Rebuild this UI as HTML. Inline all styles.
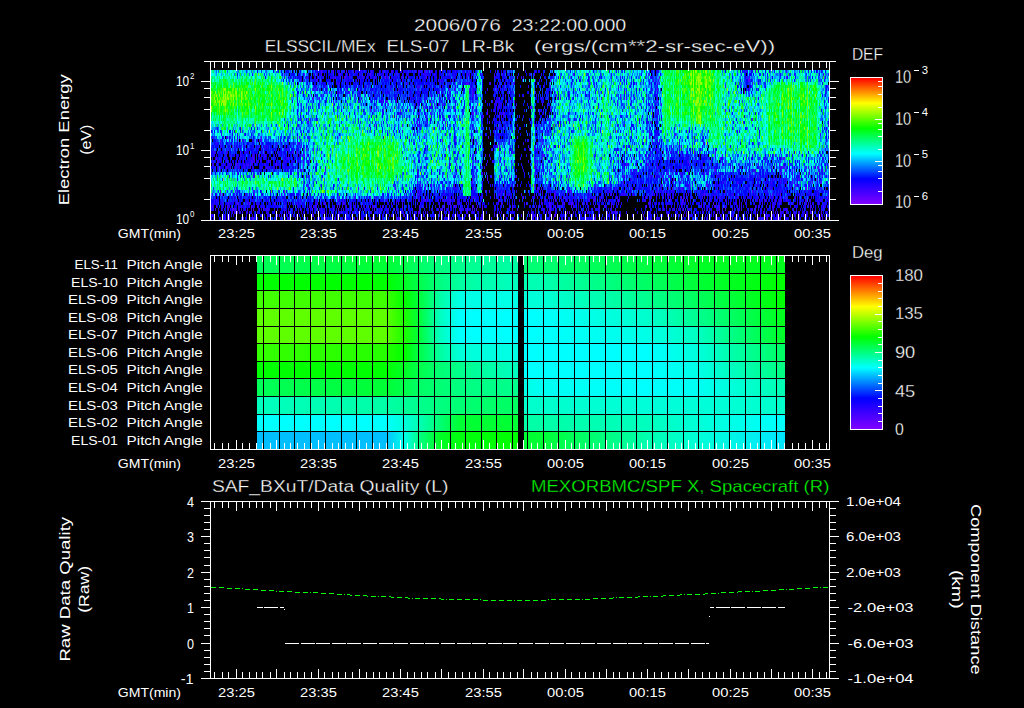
<!DOCTYPE html>
<html><head><meta charset="utf-8"><style>
html,body{margin:0;padding:0;background:#000;width:1024px;height:708px;overflow:hidden}
svg{display:block}
text{font-family:"Liberation Sans",sans-serif}
</style></head><body>
<svg width="1024" height="708" viewBox="0 0 1024 708" shape-rendering="crispEdges">
<rect width="1024" height="708" fill="#000"/>
<path stroke="#00ffcc" stroke-width="1" fill="none" d="M211.5 70v3m1 6v3m0 33v6m0 60v3m0 3v3m1 -117v3m0 99v3m0 6v3m1 -114v3m2 0v6m0 3v3m0 33v3m0 60v3m1 -114v3m0 45v3m0 12v3m1 -63v6m0 33v3m0 57v9m0 3v3m1 -66v6m0 3v3m1 -21v9m1 48v6m0 9v3m1 -75v3m0 15v3m0 45v3m1 -114v3m1 99v6m0 6v3m1 -15v3m1 -105v3m0 108v3m1 -108v3m0 39v3m1 -51v6m0 57v3m0 45v3m1 -3v6m0 3v3m1 -120v3m0 48v6m2 -60v3m0 3v3m1 -6v3m0 48v3m1 -57v3m0 36v3m0 6v3m0 6v3m0 54v3m1 -66v3m1 -48v3m0 48v3m0 6v3m0 33v3m1 -96v3m0 24v3m1 -33v3m0 45v6m0 54v6m1 -69v3m0 6v3m0 42v3m0 9v3m1 -66v3m2 6v3m1 -60v6m0 39v3m0 54v3m0 3v3m1 -69v3m0 6v6m0 3v3m1 -18v3m1 -6v3m0 9v3m0 3v6m1 -24v3m0 9v3m0 45v3m0 6v3m1 -12v12m1 -72v6m1 -54v9m0 42v3m0 9v3m1 -18v6m0 54v3m1 -105v3m0 30v3m0 6v3m0 6v3m0 51v3m1 -102v3m0 33v3m0 63v3m1 -111v3m0 45v3m0 54v3m1 -114v3m0 99v3m1 -105v3m0 48v3m0 69v3m1 -120v3m0 45v3m0 3v3m0 51v3m1 -111v3m0 99v3m0 12v3m1 -123v3m1 51v6m0 42v3m0 15v3m1 -84v3m0 66v3m1 -114v3m0 51v6m0 54v3m1 -12v3m2 -105v3m0 6v3m0 33v9m0 3v3m0 45v6m1 -66v6m0 6v6m0 45v3m1 -108v3m0 3v3m0 36v3m0 54v9m1 -15v3m0 15v6m1 -126v3m0 6v3m0 90v3m0 9v3m0 6v3m1 -123v3m1 54v3m0 3v3m0 39v3m1 -3v3m1 -3v3m0 3v6m1 -15v3m0 15v3m2 -123v3m0 54v6m1 42v3m1 -108v3m0 3v6m0 45v6m0 57v3m1 -18v3m1 -102v3m0 93v3m2 -60v3m0 66v3m1 -108v3m1 15v3m0 6v3m0 72v3m1 -108v3m0 42v3m0 48v3m0 9v3m1 -60v3m0 42v3m1 -84v3m0 87v3m1 -102v3m0 9v6m0 3v3m0 75v3m0 3v3m1 -90v3m0 12v3m0 6v3m1 -48v3m1 6v3m0 12v3m0 6v3m0 6v3m0 6v6m0 48v3m1 -81v3m0 3v3m0 63v3m1 -54v3m1 -36v3m0 18v3m0 6v3m0 3v3m0 51v3m1 -99v3m0 9v3m0 9v3m0 6v3m1 -36v3m0 9v6m0 6v6m0 57v3m0 6v3m1 -9v3m1 -48v3m0 42v3m1 -93v6m0 18v3m0 3v3m0 63v3m1 -69v3m0 9v3m0 45v3m1 -57v3m0 48v3m0 12v3m1 -126v3m0 30v3m0 21v6m0 18v3m1 -54v3m0 36v3m1 -60v3m0 6v3m1 -9v3m0 15v3m0 3v3m0 12v3m0 15v6m0 3v3m1 -39v3m0 72v3m1 -87v6m0 45v3m1 30v3m1 -105v3m0 9v3m0 48v3m1 -45v3m0 21v3m0 9v3m1 -60v3m0 15v3m0 18v3m0 24v3m0 6v3m0 3v3m1 -51v3m1 -3v3m0 15v3m0 30v3m1 -63v3m0 12v3m0 30v3m0 12v3m0 18v3m1 -75v6m0 63v3m1 -63v3m0 48v6m1 -66v3m0 6v3m0 24v3m0 6v3m0 3v3m0 6v3m1 -93v3m0 3v3m0 9v3m0 9v6m0 3v3m0 15v3m0 30v3m1 -93v3m0 15v6m0 21v3m0 9v3m0 3v3m0 30v6m1 -90v3m0 3v3m0 36v3m0 9v3m1 -51v3m0 12v3m0 12v3m0 15v3m1 -63v3m0 6v3m0 15v3m0 21v3m0 24v3m1 -84v3m0 3v3m0 9v3m0 27v6m0 3v3m0 15v3m0 18v3m1 -93v3m0 24v3m0 12v3m0 18v3m0 15v3m1 -57v3m0 27v3m0 12v3m1 -87v3m0 63v3m0 12v3m0 12v3m1 -84v3m0 66v3m0 6v3m0 3v3m1 -96v6m0 3v3m0 75v3m1 -96v3m0 39v3m0 3v3m0 18v3m0 6v3m0 6v3m0 6v3m1 -96v6m0 48v3m0 12v9m0 6v3m1 -81v3m0 63v3m0 3v3m1 -69v3m0 3v3m0 9v3m0 12v3m1 -3v3m0 6v6m0 6v3m0 3v6m1 -60v3m0 21v3m0 9v3m0 3v3m0 6v6m1 -24v3m0 24v3m0 6v6m0 3v3m1 -102v3m1 21v3m0 42v3m0 6v6m1 -51v3m0 27v3m1 -33v6m0 33v6m0 3v3m0 12v3m1 -87v3m0 36v3m0 39v3m1 -66v3m0 48v3m0 18v3m1 -87v3m0 21v3m1 -3v3m0 3v3m0 39v3m1 -96v3m0 15v6m0 6v3m0 9v3m0 9v3m0 24v3m1 -66v3m0 3v6m0 12v3m0 3v3m0 6v6m0 30v3m1 -45v3m0 15v6m0 3v3m0 6v3m0 9v3m1 -78v3m0 3v3m0 9v3m0 3v15m0 21v3m1 -75v3m1 -18v3m0 39v3m0 9v3m0 3v6m0 27v3m0 3v3m1 -66v3m0 27v3m0 33v3m1 -81v6m0 15v3m0 48v3m0 6v3m1 -87v3m0 24v3m1 -42v3m0 12v3m1 -12v3m0 36v3m0 30v3m0 3v3m1 -78v3m1 -15v3m0 12v6m0 3v6m1 -9v3m0 69v3m1 -48v3m0 15v3m1 -54v6m0 3v3m0 57v3m0 6v3m1 -51v3m0 24v3m0 12v3m0 3v3m1 -54v3m0 36v3m0 3v3m0 3v3m1 -9v3m0 3v3m1 -96v6m0 6v3m0 12v3m1 12v9m1 -48v3m0 9v3m0 3v3m0 9v3m0 3v3m0 42v12m0 3v3m1 -102v3m0 30v6m0 3v3m0 45v3m0 6v3m1 -99v3m0 33v3m2 -15v3m0 9v3m1 -18v3m0 15v3m0 12v6m0 6v3m0 12v3m0 12v3m1 -69v3m0 51v6m1 -63v12m1 -36v3m0 18v3m0 12v3m0 48v3m1 -69v3m0 57v9m1 -78v3m0 3v3m1 12v3m0 15v3m0 9v6m0 9v6m1 -54v3m1 -6v3m0 3v3m1 -9v3m0 57v3m1 -66v6m0 63v3m1 -90v3m0 9v3m0 6v3m0 54v3m1 -66v3m0 21v3m0 6v6m0 18v3m1 -48v3m0 36v3m1 -75v3m0 6v6m0 6v3m0 6v3m1 -9v3m0 57v3m1 -60v3m0 3v6m1 -12v3m0 54v3m1 -87v3m0 12v3m0 63v3m1 -84v3m0 9v3m0 69v3m1 -9v3m1 -51v3m0 51v3m1 -75v3m0 3v3m0 6v3m0 9v3m0 42v3m1 -84v6m0 3v3m0 3v3m0 66v3m1 -90v3m0 6v3m0 33v3m0 27v6m0 9v3m1 -78v3m0 63v3m1 -63v3m1 -21v3m0 9v3m0 75v3m1 -24v3m1 -42v3m0 6v3m0 33v3m0 9v3m1 -72v6m0 24v3m0 3v3m0 18v3m1 -51v6m0 6v3m0 33v6m1 -63v3m0 21v3m0 15v3m0 27v3m1 -60v3m1 -15v9m0 21v3m0 9v3m0 12v3m1 -54v6m0 45v3m1 -57v3m0 3v3m0 9v3m0 21v3m1 -45v3m0 30v9m1 -42v3m0 3v6m0 12v6m0 3v3m0 18v3m1 -57v3m0 15v9m0 18v3m1 -9v6m0 12v3m1 -72v3m0 12v3m0 21v3m0 15v3m1 -60v6m0 30v3m0 3v3m0 9v3m0 3v3m0 3v6m1 -57v3m0 3v3m0 39v3m1 -9v3m0 3v3m0 3v3m1 -78v3m1 -3v3m0 48v3m0 9v3m0 6v3m1 -48v3m0 21v3m1 0v3m1 -24v3m1 12v3m1 -24v3m0 3v3m0 6v3m1 -9v3m0 15v3m0 6v3m1 -27v3m0 6v3m1 -30v3m0 36v3m1 9v3m2 -6v3m1 -60v3m0 15v9m0 6v3m1 18v3m0 3v3m0 3v3m1 -93v3m0 48v3m0 18v3m1 -39v6m0 3v3m0 6v3m0 9v3m1 -51v6m0 3v3m0 18v3m0 9v3m0 21v3m1 -81v3m0 12v3m0 3v3m0 15v3m0 3v3m0 12v6m1 -36v3m0 6v6m0 12v3m0 6v3m1 -48v3m0 3v6m0 12v3m0 6v3m0 21v6m1 -78v6m0 3v3m0 15v3m0 27v3m0 6v3m1 -78v3m0 69v3m1 -30v3m0 21v3m1 -21v3m0 12v3m1 -45v3m0 24v6m0 6v3m1 -51v3m0 45v3m0 18v3m1 -57v3m0 30v3m1 -45v3m0 18v3m1 -24v3m0 15v3m0 18v12m1 -78v3m0 18v3m0 18v3m1 -48v3m0 33v3m0 9v3m1 -24v3m0 18v6m0 12v6m0 6v3m1 -39v3m0 24v3m0 12v3m1 -66v3m1 33v6m1 -3v6m1 -66v3m2 69v3m1 -69v3m0 27v3m1 -27v6m0 9v3m0 30v3m0 21v3m1 -78v3m0 6v3m0 36v3m0 27v3m1 -90v3m0 36v3m0 3v6m0 3v3m0 15v6m1 -69v3m0 3v3m0 12v3m0 3v3m1 -45v3m0 9v3m0 54v3m1 -60v3m0 18v3m0 6v3m0 18v9m0 6v3m1 -63v6m0 63v3m1 -75v3m0 12v9m0 27v3m0 3v3m0 21v3m0 3v3m0 3v3m1 -63v3m0 15v3m0 9v3m0 6v3m0 6v3m0 6v3m1 -105v9m0 6v3m0 18v3m0 3v6m0 18v3m0 12v3m1 6v3m1 -96v3m0 21v3m0 45v12m0 9v3m0 6v3m0 3v3m2 -75v3m0 12v3m0 24v3m0 6v6m1 -18v3m0 12v3m2 -48v3m2 -27v3m0 3v3m1 18v3m1 18v3m1 -78v3m0 24v3m0 36v3m0 6v3m1 -72v3m0 18v3m0 6v3m0 9v3m0 42v3m0 9v3m1 -96v3m0 6v3m0 30v3m0 6v3m0 33v3m1 -96v3m0 18v6m0 45v6m0 6v3m0 6v3m0 3v6m1 -120v3m0 18v3m0 54v3m13 15v3m2 0v3m0 6v3m1 -18v3m0 3v3m0 3v3m1 -24v3m2 24v3m2 -27v6m0 3v3m1 -15v3m0 12v3m0 6v3m2 -3v3m1 -39v3m0 12v3m0 15v3m1 -30v3m0 21v3m2 -12v3m1 -24v3m0 6v3m0 15v3m0 3v3m1 -45v3m0 21v3m1 -27v6m1 -60v3m0 42v6m0 39v3m1 -60v3m0 21v3m0 18v3m17 -81v3m0 18v3m0 24v3m1 -18v3m0 9v3m0 30v3m0 9v3m0 3v3m0 3v3m1 -84v3m0 27v3m0 24v3m0 9v3m0 6v6m0 6v3m1 -114v3m0 54v3m7 27v3m3 -18v3m0 6v6m0 6v3m1 -27v3m1 -15v3m0 21v3m0 6v3m0 3v3m1 -33v3m0 33v3m1 -27v3m0 3v3m0 3v3m2 -33v3m0 9v3m1 -69v3m1 -9v3m0 12v3m0 6v3m0 15v3m0 21v3m0 18v3m0 12v3m1 -93v3m0 48v3m0 12v6m1 -15v3m1 -24v3m0 3v3m0 15v3m0 18v3m1 -75v3m0 12v6m0 21v3m0 24v3m1 -99v3m0 27v3m0 9v3m0 39v3m0 12v3m0 3v3m1 -102v3m0 18v3m0 57v3m0 9v3m1 -60v3m0 21v6m0 33v3m1 -51v3m0 21v3m0 6v3m1 -96v3m0 3v3m0 3v3m0 15v3m0 3v3m0 3v3m0 33v6m1 -84v3m0 6v3m0 3v3m0 6v3m0 3v3m0 18v3m0 9v3m0 42v3m1 -108v3m0 9v3m0 9v3m0 39v3m0 27v6m1 -105v3m0 9v3m0 84v3m0 9v3m1 -111v3m0 21v3m0 36v3m0 15v3m0 9v3m1 -78v3m0 6v3m0 30v3m0 15v3m0 6v3m0 3v3m0 21v3m1 -114v3m0 18v3m0 18v3m0 9v6m0 12v6m1 -75v3m0 18v6m0 39v3m1 -3v3m0 3v3m0 3v3m0 9v3m1 -81v3m0 12v3m0 9v6m0 57v3m1 -93v3m0 21v3m0 3v3m0 6v3m0 3v3m0 9v12m1 -48v3m0 9v3m0 6v3m0 12v3m0 21v3m0 3v3m1 -102v3m0 54v3m0 27v3m0 15v3m1 -111v3m0 21v3m0 15v6m2 -6v3m1 -24v3m0 3v3m0 12v3m0 9v6m0 42v6m1 -114v3m0 3v3m0 9v3m0 3v3m0 6v3m0 3v3m0 3v3m0 12v3m0 45v3m0 6v3m1 -81v3m0 15v3m0 45v3m1 -108v3m0 9v3m0 87v3m1 -108v3m0 9v3m0 3v3m0 99v3m1 -96v3m0 3v3m1 -24v3m0 30v3m0 3v3m1 -48v3m1 -3v3m0 21v3m0 6v3m0 24v3m0 36v3m0 9v3m1 -63v6m1 -24v3m1 -42v3m0 66v3m0 9v3m0 18v3m0 6v3m1 -45v6m0 6v3m0 9v6m1 -75v6m1 30v3m1 -42v3m1 9v3m0 3v3m0 6v3m0 6v3m0 33v6m1 -93v3m0 33v3m0 21v3m1 -60v3m0 21v3m0 39v3m0 21v3m1 -96v3m0 12v6m0 27v3m0 18v3m0 24v6m1 -105v3m0 12v3m0 21v3m0 18v3m0 45v3m1 -99v3m0 21v6m0 6v3m0 33v3m0 3v3m0 12v3m1 -108v3m0 24v3m0 21v3m0 3v3m0 3v3m0 15v3m1 -72v3m0 18v6m0 21v3m0 3v6m0 3v3m0 3v3m1 -57v9m0 3v3m0 3v3m0 15v3m0 3v3m0 18v3m1 -60v3m0 9v3m0 48v3m1 -93v3m0 6v3m0 39v3m0 3v3m0 9v6m0 21v3m0 6v3m1 -117v3m0 6v3m0 3v6m0 9v3m0 3v3m0 3v3m0 3v3m0 24v3m1 -78v3m0 27v3m0 6v6m0 27v6m0 3v3m0 21v3m1 -105v6m0 3v3m0 33v3m0 12v3m0 3v3m0 6v3m1 -72v3m0 3v3m1 0v3m0 15v6m0 15v3m0 12v3m0 3v3m1 -75v3m0 21v6m0 12v3m1 -39v3m1 18v3m0 3v3m0 21v3m0 6v3m0 3v6m1 -72v3m0 9v3m0 18v3m0 9v3m0 18v3m0 9v3m0 3v3m1 -30v3m0 33v6m1 -93v3m0 15v3m0 6v3m0 12v3m0 18v3m1 -78v3m0 30v3m0 9v3m0 12v3m0 24v3m0 15v3m1 -102v3m0 12v3m0 3v3m0 6v3m0 3v3m0 33v3m1 -72v3m0 21v3m0 24v3m1 -33v3m0 12v3m1 -54v3m0 27v3m0 36v3m1 -51v3m1 15v3m0 27v3m0 9v3m1 -75v3m1 18v3m0 36v3m1 -9v3m1 -63v6m0 21v3m0 3v3m0 18v3m0 24v3m0 3v3m0 3v6m1 -42v3m0 3v3m0 3v3m1 -27v3m0 12v12m1 -75v3m0 12v3m0 27v3m1 -27v3m0 6v6m0 18v3m0 12v3m1 -54v3m0 15v6m0 39v3m1 -81v3m0 42v3m1 -33v3m0 66v3m1 -48v3m0 6v3m1 -54v3m0 45v6m1 -45v3m0 3v3m0 3v3m2 -15v3m0 9v3m0 33v3m0 21v3m1 -81v3m0 21v6m0 18v3m0 15v3m0 6v3m1 -72v3m0 3v3m0 36v3m0 3v9m0 3v3m1 -54v3m0 12v3m0 3v3m0 6v3m0 12v3m1 3v3m1 -66v3m0 3v6m0 3v3m0 36v3m0 27v3m1 -75v3m1 -15v3m0 12v3m1 33v3m0 3v3m2 -30v3m0 24v6m0 6v3m0 3v3m1 -42v3m0 15v3m1 -60v3m0 21v3m0 9v3m4 -24v3m0 9v3m0 15v3m0 15v3m5 -48v3m0 42v3m1 -69v3m0 30v3m2 -39v3m0 6v3m0 18v3m0 24v3m1 -42v3m0 6v3m0 3v3m0 75v3m1 -111v6m0 15v3m0 18v3m0 3v6m1 3v3m1 18v6m1 -78v3m0 9v3m0 24v3m0 6v3m1 6v3m1 -54v3m0 48v3m1 -9v3m0 3v3m1 -30v3m1 -30v3m0 21v6m0 3v3m0 6v3m1 -9v3m0 6v3m0 6v3m1 -54v6m0 6v3m0 9v3m0 3v3m0 3v6m0 6v3m1 -30v3m0 33v3m1 -69v3m0 15v3m0 21v3m1 0v3m0 60v3m2 -48v3m1 -45v6m0 12v6m0 12v3m1 -15v3m0 3v3m1 -54v3m0 6v3m0 3v3m0 6v15m0 69v3m1 -54v3m0 9v3m1 -75v3m0 45v3m1 3v3m0 6v6m1 -15v3m0 21v3m1 -36v3m0 18v3m1 0v3m2 -30v3m0 15v3m0 9v3m1 -18v12m0 30v6m1 0v3m2 -48v3m0 45v3m1 -63v3m0 3v6m1 -3v3m1 -6v3m1 0v3m0 9v3m1 -3v3m0 6v3m1 -27v3m0 9v3m1 36v3m1 -45v3m1 42v3m3 -6v3m1 -57v3m0 51v3m1 -60v3m3 6v3m0 9v6m0 24v3m0 6v3m1 -60v3m0 9v3m0 3v3m1 3v3m1 -12v3m1 -9v3m0 9v6m1 -81v6m0 3v3m0 3v6m0 6v9m0 3v3m0 6v6m0 6v6m0 6v3m1 -75v3m0 15v3m0 3v6m0 3v3m0 27v3m0 15v3m1 -6v3m1 -6v3m0 6v3m1 -75v3m0 33v3m0 3v6m0 9v3m0 9v3m0 15v3m1 -99v3m0 24v3m0 12v6m0 9v6m1 -66v3m0 3v3m0 3v3m0 6v3m0 12v6m0 27v3m0 27v3m1 -96v6m0 6v3m0 12v3m0 3v3m0 3v3m0 12v3m1 -57v3m0 21v3m0 30v3m0 3v3m0 12v3m0 12v3m1 -87v3m0 30v3m0 6v3m0 18v3m0 3v3m2 -57v6m0 27v3m0 33v3m1 -102v3m0 24v3m1 21v3m0 3v3m0 3v3m0 33v3m1 -102v3m0 15v3m0 30v3m0 27v3m0 3v3m1 -72v3m0 36v3m0 12v3m1 -60v3m0 3v3m0 6v6m0 18v3m0 27v3m0 12v3m1 -102v3m0 24v3m1 -18v6m0 6v3m0 27v3m0 6v3m0 3v6m1 -57v3m0 12v3m0 24v3m0 6v3m0 21v3m0 3v3m1 -102v3m0 6v3m0 33v3m0 3v3m0 21v3m0 3v3m0 15v3m1 -78v3m0 24v3m1 -48v6m1 -6v3m0 18v3m0 9v3m0 3v3m0 27v3m0 9v3m1 -75v3m0 6v3m0 9v3m0 6v3m1 -3v3m0 12v9m0 6v3m0 9v3m1 -84v3m0 15v3m0 39v3m1 -66v3m0 9v3m0 6v3m0 30v3m0 27v3m1 -30v3m1 -39v6m0 6v3m0 3v3m0 3v3m0 24v3m1 -45v3m0 6v3m0 9v3m1 -21v3m0 9v3m0 15v3m0 9v3m1 -51v3m0 9v3m0 6v3m0 12v3m1 -69v3m0 30v3m0 9v3m0 21v3m0 12v3m1 -33v3m0 18v3m1 -54v3m0 6v3m0 15v6m0 6v3m0 6v3m0 12v3m1 -72v3m0 24v3m0 9v3m0 21v6m1 -51v3m0 12v3m0 3v9m0 3v3m1 -57v6m0 36v9m0 9v3m0 15v3m1 -96v3m0 36v3m1 -3v3m0 27v3m0 3v3m0 9v3m1 -51v3m0 18v3m0 24v3m1 -87v3m0 15v6m0 9v3m0 51v3m1 -90v3m0 63v3m1 -72v3m0 3v3m0 12v3m0 3v3m0 18v6m0 24v3m1 -81v3m0 30v3m0 6v3m0 12v3m0 6v6m0 3v3m1 -51v3m0 6v3m0 21v6m0 9v3m0 3v3m0 3v3m1 -78v3m0 33v6m0 24v3m0 3v6m1 -90v3m0 30v6m0 3v6m0 6v6m0 6v9m1 -66v3m0 27v3m0 6v6m0 6v3m0 6v3m1 -3v3m1 -60v3m0 12v3m0 18v3m1 -36v3m0 6v3m0 6v3m0 3v3m0 3v6m0 9v3m0 3v3m1 -66v3m0 12v3m0 18v3m0 30v3m0 12v3m1 -75v3m1 -3v6m0 18v3m0 9v3m0 27v3m0 15v3m1 -93v3m0 15v3m0 30v3m0 15v3m1 -66v3m0 21v3m0 3v3m0 12v3m0 3v3m1 -9v3m0 12v3m0 15v3m3 -84v3m0 33v3m0 24v6m1 -3v3m2 -18v6m0 6v3m1 -66v3m0 9v9m0 9v3m0 12v3m0 9v6m2 -69v3m1 -6v3m1 -6v3m0 39v3m0 12v3m0 24v3m2 -48v3m0 18v3m0 15v3m1 -69v3m0 57v3m0 12v3m2 -27v3m0 3v6m1 3v3m0 3v6m1 -90v3m0 75v3m1 -75v3m0 6v3m0 15v3m0 6v3m1 -42v3m0 108v3m1 -111v3m0 3v6m0 48v3m0 6v3m0 6v6m0 3v3m1 -60v3m1 -27v3m0 69v3m1 -84v3m0 3v3m0 3v6m0 54v6m1 -81v3m0 78v3m0 27v3m1 -102v3m0 12v3m0 3v3m0 33v3m0 3v3m1 -69v3m0 81v3m1 -93v3m1 36v3m0 30v3m1 3v9m0 6v3m0 18v3m1 -111v3m0 66v3m1 -60v3m0 48v3m0 3v3m0 21v3m1 -105v3m0 69v3m0 18v3m1 -6v9m1 -78v3m0 24v9m0 6v3m0 12v3m0 3v3m0 12v3m1 -93v3m0 69v3m0 21v3m1 -108v3m0 9v3m0 3v3m0 30v3m0 27v3m0 12v3m2 -90v6m0 63v3m0 15v3m1 -96v6m0 69v3m1 -75v6m0 21v3m1 -27v3m0 93v3m1 -81v3m0 51v6m0 9v3m1 -84v3m0 6v3m0 12v3m0 9v6m0 9v6m0 9v3m1 -69v3m0 6v3m0 6v3m0 9v3m0 21v9m1 -54v3m0 24v3m0 3v3m0 9v3m1 -57v3m0 9v3m0 48v3m1 -30v3m0 3v3m0 12v3m0 6v3m1 -54v3m0 36v3m1 -72v3m0 18v3m0 9v6m0 6v3m0 3v3m0 15v3m0 24v3m1 -78v3m0 36v3m0 45v3m1 -99v3m0 48v3m0 9v3m0 12v3m1 -84v3m0 27v3m0 9v3m1 -54v3m0 9v3m0 21v6m0 6v3m0 15v3m0 33v3m0 3v3m1 -111v3m0 3v3m0 102v3"/><path stroke="#00ffff" stroke-width="1" fill="none" d="M211.5 73v3m0 45v3m0 9v3m0 39v3m1 -105v3m0 102v3m0 3v3m1 -108v3m0 39v3m0 6v3m0 48v3m1 -60v3m0 51v3m1 -105v3m0 51v6m0 45v3m1 -54v6m0 45v3m1 -114v3m1 60v3m0 36v3m0 18v3m1 -123v3m1 -3v6m0 54v3m0 48v3m1 -66v3m0 54v3m0 3v3m1 -111v3m0 96v3m0 6v3m0 3v3m1 -63v3m1 -60v3m0 111v3m1 -57v3m0 42v3m0 6v3m1 -60v6m0 39v3m1 -54v3m0 12v3m0 51v3m1 -66v3m2 -63v3m0 3v3m0 93v6m1 -108v3m0 57v3m0 60v3m1 -123v3m0 108v3m1 -51v6m0 45v3m1 -114v6m0 51v3m1 -66v3m0 102v3m1 -45v3m0 39v3m1 -66v9m0 9v3m1 -60v3m0 45v3m0 51v3m1 -6v3m0 3v3m1 -48v6m0 48v3m1 -120v3m0 60v3m0 36v3m0 3v3m1 -108v3m0 72v3m1 -27v3m1 -6v3m0 63v3m1 -54v3m0 51v3m2 -3v3m1 -123v3m0 54v3m0 6v3m1 -63v3m0 51v3m2 -60v3m0 114v3m1 -9v3m0 6v3m1 -120v3m1 105v6m1 3v3m1 -63v6m2 -15v3m0 3v3m1 -57v3m0 51v3m0 57v6m1 -126v3m0 3v3m3 48v3m0 3v3m0 3v3m0 30v3m1 -105v3m0 48v6m0 6v3m0 42v3m0 12v3m1 -105v3m0 78v6m0 6v3m0 3v3m1 0v3m1 -63v6m0 33v6m0 12v3m1 -63v3m0 54v3m1 -12v3m0 9v3m1 -123v3m0 51v3m0 57v3m1 -117v3m0 54v3m1 -60v3m0 54v12m1 -66v3m0 3v3m0 39v6m0 9v3m1 -66v3m0 48v3m0 9v3m0 33v3m0 3v3m0 6v3m1 -18v6m1 -99v3m0 45v3m0 48v3m1 -48v3m1 -60v3m1 0v3m0 45v3m0 42v6m0 9v3m1 -117v3m0 57v3m0 36v3m0 15v6m1 -78v3m0 9v3m0 39v6m0 9v3m1 -57v3m0 54v3m1 -75v12m1 -51v6m0 27v3m0 12v3m0 3v3m2 57v3m1 -117v3m0 30v6m0 57v3m1 -75v3m0 3v9m0 60v3m1 -96v3m0 12v3m0 27v3m1 -33v3m1 -24v3m0 6v3m0 21v3m0 24v3m0 48v3m1 -108v3m0 24v3m0 9v3m0 45v3m0 3v3m1 -81v6m0 78v3m1 -66v3m1 -36v3m0 18v6m0 12v3m0 63v3m1 -114v6m0 51v3m0 27v3m0 18v3m2 -96v6m0 18v3m0 6v3m0 6v3m1 -60v6m0 15v9m0 18v3m0 42v3m0 6v3m1 -99v3m0 6v3m0 72v3m0 9v3m1 -93v3m0 51v3m0 6v3m0 6v3m1 -87v3m0 12v3m0 6v3m0 3v3m0 30v3m0 30v3m0 3v3m0 3v3m2 -93v3m0 18v3m1 -54v6m0 24v3m0 9v3m0 39v3m0 3v6m0 18v3m1 -57v3m0 3v3m0 30v3m0 15v3m1 -75v3m0 15v3m0 6v3m1 -54v3m1 -3v3m0 18v3m0 33v3m1 -54v3m0 30v3m0 42v3m0 12v3m1 -111v6m0 45v3m0 3v3m0 3v3m0 3v3m0 27v3m1 -93v6m0 12v3m0 27v3m0 12v3m0 3v3m1 -72v3m0 18v3m0 72v3m1 0v3m1 -93v3m0 18v3m0 21v3m1 -57v3m0 18v3m0 12v3m0 9v3m0 15v3m0 18v3m0 12v3m1 -90v3m0 6v3m0 21v3m0 24v3m0 18v3m1 -75v3m0 12v3m0 24v3m0 6v3m0 6v3m0 9v3m0 6v3m1 -90v3m0 9v3m0 12v3m0 3v3m0 33v3m1 -84v3m0 57v3m1 -51v3m0 48v3m0 9v3m1 -57v3m0 21v3m0 3v3m0 15v3m1 -60v3m0 3v3m0 21v3m0 18v3m0 9v3m1 -78v3m0 9v3m0 39v3m0 3v3m0 6v3m1 -54v6m0 24v3m0 9v6m0 12v3m0 3v3m1 -63v6m0 3v3m0 60v3m1 -93v3m1 -21v3m0 54v3m0 24v3m1 -66v6m0 27v3m0 51v6m1 -93v3m0 24v6m0 6v3m0 15v3m1 -78v3m0 51v3m0 12v3m0 18v3m0 12v3m1 -96v3m0 3v3m0 12v3m0 51v6m0 3v3m1 -72v3m0 21v3m0 15v6m0 3v3m0 12v3m1 -57v3m0 30v3m0 27v3m1 -87v3m0 3v3m0 6v3m0 3v3m0 3v3m0 6v3m0 51v3m1 -60v3m1 -39v3m0 15v3m0 27v6m0 3v3m1 -42v3m0 6v3m0 30v3m0 9v3m0 3v3m0 6v3m1 -48v6m1 -42v3m0 6v3m0 3v3m0 12v3m0 39v3m0 6v3m0 3v3m1 -60v3m0 9v3m0 36v3m1 -105v3m0 15v3m0 84v3m1 -87v3m1 -15v3m0 18v3m0 3v3m0 57v3m0 3v3m0 3v3m1 -18v3m0 9v3m1 -99v3m0 12v3m0 36v3m0 30v3m1 -9v3m0 9v3m1 -99v3m0 15v3m0 6v3m0 66v3m1 -87v3m0 18v3m1 -3v3m0 48v3m2 -84v3m0 87v3m0 3v3m1 -90v3m0 6v3m1 -3v3m0 12v3m1 3v3m0 15v3m1 -51v3m0 6v3m0 66v3m0 6v6m1 -102v3m0 33v3m0 60v3m1 -75v3m0 12v3m0 30v3m0 6v3m1 -69v3m0 12v6m0 48v3m0 3v3m1 -87v3m0 27v3m2 -21v3m0 3v3m1 -27v3m0 12v6m0 63v3m0 6v3m1 -66v3m2 54v3m2 -93v12m0 3v3m0 78v3m1 -96v3m0 87v6m1 -63v3m0 21v3m0 21v6m1 -69v3m0 3v3m0 6v6m1 54v3m1 -69v6m1 6v3m0 36v3m0 12v3m1 -3v3m1 -9v6m2 -90v3m0 6v3m0 78v3m1 -93v3m0 15v3m0 66v3m1 -90v3m1 6v3m0 78v3m2 -69v6m0 48v3m0 6v3m1 -6v3m1 -75v6m1 -18v3m0 87v3m1 -9v3m1 -66v3m0 9v3m1 -36v3m0 15v3m0 57v3m1 -72v3m0 9v3m0 3v3m0 57v6m1 -93v3m0 12v3m0 69v3m1 -72v3m2 12v3m1 -30v3m0 9v3m0 9v3m1 -9v3m1 -12v3m0 3v3m0 12v3m1 6v3m0 24v3m1 6v6m1 -45v3m1 -45v3m0 12v3m0 6v3m0 6v3m0 54v3m1 -48v3m0 6v3m1 -27v3m0 3v3m0 6v3m0 3v3m0 6v3m0 3v3m0 9v3m0 9v3m1 -93v3m0 3v3m0 24v6m0 48v3m1 -87v3m0 6v3m0 39v6m1 -60v3m0 24v3m0 27v3m0 18v3m1 -63v3m0 6v3m0 6v6m0 6v6m1 -54v3m0 12v3m0 21v3m0 42v3m1 -69v3m0 42v3m0 9v3m0 9v3m1 -54v3m0 15v9m0 6v3m1 -69v3m0 15v3m1 -15v3m0 18v3m0 6v3m0 18v6m0 3v3m1 -30v3m0 33v3m1 -48v3m0 15v3m0 18v3m1 -66v3m0 15v3m0 9v3m0 9v3m0 15v3m1 -36v3m0 12v3m0 21v3m1 -66v3m0 30v3m0 6v3m1 -21v3m0 36v3m1 -9v3m0 3v3m1 -78v6m0 30v3m0 21v3m1 -48v3m0 24v3m0 6v3m2 -45v3m0 69v6m1 -75v3m0 21v3m0 3v3m0 15v3m0 9v3m1 -51v3m0 9v3m1 -42v3m0 84v3m1 -87v3m0 54v3m0 6v3m1 -72v3m0 12v3m0 18v3m0 30v3m1 -60v3m0 24v3m0 3v3m0 18v3m1 -42v6m0 6v3m0 33v3m1 -54v3m1 6v3m0 3v3m0 21v3m0 9v3m1 -3v3m1 -42v6m0 9v3m0 9v3m0 9v3m1 -78v3m0 9v6m0 45v3m0 9v3m1 -63v3m0 39v3m0 9v6m0 6v3m1 -66v3m0 6v6m0 33v3m1 -57v3m0 24v3m0 24v3m1 -33v3m0 3v3m0 3v3m0 3v3m1 -66v3m0 27v3m0 9v6m0 6v3m0 12v3m0 12v6m0 3v3m1 -69v3m0 12v3m0 9v3m0 24v6m0 9v3m1 -39v3m0 24v3m1 -84v3m0 54v3m0 3v3m0 3v3m1 -42v3m0 45v3m1 -72v3m0 3v3m0 15v3m0 12v3m0 39v3m2 -78v3m0 33v6m1 -54v3m0 9v3m0 3v9m0 9v9m1 -24v3m0 6v3m0 21v3m0 21v3m1 -63v3m0 45v3m0 9v3m0 3v3m1 -96v6m0 3v6m0 3v3m0 3v3m0 15v3m0 39v3m0 3v3m1 -81v3m0 3v6m0 3v3m0 3v3m0 3v3m0 42v9m1 -63v3m0 54v3m1 -69v3m1 63v3m1 -69v3m0 18v3m1 -48v3m0 6v3m0 36v3m0 3v3m1 -51v3m0 3v3m0 9v3m0 6v3m0 9v3m1 -51v3m0 36v3m0 6v3m0 9v3m1 -57v3m0 9v3m0 6v3m0 27v3m0 6v3m0 9v3m0 12v3m1 -75v3m0 30v6m1 3v3m0 6v6m0 6v3m0 6v3m1 -78v3m0 24v3m0 27v3m0 3v3m0 3v6m1 -93v3m0 6v6m0 12v3m0 12v6m0 12v3m0 21v3m1 -54v3m2 -15v3m0 39v3m2 -27v3m0 33v3m1 -54v3m0 9v3m0 6v3m1 -30v3m0 48v3m0 6v6m1 -66v3m2 18v3m0 6v3m0 9v3m0 9v3m0 3v3m1 -39v3m0 6v3m1 -36v3m0 15v6m0 6v3m0 45v3m1 -102v3m0 36v9m0 18v3m0 6v3m0 6v3m0 3v3m1 -93v3m0 39v3m0 6v3m0 15v9m0 6v6m0 6v3m1 -84v3m0 6v3m0 3v3m0 3v3m0 3v3m0 27v3m0 3v3m0 6v9m0 12v3m1 -105v3m0 27v3m0 18v3m0 33v3m1 -99v9m0 15v3m0 24v3m0 12v3m2 51v3m7 -60v3m5 9v3m1 -9v9m1 -6v3m3 9v3m1 -18v3m0 3v3m0 3v3m1 6v3m1 -24v3m0 15v3m1 3v3m1 -30v3m1 0v3m0 3v3m0 15v3m2 -30v3m0 33v3m1 -27v6m1 0v6m0 3v3m2 0v6m1 -63v3m0 36v3m1 -42v3m9 -42v3m8 6v3m0 6v3m0 45v6m0 3v6m0 6v3m1 -87v3m0 42v3m0 6v3m1 12v3m1 -24v3m0 45v3m8 -36v3m0 24v3m1 -42v6m0 9v3m0 30v3m1 -48v3m0 27v3m0 12v3m1 -57v3m0 39v3m1 9v3m1 -63v3m1 12v3m0 33v3m1 -36v3m0 12v3m1 -15v3m0 24v3m1 -36v3m0 6v3m0 21v3m0 6v3m1 -99v3m0 63v3m0 12v3m0 18v3m1 -15v3m1 -72v3m0 30v3m0 15v3m0 24v3m1 -114v3m0 3v3m0 9v3m0 18v3m0 24v3m0 21v3m1 -75v3m0 45v6m0 9v6m0 3v3m1 -93v3m0 27v3m0 39v3m0 3v6m0 9v3m1 -93v3m0 6v3m0 51v3m0 9v3m0 15v3m1 -84v3m1 -6v3m0 6v3m0 6v3m0 6v3m0 57v3m0 9v3m0 3v3m1 -111v3m0 6v3m0 12v3m0 12v3m0 9v3m0 9v6m0 6v6m0 3v3m0 18v3m1 -114v3m0 63v3m0 18v9m0 3v3m1 -105v3m0 9v3m0 21v3m0 18v3m0 33v3m1 -87v3m0 21v3m0 6v3m0 3v3m0 6v3m0 42v3m1 -69v6m0 27v3m0 6v3m0 12v3m0 6v3m0 12v3m1 -114v3m0 27v3m0 3v3m0 9v3m0 15v3m1 -57v3m0 6v3m0 9v3m0 15v3m0 30v3m1 -84v3m0 42v3m0 6v3m0 3v3m0 3v3m0 6v3m0 9v3m1 -3v6m0 12v3m1 -12v3m1 -108v6m0 15v3m0 12v3m0 6v3m0 30v3m0 27v6m1 -90v3m0 6v3m1 -36v3m0 3v3m0 21v3m0 12v3m1 -21v3m0 33v3m0 45v3m0 3v3m1 -105v3m0 15v9m0 18v3m0 57v3m1 -105v3m0 6v3m0 24v3m1 -57v3m0 9v6m0 3v3m0 24v3m0 6v3m1 -60v3m0 9v3m0 3v3m0 9v3m0 84v3m1 -108v3m0 12v3m0 9v3m1 -24v3m0 18v3m0 21v3m1 -45v3m0 12v3m0 6v3m0 3v3m1 -54v3m0 3v3m0 15v3m0 12v3m1 -18v3m0 33v6m1 -36v3m0 9v6m0 6v3m0 3v3m0 51v3m1 -117v3m0 9v3m0 33v3m0 3v3m1 -48v6m0 6v3m0 6v3m0 6v3m0 69v3m1 -114v3m0 3v3m1 27v3m0 21v3m0 51v3m1 -114v3m0 24v3m0 6v3m0 15v6m0 15v3m0 24v6m1 -90v3m0 21v3m0 6v3m0 6v3m0 39v3m0 3v3m1 -114v3m0 6v3m0 18v3m0 3v3m0 3v3m0 3v6m0 9v3m1 -54v3m0 3v3m0 3v3m0 6v3m0 3v3m0 3v3m0 42v3m0 3v3m0 6v3m1 -105v3m0 12v3m0 9v3m0 36v3m0 3v3m1 -54v3m0 6v3m0 3v3m0 3v3m0 6v3m0 39v3m1 -63v3m0 24v6m0 36v6m1 -102v3m0 51v6m1 -21v3m0 30v3m0 6v3m1 -87v3m0 15v9m0 30v3m0 6v12m0 21v3m1 -96v3m0 93v3m0 3v3m1 -105v3m0 12v6m0 21v3m0 18v3m0 3v3m0 15v3m0 12v3m1 -93v3m0 33v3m1 -63v3m0 6v3m0 12v3m0 27v3m0 15v6m0 15v3m0 6v3m0 9v3m1 -117v3m0 39v3m0 3v3m0 3v3m0 15v3m0 15v9m1 -96v3m0 48v3m0 36v9m0 6v3m1 -87v6m0 21v3m0 15v3m0 24v3m0 12v3m1 -96v6m0 3v3m0 30v3m0 27v6m0 3v3m1 -90v3m0 36v6m0 3v3m0 21v6m1 -87v3m0 3v3m0 3v3m0 48v3m2 -69v3m0 18v6m0 30v3m0 15v3m0 21v3m0 6v3m1 -60v3m0 3v6m0 21v3m0 15v3m1 -87v3m0 18v3m0 30v3m0 6v3m0 18v3m1 -105v3m0 3v3m0 15v3m0 9v3m0 12v3m0 9v3m0 9v3m1 -69v3m0 3v3m0 6v3m0 6v3m0 6v3m0 18v3m1 -48v3m0 21v3m0 24v3m0 15v3m1 -81v3m0 45v3m0 15v3m0 30v3m1 -84v3m0 15v3m0 15v3m0 3v3m0 9v3m0 9v3m1 -84v3m0 33v3m0 12v3m1 -48v3m0 3v3m0 33v3m0 12v3m0 6v3m0 9v3m0 6v6m1 -63v3m0 6v3m1 -18v3m0 3v3m0 3v3m0 6v3m0 6v3m0 21v3m0 9v3m1 -81v3m0 9v3m0 12v6m0 3v3m1 -69v6m0 9v3m0 24v3m0 12v3m1 0v3m0 15v3m1 -72v6m0 27v3m1 3v3m1 -12v6m1 -3v3m0 33v6m0 3v3m1 -39v3m0 24v6m0 6v3m0 3v3m1 -90v3m0 39v6m0 6v3m0 21v3m1 -48v3m0 36v6m0 9v3m1 -72v3m0 3v3m0 12v3m0 6v3m1 -57v3m0 33v3m0 18v3m0 3v3m0 9v6m0 6v3m0 3v3m1 -93v3m0 6v3m0 12v6m0 3v3m0 18v3m0 6v3m0 9v3m0 9v3m1 -39v3m1 -51v3m0 33v6m0 18v3m1 -60v3m0 51v3m0 3v3m0 9v6m1 -90v3m0 9v6m0 18v3m0 18v9m0 9v3m0 9v3m0 3v3m1 -72v3m0 12v3m0 15v3m1 -60v3m0 24v3m0 45v3m0 18v3m1 -93v3m0 33v3m0 9v6m0 21v3m1 -81v3m0 24v6m0 3v3m0 39v3m1 -81v6m0 24v3m0 27v3m0 3v3m0 12v3m1 -84v3m0 30v3m0 18v3m0 27v3m1 -90v3m0 6v3m0 6v3m0 6v3m0 24v3m0 6v3m0 9v3m0 3v3m1 -72v3m1 -12v3m0 6v3m0 15v3m0 3v3m0 24v3m0 6v6m1 -78v3m0 15v3m0 48v3m1 -54v3m1 24v3m1 9v3m1 -30v3m1 24v3m0 3v3m5 -51v3m0 36v3m1 -42v6m0 9v3m0 6v3m0 24v3m1 -57v6m0 39v3m0 3v3m1 -60v3m0 18v3m0 21v3m1 -9v3m2 24v3m0 6v3m0 3v3m0 15v3m1 -21v3m0 12v3m0 9v3m2 -57v3m2 9v3m0 27v3m0 6v3m1 -57v3m0 3v3m0 3v6m0 9v3m1 -45v3m0 3v3m0 18v3m1 3v3m1 -54v3m1 42v3m0 33v3m1 -48v3m1 -3v3m0 6v3m0 36v3m2 -54v3m0 42v3m1 -66v3m0 9v3m1 9v3m0 6v3m1 -51v3m0 21v9m0 6v3m1 6v3m0 39v3m1 -57v3m0 6v3m1 -12v6m0 6v3m0 3v3m1 -9v3m1 -24v3m0 9v3m0 42v3m1 -42v3m1 0v3m0 3v3m1 -27v3m0 9v3m2 3v3m0 30v3m2 -9v3m1 -48v3m1 15v3m1 0v3m1 -21v3m0 18v3m1 -21v3m0 3v3m0 33v3m1 -42v3m0 45v3m1 -57v3m1 -6v6m0 12v6m1 -6v3m0 39v3m1 -39v6m0 27v3m1 -48v3m0 9v3m0 33v3m1 -54v3m0 3v3m0 3v3m0 27v3m1 -30v3m1 0v3m1 -27v3m0 3v3m0 42v3m1 -33v3m0 21v3m1 -27v3m0 3v3m1 -24v3m0 9v3m2 -6v3m1 -6v3m2 -36v3m0 45v3m1 0v3m0 9v3m2 -78v3m0 24v3m1 0v3m0 21v3m0 3v3m1 -78v3m0 39v3m0 12v3m1 -45v3m0 15v3m0 9v3m0 18v3m0 3v3m1 -42v3m0 36v3m0 6v3m1 -87v3m0 15v3m0 3v3m0 3v3m0 6v3m0 12v3m0 3v3m0 12v3m0 15v3m1 -93v3m0 48v3m1 -60v3m0 63v3m0 15v3m1 -45v3m0 12v3m0 24v3m1 -87v3m0 6v3m0 33v3m0 36v3m1 -75v3m0 27v3m0 6v3m0 9v3m0 21v3m1 -93v3m0 33v6m0 6v3m0 9v3m0 21v3m1 -36v3m0 18v3m0 21v3m1 -84v6m0 18v3m0 3v3m0 15v3m0 21v3m1 -87v3m0 36v3m0 48v3m1 -90v9m0 33v3m0 27v3m1 -60v3m0 12v3m0 18v3m0 3v12m0 18v6m1 -66v6m0 48v3m1 -60v6m0 6v3m0 9v3m0 9v3m0 3v3m1 -57v3m0 33v3m1 -54v3m0 21v3m0 33v3m0 18v3m1 -57v3m0 3v3m0 3v3m0 9v3m1 3v3m0 24v3m1 -72v6m0 30v3m0 24v3m1 -36v3m0 48v3m1 -45v3m0 3v3m0 21v3m1 -27v3m1 -24v3m1 -24v6m0 6v3m0 18v3m0 12v3m0 6v6m0 3v3m0 9v3m1 -63v3m0 24v3m0 21v3m1 -66v3m0 18v3m0 6v3m1 -39v3m0 36v3m0 12v3m0 6v3m1 -63v3m0 33v3m0 3v3m0 6v3m0 15v3m1 -66v3m0 9v6m0 33v3m1 -54v6m0 15v3m1 -51v3m0 9v3m0 15v3m0 24v3m0 3v3m0 27v3m1 -93v6m0 12v3m0 24v6m0 3v3m1 -30v6m0 45v3m1 -45v9m0 3v3m0 24v3m1 -69v3m0 21v3m0 57v3m1 -33v3m0 21v3m1 -90v3m0 9v3m0 69v3m1 -72v3m0 18v3m0 27v3m1 -57v3m0 9v3m0 42v3m1 -69v3m0 15v3m1 -30v3m0 3v3m0 9v3m0 21v3m0 12v3m0 12v3m1 -54v3m0 12v3m0 3v18m0 3v6m0 3v3m1 -72v3m0 24v3m0 21v3m0 9v3m0 12v3m1 -84v3m0 15v3m0 9v3m0 21v6m0 3v3m0 3v6m0 6v3m1 -72v6m1 60v3m1 -6v3m1 -75v3m0 78v3m1 -24v3m0 9v3m0 3v3m2 -9v3m0 9v3m1 -90v3m0 6v3m0 69v3m0 12v3m1 -90v3m0 69v3m1 -84v3m0 78v3m1 -6v3m0 12v3m1 -15v3m1 -75v3m0 24v3m0 21v3m0 12v3m1 15v3m2 -18v9m1 -78v3m0 57v9m1 -69v3m0 69v3m0 18v3m1 -36v3m0 3v3m1 3v3m0 21v3m1 -12v3m0 3v3m1 -105v3m0 75v3m1 -75v6m0 69v3m0 12v3m0 9v3m1 -6v3m1 -63v3m0 30v3m1 -81v3m0 6v3m0 93v3m4 -96v3m0 24v3m0 18v3m0 18v3m0 9v3m1 -9v3m0 3v3m1 -87v3m0 3v3m0 18v3m0 15v3m1 33v3m0 6v3m1 15v3m1 -15v3m1 -105v3m0 93v3m0 3v3m1 -105v3m0 102v3m0 6v3m1 -108v3m0 75v3m1 -12v3m1 -81v3m0 81v3m0 9v3m0 12v3m1 -105v3m0 21v3m0 18v3m0 15v3m2 12v3m1 -90v6m0 75v3m1 -87v3m0 18v3m0 60v3m0 3v6m1 -12v3m0 3v3m2 -12v3m0 3v6m2 -87v3m0 39v3m0 21v3m0 18v3m1 -75v3m0 6v3m0 9v3m0 9v3m0 6v3m0 24v3m1 -72v3m0 18v6m0 36v3m0 27v3m1 -114v3m0 27v3m0 15v3m0 42v3m1 -87v3m0 9v3m0 6v3m0 51v3m1 -81v3m0 99v6m1 -24v3m0 9v3m1 -108v3m0 36v3m0 6v3m1 -24v3m0 3v3m1 -6v3m0 9v3m0 63v3m1 -78v3m0 27v3m1 -45v3m0 9v3m0 21v3m0 12v3"/><path stroke="#00ff99" stroke-width="1" fill="none" d="M211.5 76v3m0 102v3m0 3v3m1 -120v3m0 39v3m0 9v3m1 -51v3m0 36v3m1 0v6m0 51v3m0 9v3m1 -111v3m0 30v6m0 3v3m0 54v3m0 3v3m1 -69v3m0 66v6m1 -114v3m0 36v3m0 12v3m0 45v3m1 -111v3m0 42v3m0 63v3m1 -57v3m0 57v3m1 -123v3m1 3v3m1 -6v3m0 6v6m0 99v3m1 -69v3m0 9v3m2 -60v3m0 51v3m1 -57v3m0 36v12m0 51v3m0 6v3m2 -114v6m0 33v6m0 63v3m1 -117v3m0 6v9m0 30v6m1 57v6m1 -111v3m0 42v3m0 3v3m0 42v6m0 3v9m1 -108v3m0 36v3m0 57v3m1 -114v3m0 57v6m1 -24v6m0 63v3m1 -108v3m0 33v3m0 9v3m0 9v3m1 39v3m0 3v3m1 -105v3m0 3v3m0 36v3m1 -48v3m0 33v3m1 -3v3m1 -51v3m0 3v9m0 27v12m0 57v6m1 -111v3m0 42v3m0 15v3m1 33v3m0 9v3m1 -120v3m0 45v3m0 12v3m0 51v3m1 -114v3m0 45v3m0 54v3m1 -111v6m0 48v6m2 -54v3m0 39v3m0 60v3m1 -111v6m0 3v3m0 33v3m1 -42v6m0 18v12m0 63v6m1 -102v3m0 30v3m0 63v3m0 3v3m1 -114v3m0 42v3m0 54v6m1 -96v3m0 27v3m0 48v3m0 3v3m1 -90v6m0 9v6m0 15v3m0 57v3m1 -117v3m0 15v3m0 15v3m0 3v3m0 60v3m1 -54v3m0 3v3m1 -54v3m0 42v3m0 45v3m1 -99v3m0 21v3m0 15v3m0 9v3m0 39v6m2 -60v3m0 54v6m1 -99v3m0 33v6m0 51v3m0 6v3m1 -111v3m0 39v3m0 3v3m0 48v3m0 6v3m1 -114v3m0 42v3m0 48v3m0 12v6m1 -114v3m0 102v3m1 -111v6m0 45v3m0 54v3m0 3v3m1 -96v3m0 3v3m0 81v3m1 -111v3m0 3v3m0 12v3m0 3v3m0 66v3m0 6v3m1 -96v3m0 30v3m0 60v3m1 -84v3m1 12v9m0 3v3m1 -57v3m0 12v3m0 9v6m0 9v3m0 9v3m1 -63v3m1 45v3m0 60v3m1 -111v3m0 18v6m0 27v3m1 -57v3m0 27v3m0 12v3m1 -42v6m0 24v3m0 6v3m0 9v3m0 51v3m1 -114v3m0 18v3m0 3v3m0 15v3m0 63v3m1 -117v6m0 39v3m0 9v3m0 6v3m0 39v6m1 -96v3m0 24v3m0 63v3m1 -114v3m0 60v3m1 -33v3m0 12v6m0 54v6m1 -111v3m0 3v3m0 27v3m0 9v3m0 54v3m1 -60v3m1 60v3m1 -102v6m0 27v3m0 6v3m1 -51v3m0 54v3m0 36v3m1 -66v6m0 60v3m0 3v3m1 -93v3m0 6v3m0 72v3m0 3v3m1 -99v6m1 -9v6m0 15v3m0 3v3m0 6v3m0 57v3m1 -99v6m0 18v3m0 12v3m0 48v6m0 6v3m1 -18v3m0 6v3m1 -84v3m0 69v3m0 6v3m1 -75v3m1 -36v3m0 6v3m0 18v3m0 12v3m0 48v3m1 -78v3m0 3v3m0 63v3m0 12v3m1 -90v3m0 33v3m3 -27v3m0 18v3m0 36v3m0 6v3m1 -84v3m0 75v3m1 -45v3m0 45v3m1 -48v3m2 -39v3m1 21v3m0 18v3m0 27v6m0 6v3m1 -123v3m0 90v3m1 -75v3m1 9v3m0 87v3m2 -111v3m0 15v3m0 78v3m1 -57v3m0 24v3m0 18v3m1 -18v3m1 -63v3m0 18v3m0 63v6m1 -90v3m0 24v3m0 18v3m0 9v6m0 15v3m1 -78v3m0 15v6m0 3v3m0 12v3m0 3v3m0 9v3m0 6v6m1 -42v3m1 6v3m0 21v6m1 -66v3m0 15v3m0 3v3m0 9v3m0 12v3m0 18v3m1 -60v3m0 27v3m0 15v3m1 -69v3m0 3v3m0 6v3m0 9v6m0 12v3m0 9v3m0 6v3m1 -93v3m0 24v6m0 57v3m1 -63v9m0 15v3m0 36v3m1 -42v3m0 39v3m1 -45v3m0 15v3m1 -18v6m0 30v3m1 -75v3m0 24v6m0 3v6m0 3v3m0 9v3m1 -48v3m0 36v15m0 6v3m1 -93v3m0 27v6m0 3v3m0 9v3m0 33v6m1 -84v3m0 21v3m0 21v3m0 3v6m0 24v3m1 -81v3m0 15v3m0 9v6m0 33v3m0 9v3m1 -87v3m0 15v6m0 3v3m0 18v3m0 3v9m0 15v3m1 -30v3m0 30v3m1 -69v3m0 21v3m0 39v3m1 -72v3m0 12v3m0 39v6m0 3v3m1 -39v3m0 12v6m0 9v3m1 -78v3m0 12v3m1 21v3m0 9v3m1 -36v3m0 33v3m0 3v3m0 3v3m1 -72v3m0 33v3m0 9v3m0 9v3m0 6v3m0 3v3m0 3v3m1 -66v3m0 6v3m0 15v6m0 3v3m0 3v6m0 6v3m1 -66v3m0 27v6m0 6v3m0 6v3m0 15v6m1 -72v3m0 39v3m0 9v3m0 9v6m1 -69v3m0 9v3m0 36v6m1 -45v3m0 15v3m0 27v6m0 9v3m1 -93v3m0 15v3m0 45v6m0 3v3m0 6v3m1 -24v3m0 3v3m1 -51v3m0 30v3m0 6v3m0 12v3m1 -66v3m0 6v3m0 3v3m1 -36v3m0 6v3m0 6v3m0 39v3m0 3v3m0 3v9m1 -66v3m0 12v3m0 9v3m0 3v6m0 9v3m0 3v6m0 9v3m1 -96v3m0 27v12m0 48v3m0 6v3m1 -78v3m0 6v3m0 12v3m0 3v9m0 27v3m1 -75v3m0 15v3m0 12v3m0 36v3m0 3v3m1 -63v3m0 3v3m0 3v3m0 9v3m0 24v3m0 9v3m1 -69v3m0 6v3m0 9v3m0 30v6m0 3v6m1 -105v3m0 12v3m0 24v3m0 3v6m1 48v3m1 -63v3m0 12v3m0 27v3m1 -57v3m0 12v9m0 18v3m0 15v3m1 -75v3m0 18v3m0 12v3m0 9v3m0 9v3m0 3v6m1 -87v3m0 3v3m0 15v3m0 3v6m0 3v3m0 3v3m0 3v3m0 6v3m0 3v3m0 21v3m1 -51v3m0 36v3m0 12v6m1 -66v3m1 33v6m0 6v3m0 9v6m1 -75v3m1 -15v6m0 18v3m0 42v6m1 -72v3m0 66v3m1 -63v3m0 6v3m0 18v3m0 30v6m1 -63v3m0 48v6m1 -39v3m0 24v3m1 18v3m1 -60v3m0 39v3m0 15v3m1 -81v3m0 57v3m1 -30v6m0 3v9m0 3v3m2 -45v3m0 60v3m1 -96v6m0 6v3m0 9v3m0 63v3m1 -78v3m0 60v3m1 -66v3m0 51v3m0 9v6m1 -72v3m0 3v3m0 15v3m0 12v3m1 24v3m1 -45v3m0 6v3m0 9v3m1 15v3m1 -57v3m0 6v3m1 -15v3m0 3v3m0 15v3m0 30v3m0 6v3m1 -66v3m0 3v3m0 6v6m0 3v3m0 24v3m0 6v3m0 3v3m1 -54v3m0 24v3m1 -42v3m0 12v3m1 42v3m1 -87v3m0 15v3m0 3v3m1 12v3m0 12v6m0 18v3m0 3v3m1 -60v3m0 54v3m1 -66v3m0 54v3m1 -45v3m0 6v3m0 3v6m0 9v3m1 -54v3m0 21v3m0 24v3m1 -24v3m0 6v3m0 24v3m1 -60v3m0 3v3m0 51v6m1 -54v3m0 9v3m0 9v3m1 -30v3m0 21v6m0 6v3m0 6v3m1 -45v3m0 12v3m0 3v6m1 -51v3m0 42v6m0 24v3m1 -33v3m0 6v3m0 9v3m1 -66v3m0 6v6m0 27v3m0 15v3m0 3v3m1 -36v3m0 6v3m0 15v3m0 3v3m1 -39v3m0 36v3m1 -48v3m0 6v6m0 6v3m1 -48v3m0 57v3m0 6v3m0 3v3m1 -75v3m0 15v3m0 3v3m2 -6v6m0 3v3m0 21v3m1 -60v3m0 12v6m0 6v3m1 -9v3m0 45v3m1 -75v3m0 33v3m1 15v3m1 -21v3m1 -21v3m0 21v3m0 3v3m4 -24v3m1 24v3m0 6v3m1 -72v3m0 21v3m0 15v3m0 12v3m1 12v3m2 -30v3m1 -48v3m1 27v3m0 12v3m1 -39v3m0 12v3m0 30v3m0 6v6m1 -54v3m0 12v3m0 12v3m0 12v3m1 -66v3m0 12v3m0 9v3m0 18v3m0 3v3m0 12v6m1 -18v3m0 6v3m1 -48v3m0 18v3m1 -48v3m0 42v3m0 3v3m0 9v3m2 -54v3m0 15v6m0 12v3m0 12v3m1 -51v3m0 6v3m0 15v3m0 27v3m1 -30v3m1 -30v3m0 3v3m0 3v3m0 18v3m0 12v6m1 -3v3m2 -30v3m0 9v3m1 6v3m1 -42v3m0 3v3m0 24v3m0 3v3m1 -42v3m0 3v3m1 12v3m0 12v3m1 -9v3m0 15v3m1 -36v3m0 15v3m1 -15v3m2 6v3m0 9v3m1 -39v3m0 3v3m0 24v3m1 -33v3m0 6v3m0 6v12m1 -75v3m0 45v6m1 -54v3m0 51v3m1 3v3m1 -75v3m0 36v3m1 -9v3m0 21v3m0 18v3m0 18v3m1 -87v3m0 3v3m0 54v3m1 -54v6m0 57v3m1 -51v3m0 3v3m0 15v3m1 -66v3m0 42v3m0 24v3m1 -30v3m0 48v3m1 -36v3m1 -30v3m0 33v3m0 6v3m0 24v3m1 -96v3m0 9v3m0 6v3m0 3v3m0 9v9m0 3v3m0 3v3m0 12v6m1 -90v3m0 9v3m0 9v6m0 45v3m0 24v3m1 -78v3m0 6v3m0 12v3m0 3v3m0 3v6m0 12v9m1 -90v3m0 6v3m0 30v3m0 57v3m1 -81v6m0 12v3m0 6v3m0 24v6m0 6v3m1 -45v3m0 18v3m0 12v3m0 3v3m0 6v6m1 -51v3m0 30v3m5 -15v3m1 -30v6m0 9v3m0 24v3m0 6v3m1 -99v3m0 9v3m0 75v3m0 3v3m1 -105v3m0 33v3m0 15v3m0 15v3m0 3v3m0 18v3m1 -66v3m0 12v3m0 3v3m0 45v3m1 -54v3m0 48v3m14 -27v3m1 -6v3m0 6v3m2 -30v3m0 12v3m3 6v3m1 -21v3m0 18v3m3 -21v6m0 3v3m0 6v3m1 -12v3m1 -9v3m0 6v3m0 9v3m1 -18v3m0 3v3m0 3v3m5 -75v3m0 39v3m18 -39v3m0 63v3m1 -75v3m0 9v3m0 30v3m0 12v3m0 6v3m1 -72v3m0 3v9m0 18v3m0 21v3m0 9v3m1 -66v3m0 57v3m11 -27v3m4 3v3m1 0v3m1 -69v3m1 18v3m0 24v3m0 30v3m1 -51v3m2 15v3m1 -60v3m0 6v3m0 12v3m0 3v3m0 33v3m1 -69v3m0 39v6m0 6v3m0 21v3m0 3v3m0 6v3m0 6v3m1 -117v3m1 -3v3m0 15v3m0 9v3m0 45v3m0 21v3m0 9v3m2 -90v3m0 15v3m0 9v3m0 9v3m1 27v3m1 -42v3m1 18v3m0 9v3m0 9v6m1 -63v3m0 60v6m1 -93v3m0 12v3m0 36v3m1 -48v3m0 39v3m1 -48v3m0 72v3m1 -78v3m0 21v3m0 30v3m0 21v3m1 -96v3m0 15v3m0 6v3m0 12v6m0 3v3m0 6v9m1 6v3m0 6v3m1 -87v3m0 30v3m0 36v3m0 9v3m1 -69v6m0 33v9m0 24v3m1 -87v3m0 12v3m0 15v3m0 48v3m0 3v3m1 -108v3m0 42v3m1 -18v3m0 3v3m0 9v3m0 48v3m0 3v3m1 -111v6m0 27v3m0 36v3m0 36v3m2 -117v3m0 9v3m0 99v3m1 -87v6m0 27v6m0 36v3m0 3v3m1 -114v3m0 3v3m0 27v3m0 21v3m0 51v3m1 -102v3m0 45v3m0 39v3m0 3v6m1 -120v6m0 12v3m0 6v3m0 3v6m0 15v3m0 60v3m1 -120v3m0 6v3m0 51v3m0 39v9m1 -81v3m0 21v6m0 51v3m1 -9v3m0 3v3m1 -87v3m0 33v6m0 27v3m0 15v3m1 -54v3m0 3v3m0 3v3m0 3v12m0 3v3m0 3v3m1 -66v3m0 6v3m0 21v3m0 12v3m0 6v3m1 -96v3m0 57v9m0 12v3m0 3v3m0 3v3m0 6v3m1 -96v3m0 15v3m0 3v3m0 3v3m0 18v3m0 27v3m0 15v3m1 -114v3m0 24v3m0 3v3m0 27v3m0 12v3m1 -18v3m0 21v3m0 6v3m0 9v3m1 -93v3m0 36v3m0 12v6m1 -78v3m0 90v3m1 -96v3m0 27v3m0 45v3m0 27v3m1 -90v3m0 3v6m0 9v3m0 3v6m0 12v3m0 6v3m1 -78v3m0 48v3m0 9v3m1 -24v6m0 6v3m0 3v3m0 6v3m0 6v3m1 -60v3m0 6v3m0 54v3m1 -93v3m0 15v3m1 36v3m0 6v3m0 21v3m1 -72v3m0 27v3m0 9v3m0 21v3m0 12v3m1 -93v3m0 12v3m0 21v3m0 6v3m0 3v3m0 3v3m0 3v3m0 6v3m1 -87v3m0 27v3m0 9v3m0 12v3m0 27v3m0 6v3m0 6v3m1 -111v3m0 6v3m0 18v3m0 3v3m0 3v6m0 6v3m0 9v3m0 3v3m0 9v6m0 6v3m0 3v12m1 -114v6m0 30v3m0 30v3m1 -60v3m0 27v6m0 33v3m0 6v3m1 -57v3m0 54v3m1 -69v3m0 9v3m1 -27v9m0 6v3m0 21v3m0 12v3m1 -42v3m0 42v3m0 33v3m1 -99v3m0 21v3m0 3v3m0 6v3m1 9v3m0 3v6m1 -75v3m0 9v3m0 3v3m0 6v3m0 3v3m1 -18v3m0 6v3m0 3v3m0 60v3m1 -102v6m0 36v3m0 12v3m0 36v3m0 12v3m2 -111v3m0 3v3m0 3v3m0 15v3m0 18v3m0 30v6m1 -93v3m0 60v3m2 -45v3m0 45v3m0 6v3m1 -69v3m0 3v3m0 27v3m2 -27v6m0 3v3m0 24v3m0 24v3m0 12v3m1 -105v3m0 3v3m1 9v3m0 9v3m0 24v6m0 36v3m1 -96v6m0 42v3m0 12v3m0 18v3m1 -93v3m0 42v3m3 -39v3m0 27v6m0 15v3m0 3v3m0 9v3m1 -75v3m0 24v3m1 9v3m1 -3v3m0 27v3m0 3v9m1 -54v6m1 -27v3m0 15v3m0 24v6m1 -48v3m0 12v3m0 6v3m0 54v3m1 -72v3m0 3v3m0 6v3m1 -24v3m0 3v3m0 6v3m0 6v3m0 9v3m0 6v3m0 9v3m1 -66v3m1 0v3m1 0v3m1 -15v3m0 15v3m0 9v3m0 3v3m0 9v3m0 3v3m1 -33v3m0 12v3m3 -6v3m0 21v3m3 -51v3m0 21v3m2 9v3m6 -12v3m1 -3v3m1 -39v3m1 18v3m0 3v3m0 21v3m1 -57v9m0 6v9m0 30v3m1 -60v3m0 12v3m0 15v3m0 9v3m1 12v3m1 -60v3m0 9v3m0 6v6m0 3v3m0 6v6m1 -51v3m0 12v3m0 21v3m0 3v3m1 -42v3m0 6v3m0 27v6m0 6v3m1 42v3m1 -111v3m0 9v3m0 18v6m0 6v3m0 3v6m0 9v3m1 -60v3m0 39v3m0 6v3m1 -36v3m0 24v3m1 -57v12m0 9v3m0 33v3m1 -48v3m1 -15v3m0 42v3m0 3v3m1 12v3m1 0v3m0 36v3m1 -51v3m0 3v3m1 -66v3m0 12v3m0 3v3m0 6v3m0 6v3m0 21v3m1 -21v3m0 3v3m1 -57v3m0 6v3m0 33v3m1 9v6m0 15v3m1 -51v3m0 3v6m0 6v3m2 -27v3m0 24v3m0 9v6m1 -24v3m0 9v3m0 15v3m1 -33v3m0 9v3m1 -9v6m1 -51v3m0 12v3m0 12v6m0 6v3m1 0v3m0 3v3m0 12v3m1 -6v3m0 3v3m1 30v3m1 -54v3m0 45v3m0 6v3m1 -84v3m0 6v3m0 30v3m1 -30v6m1 0v3m0 3v3m0 3v3m1 -15v3m0 6v3m1 -12v6m0 9v3m1 -12v3m0 3v3m2 42v3m1 -66v3m0 3v6m1 -12v3m1 -18v3m0 6v3m0 6v3m0 6v3m1 -12v3m0 24v3m1 -21v3m0 42v3m1 -66v6m1 -3v3m0 3v6m1 -21v3m0 15v6m0 3v3m0 9v3m0 6v3m2 -87v3m0 24v3m0 6v3m1 18v3m0 3v3m0 6v3m1 -30v3m0 3v3m0 3v6m0 21v3m1 -84v3m0 27v6m0 15v6m1 -48v3m0 6v6m0 18v3m0 9v3m0 6v6m1 -69v6m0 3v3m0 24v9m0 3v12m0 6v3m0 3v3m1 -57v3m0 3v6m0 15v3m0 6v3m0 9v6m0 6v3m1 -39v6m0 27v3m0 9v3m1 -84v3m0 9v3m0 3v3m0 3v3m0 3v3m0 18v3m0 3v3m0 15v3m1 -78v6m0 3v3m0 48v3m1 -57v6m0 3v12m0 6v3m0 3v3m0 3v6m0 12v3m1 -63v3m0 33v3m1 -33v3m0 18v3m1 -9v3m0 6v3m1 -24v6m0 9v3m0 18v3m1 -54v3m0 6v3m0 27v3m0 24v3m0 6v3m1 -81v3m0 6v6m0 3v6m0 6v3m0 33v3m1 -45v3m0 12v3m0 27v6m1 -69v6m0 54v6m0 21v3m1 -93v12m0 24v6m0 18v3m0 12v3m1 -78v3m0 72v3m1 -72v3m0 9v3m1 6v3m1 -21v3m0 24v3m0 21v3m0 6v3m2 -24v6m0 6v12m1 -30v3m0 30v3m1 -51v6m0 12v3m0 3v9m0 15v3m0 6v3m1 -75v3m0 45v3m0 6v3m1 3v3m1 -84v3m0 6v3m0 42v3m1 -18v3m0 3v3m0 12v6m0 6v3m0 9v3m0 3v3m1 -90v3m0 24v3m0 3v3m0 3v3m0 12v3m0 6v3m0 3v3m0 3v3m0 9v3m1 -21v3m1 -48v6m0 18v3m0 12v3m0 9v3m1 -54v6m0 48v3m1 -45v3m0 6v3m0 24v3m1 -36v3m0 9v6m0 3v3m1 -33v3m2 18v3m0 6v3m0 12v3m1 -54v3m0 48v3m1 -81v3m0 33v3m0 6v3m1 3v3m1 -36v3m0 9v3m0 33v3m0 3v3m0 3v3m1 -57v3m0 24v3m0 3v3m0 3v3m0 6v9m0 9v3m1 -78v3m0 57v3m1 -72v3m0 51v3m1 -6v3m0 21v6m1 -72v3m0 12v3m0 21v3m0 24v3m1 -84v3m0 6v3m0 6v3m0 12v3m1 -15v3m0 36v3m1 -57v3m0 9v6m0 15v3m0 9v3m0 6v6m0 18v3m0 6v3m1 -69v12m0 6v3m0 6v3m0 9v3m0 6v3m1 -51v6m1 -33v3m0 3v3m0 15v3m0 18v3m0 12v3m0 6v3m0 6v3m1 -60v3m0 3v3m0 21v3m1 -33v3m0 9v6m0 36v6m1 -75v3m1 21v3m0 36v6m1 -51v3m0 3v3m0 42v3m1 -57v12m0 3v3m0 9v3m0 6v3m0 9v6m1 -60v3m0 60v3m1 -69v3m0 42v3m0 24v3m1 -75v3m0 12v3m0 39v3m0 3v3m0 15v3m1 -96v3m0 18v3m1 45v3m1 -72v3m0 72v3m1 -54v3m0 3v3m0 3v12m0 12v3m0 6v3m1 -51v3m0 9v3m0 9v3m0 3v3m0 9v3m1 -66v3m0 63v6m0 3v3m1 -3v3m0 6v3m0 6v3m1 -6v3m0 6v3m1 -84v3m0 12v3m0 3v3m0 6v3m0 3v3m0 3v3m0 3v3m1 -57v3m0 63v3m1 -63v6m0 21v6m0 3v6m0 12v3m0 6v3m2 -75v3m0 63v6m0 9v3m1 -84v3m0 27v3m0 12v3m0 18v3m2 -75v3m0 84v3m1 -72v6m0 3v3m0 3v6m0 9v3m0 9v3m0 3v6m1 18v3m1 -78v3m0 3v3m0 6v6m0 3v6m0 6v3m0 12v3m0 6v3m1 -69v3m0 18v3m0 18v3m0 6v3m0 6v3m0 9v3m1 -15v3m0 3v3m1 -51v3m0 3v3m0 3v3m0 6v3m0 12v3m0 3v3m0 12v3m1 -87v3m0 24v3m0 39v9m1 -75v3m0 30v12m0 6v12m0 9v3m1 -78v6m0 72v6m1 -81v6m0 78v3m0 21v3m1 -114v6m0 63v3m0 3v3m1 -75v6m0 36v3m0 24v3m1 -3v3m0 9v3m0 12v3m1 -78v3m0 18v3m1 -15v9m0 33v3m1 3v3m0 15v3m0 12v3m1 -105v3m0 9v3m0 12v6m0 21v6m1 -75v6m0 6v6m0 72v6m1 -72v3m0 6v3m0 18v3m0 12v3m1 -60v3m0 63v3m1 -78v3m0 48v3m0 6v6m1 -57v3m0 12v3m1 -27v3m0 33v3m0 3v3m0 45v3m1 -93v3m0 93v3m1 -96v3m0 3v3m0 30v3m0 18v3m0 6v6m0 9v3m1 -81v3m0 21v3m0 3v6m0 12v3m0 15v3m1 -54v3m0 6v6m0 18v3m0 3v3m0 33v3m1 -90v6m0 6v3m0 9v3m0 6v3m0 12v3m1 -45v3m0 6v3m0 39v3m1 -33v3m1 -30v3m0 15v3m1 -27v3m0 3v3m0 12v3m0 24v3m0 24v3m0 24v3m1 -102v3m0 3v3m0 45v3m0 3v3m3 -45v3m0 21v3m0 3v3m1 -18v3m0 27v3"/><path stroke="#00ff33" stroke-width="1" fill="none" d="M211.5 79v3m0 33v3m0 66v3m1 -78v3m1 -30v9m0 27v3m0 57v3m1 -93v3m0 15v3m0 72v3m1 -96v3m0 15v3m0 9v3m1 -9v3m1 9v3m1 -42v3m0 6v3m0 6v12m1 -45v3m0 6v9m0 30v3m0 57v6m0 3v3m1 -108v3m0 3v3m0 15v3m0 3v3m0 72v3m1 -108v3m0 27v9m0 3v6m0 60v3m1 -102v6m0 9v9m1 -39v3m0 3v3m0 21v3m0 6v3m0 6v3m0 57v6m1 -120v3m0 6v3m0 3v3m0 27v9m1 -42v6m0 30v3m0 3v3m0 54v3m1 -105v6m1 30v3m0 57v6m1 -57v6m0 45v3m1 -78v12m0 3v3m0 6v3m1 -15v3m1 -30v3m0 27v3m0 6v3m0 51v3m1 -102v3m0 27v6m0 3v3m0 3v3m1 -48v3m0 30v6m0 66v3m0 3v3m1 -111v3m1 -12v3m0 6v6m0 21v3m1 -30v3m0 24v3m0 18v3m1 -48v3m1 18v3m1 -24v3m1 -3v3m0 3v6m0 12v3m1 -33v3m0 6v3m0 84v3m0 9v3m1 -114v3m0 3v3m0 33v6m0 54v3m0 3v3m1 -102v3m0 12v6m0 6v6m0 63v3m1 -111v3m0 3v6m0 30v3m1 -39v3m0 33v6m0 57v3m0 6v3m1 -114v6m0 18v3m0 12v3m0 60v6m1 -90v3m0 27v3m0 54v3m1 -69v6m1 -33v3m0 3v3m0 3v3m0 75v3m1 -66v3m0 69v3m1 -114v3m0 6v3m0 6v3m0 3v3m0 9v6m1 -30v3m0 6v3m0 3v3m1 -9v3m0 3v3m1 6v3m1 -39v3m0 15v3m0 18v3m1 -39v3m0 3v3m0 6v3m0 21v3m1 -39v3m0 3v3m0 3v3m0 3v3m0 6v6m0 66v3m1 -69v3m0 66v3m1 -108v3m0 21v3m0 6v6m0 66v3m1 -114v3m0 15v3m0 15v3m0 3v3m1 -42v3m0 15v3m0 6v3m1 -15v3m0 24v3m0 9v3m0 42v3m1 -96v3m0 6v3m0 21v3m0 6v3m1 -45v3m0 6v6m0 84v3m1 -90v3m0 3v3m0 3v3m1 -21v3m0 12v3m0 3v6m1 -36v3m0 30v3m1 -39v6m0 30v3m0 69v3m1 -105v3m0 9v6m0 6v3m0 3v3m0 60v3m1 -90v3m0 21v9m0 60v3m1 -75v3m0 9v3m0 57v3m1 -108v3m0 6v3m0 3v3m0 21v3m0 6v3m0 54v3m1 -102v6m0 6v3m0 15v9m1 -36v3m0 12v6m0 9v3m0 63v3m1 -66v3m0 6v3m0 51v3m1 -99v12m0 9v3m0 3v9m0 63v3m1 -93v6m0 3v6m1 -24v3m0 12v3m0 9v6m0 3v3m1 -48v3m0 3v3m0 30v3m1 -33v3m0 9v3m0 3v3m0 21v3m1 -45v6m0 3v9m0 3v6m0 15v3m1 -45v3m0 18v3m0 12v3m1 -33v6m0 81v3m1 -84v3m0 3v6m1 -24v3m0 3v6m0 21v6m0 9v3m0 45v6m1 -99v3m0 15v6m1 -27v3m0 3v3m0 15v3m0 12v3m1 54v3m1 -87v3m0 6v3m0 72v3m1 -81v3m0 3v3m0 6v3m0 63v3m1 -93v3m0 84v3m1 -96v3m1 33v3m1 -36v3m0 21v3m0 18v3m1 -54v3m0 6v3m1 84v3m2 -99v3m0 96v3m1 -48v3m3 39v3m3 -96v3m0 30v3m0 63v3m1 -81v3m1 27v3m4 -33v3m0 24v3m0 21v3m0 12v3m1 -63v3m0 15v3m2 -21v3m0 3v3m0 15v3m1 -33v3m1 9v3m0 18v3m1 6v3m0 18v3m1 -3v3m1 -48v3m0 36v6m0 12v3m1 -60v3m0 18v3m0 24v3m0 12v3m1 -54v3m0 6v3m0 15v3m1 -63v3m0 60v3m1 -60v3m1 21v3m1 -30v3m1 33v3m0 15v3m1 -66v3m0 27v3m0 6v6m0 9v3m1 -51v3m0 9v3m0 27v3m0 12v3m1 -48v3m0 12v3m0 9v6m0 15v3m0 6v3m1 -60v3m0 3v3m0 33v3m1 -45v3m0 18v3m1 -30v3m0 24v3m0 3v3m0 18v3m3 -60v3m0 33v3m0 9v9m1 -15v3m0 6v6m0 3v3m0 18v3m1 -66v3m0 36v3m1 -51v3m0 66v3m1 -30v3m1 -51v3m0 27v3m0 15v3m0 15v3m2 -57v3m0 24v6m0 6v3m0 6v3m1 -51v3m0 24v3m1 -3v3m0 12v6m0 15v3m1 -33v3m0 6v3m0 6v3m2 -24v3m0 3v6m1 -60v3m0 30v3m0 6v3m0 15v3m0 6v6m0 3v3m1 -24v3m0 3v3m0 18v3m1 -57v3m0 21v3m1 -45v3m0 15v3m0 3v6m0 3v3m0 6v3m1 -36v3m0 27v3m0 3v3m0 3v6m1 -51v3m0 24v3m0 12v15m0 3v3m1 -81v3m0 12v3m0 36v3m1 -24v3m0 15v3m0 12v3m1 -51v6m0 12v3m0 18v3m0 24v3m1 -93v3m0 9v3m0 6v3m0 15v6m0 33v9m1 -54v3m0 15v6m0 9v3m1 -24v6m0 9v3m0 9v6m1 -15v3m0 6v3m1 -63v3m0 6v3m0 18v3m0 3v6m0 15v3m1 -63v3m0 33v9m0 6v3m1 -39v6m0 3v3m0 42v3m1 -33v6m0 6v6m0 6v6m1 -36v3m1 3v3m0 3v6m0 6v6m0 18v3m1 -42v3m0 6v3m0 3v6m0 3v3m0 12v3m1 -78v3m0 18v6m0 30v6m1 -39v3m0 9v6m0 3v3m0 3v12m0 6v3m1 -45v3m0 24v3m1 -51v3m0 18v3m0 3v3m0 6v3m0 27v3m1 -51v3m0 21v3m0 6v3m1 -60v3m0 24v9m0 6v3m2 -45v3m0 36v3m1 -39v3m0 24v6m0 3v3m0 3v3m0 6v9m0 6v3m1 -48v6m0 33v3m1 -57v3m0 9v3m0 3v3m0 12v3m0 15v3m0 3v3m1 -48v3m0 3v3m0 3v6m0 3v3m1 -24v3m0 6v3m0 3v3m0 3v3m0 15v3m0 12v3m1 -63v3m1 9v3m0 21v6m0 3v3m0 6v3m1 -45v3m0 3v3m0 3v3m0 3v3m1 9v3m0 3v6m1 -51v6m0 24v3m0 3v3m0 3v3m1 -21v12m0 12v3m1 -42v6m0 6v3m0 6v3m0 12v3m1 -42v3m0 6v3m0 21v3m1 -48v3m0 3v3m0 3v6m1 -3v6m0 18v6m0 3v3m0 9v3m1 -18v3m0 3v3m1 -36v9m0 21v6m1 -42v3m0 33v3m1 -27v3m0 12v3m1 -63v3m0 39v6m0 3v3m0 3v3m1 -24v3m0 6v6m0 6v3m1 -21v3m0 15v6m1 -12v3m0 9v3m1 3v3m1 -9v3m0 18v3m1 -69v3m0 12v3m0 3v9m0 15v9m2 -12v3m1 -6v3m0 3v3m1 -51v3m0 18v6m2 21v3m1 -6v6m1 -36v3m0 36v3m1 -48v3m1 15v3m0 12v6m0 6v3m1 -57v3m2 27v3m2 15v3m4 -24v3m2 -24v3m0 12v3m1 0v3m6 -30v3m0 27v3m1 -36v3m0 15v3m0 36v3m2 -27v3m2 15v3m1 -42v3m1 3v3m1 24v3m1 -48v6m0 21v3m0 15v6m1 -21v3m2 -18v3m0 3v3m4 45v3m1 -90v3m0 3v3m0 66v3m6 -39v3m0 12v6m5 -33v3m0 42v3m1 -66v3m0 6v3m0 30v3m1 -48v3m0 45v3m1 21v3m2 -27v3m1 -30v3m0 57v3m1 -63v3m1 9v3m0 24v3m0 12v9m0 3v6m1 -90v3m0 21v3m0 12v3m0 6v9m0 6v9m0 3v6m1 -90v3m0 33v3m0 6v3m1 -60v3m0 3v3m0 9v3m0 12v3m0 3v3m0 9v3m0 9v3m0 12v3m0 27v3m1 -51v3m0 39v3m2 -30v3m3 -27v3m3 -66v3m0 12v6m1 69v3m0 9v3m1 -99v3m0 66v3m0 15v3m1 3v3m17 -27v3m6 24v3m2 -27v3m9 9v3m17 12v3m0 3v3m1 -108v3m0 15v6m1 -9v3m0 24v3m0 21v3m0 27v3m11 -30v3m3 27v3m3 -36v3m2 -33v3m0 6v3m5 -33v3m0 33v3m0 12v3m0 21v3m1 -33v3m1 -48v6m0 12v3m0 42v3m1 -57v3m1 -15v3m0 30v3m1 -51v3m0 18v3m1 48v3m0 15v3m2 -75v3m0 30v3m0 15v3m0 30v3m1 -78v3m1 66v3m0 3v3m1 -96v3m0 21v3m1 -36v3m2 87v3m1 -21v3m0 12v3m0 12v3m1 -39v3m0 9v3m0 6v3m0 6v3m1 -39v3m0 9v3m0 6v3m0 3v6m0 3v3m1 -105v3m0 9v3m0 12v3m0 48v3m0 3v3m0 27v3m1 -48v3m0 12v3m0 9v3m0 3v6m0 9v3m1 -87v3m0 18v3m0 12v3m0 9v3m0 9v12m1 -54v6m0 3v3m0 42v3m1 -102v3m0 24v6m0 33v6m0 12v3m0 3v3m0 6v3m0 6v3m1 -105v3m0 33v3m0 21v6m0 3v3m0 9v6m1 -27v3m0 15v3m0 12v12m1 -48v3m0 6v12m0 3v3m0 3v3m0 3v3m0 3v3m1 -105v3m0 30v3m0 57v3m1 -6v3m1 -24v3m0 3v3m0 3v3m0 3v9m1 -39v6m0 15v3m0 3v3m1 -36v3m0 9v9m0 3v3m0 21v3m3 -93v3m0 36v3m0 15v12m0 15v3m1 -33v3m0 3v9m0 6v3m0 6v6m0 3v3m1 -99v3m0 51v3m0 3v3m0 15v3m2 -60v3m0 63v3m2 -66v3m0 42v3m0 12v3m1 -42v3m0 39v3m2 -54v3m0 51v3m3 -105v3m0 9v3m0 24v3m0 18v3m0 3v3m0 24v3m0 6v3m1 -96v3m0 12v3m0 39v3m1 -33v3m0 39v3m0 18v3m1 -51v3m0 30v3m0 12v3m1 -90v3m0 15v3m0 3v3m0 9v3m0 3v3m1 -21v3m0 6v3m0 45v3m0 9v6m1 -87v3m0 30v3m0 6v3m0 30v6m1 -45v3m0 9v6m1 -45v3m1 3v3m1 -39v3m0 6v3m0 15v3m0 33v3m2 -60v3m0 42v3m0 51v3m1 -102v3m2 33v3m5 12v3m0 6v3m3 -60v3m0 30v3m0 18v3m0 6v3m3 -69v3m0 15v3m1 -21v3m0 42v9m0 6v3m1 0v3m1 -39v3m3 36v3m1 -45v3m2 15v3m0 18v3m1 -30v3m2 -6v3m0 15v3m0 24v3m1 -63v3m1 42v3m2 -51v3m1 39v3m16 -60v3m1 -9v3m0 51v3m1 -54v3m1 -9v3m0 9v9m0 3v3m0 9v3m0 27v3m1 -60v6m0 18v9m0 12v6m0 3v3m1 -66v3m0 9v3m0 21v3m1 -42v6m0 3v3m0 6v3m0 6v3m0 6v3m0 9v3m0 6v3m1 -60v6m0 3v3m0 12v6m0 12v6m0 9v3m1 -51v3m0 3v6m0 3v6m0 18v3m0 6v3m0 3v3m1 -63v9m0 6v3m0 3v6m1 -15v3m0 9v3m0 3v3m1 -36v3m0 12v12m0 18v3m0 3v3m1 -21v6m1 -39v6m0 3v3m0 30v6m0 6v3m1 -48v3m0 6v6m0 3v3m0 3v3m1 -18v3m0 9v3m0 3v3m0 6v3m0 6v3m1 -51v3m0 6v3m0 21v3m1 -36v3m0 6v3m0 15v3m0 12v3m2 -48v6m0 9v3m0 9v3m0 3v3m0 6v3m0 30v3m1 -78v3m0 51v3m1 -36v3m0 12v3m0 3v6m1 -42v9m0 15v3m0 6v6m1 -21v3m0 6v6m1 -21v3m0 9v6m0 9v3m0 3v3m2 -57v3m0 12v6m0 6v3m0 6v9m0 3v3m0 51v3m1 -84v3m0 9v6m1 -36v3m0 12v3m1 15v6m0 3v3m1 -6v3m0 6v3m0 3v3m1 -30v6m0 9v3m1 18v3m1 -48v3m0 12v6m0 3v3m1 -21v3m0 6v3m1 75v3m1 -51v3m2 -69v3m0 27v3m0 39v3m1 -36v3m1 -42v3m0 78v3m1 -81v6m0 18v3m0 3v3m0 3v3m1 -15v3m0 12v6m1 -30v9m0 12v3m1 -6v6m0 3v3m1 -12v3m0 6v9m0 3v3m1 -60v3m0 15v3m0 3v3m0 27v3m1 -21v3m0 3v3m0 3v3m0 18v3m1 -24v3m0 15v3m1 -27v3m0 6v3m0 9v3m1 -63v6m0 6v3m0 3v3m0 9v3m0 6v3m0 3v3m0 18v3m1 -72v3m0 6v3m0 3v3m0 30v9m0 3v3m1 -48v3m0 6v9m0 3v3m0 9v3m0 12v3m1 -54v3m0 27v3m0 21v3m1 6v3m1 -63v3m0 30v3m1 -51v6m0 3v6m0 3v3m0 3v3m0 24v6m0 6v3m1 -45v9m0 9v3m0 21v12m0 6v3m1 -69v6m0 9v3m0 12v3m0 15v3m1 -66v3m0 12v3m0 6v3m0 15v3m1 15v3m2 -63v3m0 9v3m0 12v3m0 24v6m1 -57v3m0 3v3m0 6v3m0 33v3m0 12v3m2 -72v3m0 9v3m0 51v3m1 -63v3m0 27v3m0 39v3m1 9v3m1 -63v3m0 24v6m1 -60v3m0 15v3m1 -6v3m0 6v3m0 18v3m0 15v3m0 9v3m2 -60v3m0 54v3m1 -51v3m0 48v3m1 -69v3m0 21v3m1 -30v3m0 3v3m0 42v3m1 -30v3m1 27v3m3 -27v6m0 15v3m0 9v3m1 -45v3m0 30v3m1 -45v3m1 6v3m0 45v3m1 -63v3m0 24v3m0 9v3m0 6v6m1 -21v3m1 27v3m1 -57v3m0 3v3m1 21v3m1 -36v3m0 18v3m1 -21v3m0 9v3m3 -18v3m0 12v3m0 18v3m0 3v6m2 -75v3m0 9v3m0 6v3m0 3v3m0 18v3m0 3v3m0 9v6m3 3v3m1 -18v6m0 12v3m1 -30v3m0 12v3m0 9v3m0 3v3m1 -84v3m0 36v3m0 9v3m0 12v3m1 -48v3m0 48v3m3 -27v3m0 3v3m2 -15v6m0 3v9m0 3v3m0 12v3m1 -81v3m0 12v6m0 3v6m0 9v3m0 6v3m1 -18v3m1 -21v3m0 12v6m0 3v3m0 9v3m0 12v3m1 -39v3m0 6v3m1 -24v6m0 15v12m0 15v3m0 9v3m1 -69v6m0 9v3m0 3v3m0 27v3m1 -48v6m0 6v3m0 15v3m0 3v3m1 -42v3m0 3v3m0 6v3m0 3v6m0 9v6m0 3v12m1 -63v6m0 6v3m0 12v3m0 24v3m0 3v3m1 -51v3m0 3v3m0 9v3m0 15v6m1 -54v6m0 3v3m0 3v3m0 24v3m0 15v3m2 -60v3m0 6v3m0 9v3m0 12v3m0 24v3m1 -66v3m0 36v3m0 12v6m1 -60v6m0 12v6m0 15v3m0 3v3m0 6v3m1 -48v3m0 3v3m1 9v6m1 -33v3m0 6v12m0 6v3m0 21v3m0 18v3m1 -75v3m0 6v6m0 30v3m1 0v3m1 -51v3m0 6v3m0 15v3m0 3v3m0 15v3m1 0v3m1 -66v6m0 51v3m0 9v3m1 -24v3m1 -51v3m0 3v3m0 15v3m0 45v6m1 -57v3m0 9v3m0 21v3m1 -45v9m0 15v3m0 3v3m0 21v3m1 -63v9m0 3v9m0 15v3m1 -30v3m0 6v3m0 9v3m0 6v3m1 -45v12m0 3v3m0 6v3m0 9v3m0 6v3m2 -21v3m0 63v3m1 -108v3m0 33v6m1 -21v3m0 3v3m0 6v3m0 6v9m0 3v9m0 27v3m1 -96v3m0 12v3m0 39v3m1 -48v6m0 3v3m0 12v6m0 24v3m0 12v3m0 6v3m1 -63v6m0 3v9m0 6v6m0 3v3m0 9v3m1 -60v9m0 3v3m0 12v3m0 3v9m0 9v3m0 3v3m1 -72v3m0 102v3m1 -54v3m1 -36v3m0 15v6m1 -30v3m0 6v3m0 27v3m0 3v3m1 -54v9m0 12v6m0 6v9m0 3v3m0 12v3m1 -60v3m0 3v3m0 6v9m0 9v3m0 3v6m0 6v3m0 3v3m1 -57v3m0 6v3m0 3v3m0 9v3m0 3v9m0 3v3m0 3v6m1 -57v3m0 27v6m0 15v3m0 9v3m1 -66v3m0 6v6m0 12v6m0 9v3m0 6v3m1 -66v3m0 24v9m0 3v6m0 15v3m2 6v6m1 -18v3m1 -9v3m1 -9v3m2 -18v3m0 12v3m0 9v3m1 -6v3m2 -18v3"/><path stroke="#00ff00" stroke-width="1" fill="none" d="M211.5 82v3m0 3v3m0 12v3m0 6v3m1 -27v3m0 12v3m1 -15v3m0 12v6m1 -27v3m0 3v3m0 15v6m1 -33v3m0 12v3m0 9v3m1 -15v6m0 3v6m1 -27v9m0 9v3m0 69v6m1 -84v3m1 -12v3m0 24v3m1 -33v3m0 6v3m0 6v3m0 3v3m1 -27v3m0 18v6m1 -9v3m1 12v3m1 -39v3m0 6v3m0 18v3m0 12v3m1 -60v3m0 6v3m0 45v3m0 54v3m0 3v3m1 -108v6m0 15v3m1 -24v6m0 9v6m0 24v3m0 48v3m1 -81v3m0 3v6m1 -27v3m1 -3v3m0 15v3m1 -21v3m0 12v6m0 3v3m3 -27v6m0 3v3m0 3v3m1 -6v3m0 27v3m0 51v3m1 -102v3m0 18v3m1 -18v6m1 -12v9m0 3v9m0 3v6m1 -33v3m0 21v3m1 -36v3m0 21v3m1 -18v3m1 0v3m0 12v3m0 3v6m0 69v3m1 -96v9m0 12v3m1 -27v3m0 9v15m1 -24v6m0 6v3m0 3v3m0 15v3m1 -45v3m0 3v3m0 15v3m1 -27v3m0 15v12m0 60v3m1 -93v3m0 6v3m0 3v3m0 9v6m1 9v3m1 -48v3m0 15v6m0 3v3m0 15v3m1 -36v3m0 9v6m1 -15v3m2 -12v3m0 9v6m0 3v3m1 -12v6m0 84v3m1 -102v3m0 15v9m1 -30v3m1 -6v6m0 3v6m0 9v9m0 3v3m0 54v3m0 3v3m1 -99v3m0 3v3m0 3v6m0 6v3m1 -30v3m0 3v3m0 3v3m0 6v3m1 -6v3m0 6v3m1 -33v3m0 3v6m0 3v9m0 6v3m0 3v3m1 -42v3m0 9v3m0 6v15m0 6v3m1 -24v9m0 9v3m2 60v3m1 -96v6m0 27v3m1 -36v9m0 9v3m0 3v3m1 -24v3m0 9v3m0 6v3m0 3v3m0 63v3m0 3v3m1 -105v3m0 15v3m1 -30v6m0 9v3m0 3v3m0 84v6m1 -102v3m0 3v9m0 6v6m0 3v3m3 -42v3m0 15v3m0 3v3m0 3v3m1 -12v3m0 6v3m1 -12v3m0 6v6m1 -21v3m0 6v3m1 -36v3m0 12v6m0 9v12m0 6v3m0 60v6m1 -111v3m0 9v3m0 18v3m1 -21v3m1 21v3m0 63v6m1 -90v12m0 3v3m2 -12v3m0 3v9m0 9v6m1 -36v3m1 3v3m0 15v3m0 54v3m1 -99v3m2 0v3m0 99v3m1 -72v3m2 -33v3m1 -6v3m0 15v3m0 66v3m1 3v3m1 3v3m3 -9v3m2 -69v3m1 -24v3m0 39v3m0 21v3m0 12v3m3 -60v3m0 15v3m0 39v3m1 -84v3m3 21v3m2 -30v3m3 90v3m1 3v3m3 -33v3m2 -9v3m2 3v3m1 -21v3m0 39v3m1 -60v3m0 60v3m2 -87v3m0 27v3m1 6v3m1 -36v3m0 6v3m0 6v3m0 3v3m0 54v3m2 -75v3m1 66v3m1 -30v3m3 -51v3m0 60v3m0 9v3m1 -69v6m0 12v3m0 27v3m0 3v3m2 -66v3m1 75v3m2 -39v6m0 15v3m2 -42v3m0 18v9m0 12v3m1 -69v3m0 42v3m2 -33v3m1 3v3m1 -15v3m0 36v3m0 21v3m2 -33v3m1 -6v3m0 9v15m1 -21v3m0 15v3m1 -51v3m0 12v3m0 6v3m0 3v6m1 3v3m1 -9v3m0 9v3m1 -45v3m0 21v3m0 6v15m1 -54v3m0 21v3m0 18v6m1 -9v3m1 -18v6m0 6v3m1 -27v3m1 21v3m1 -36v3m0 3v6m0 9v3m0 6v3m0 3v3m0 6v3m1 -36v3m0 3v3m0 6v3m0 18v3m1 -39v3m0 36v3m1 -39v6m0 3v9m1 -21v3m0 3v3m0 9v3m0 6v3m1 -33v3m0 12v3m0 3v3m0 6v3m1 -18v3m0 3v9m0 6v3m1 -66v3m0 24v3m0 3v3m0 12v3m1 0v3m1 -39v3m0 27v6m0 3v3m0 3v3m1 -60v3m0 21v3m0 3v9m0 9v3m1 -18v6m0 9v6m0 18v3m1 -45v3m1 -9v9m0 15v3m0 3v3m0 3v3m1 -45v3m0 18v3m1 -27v3m0 9v3m0 9v3m1 0v3m0 3v3m0 3v3m1 -63v3m0 15v3m0 27v9m0 3v3m1 -45v3m0 9v3m0 15v3m0 6v6m1 -36v3m0 6v3m0 3v3m0 6v6m0 6v3m0 12v3m2 -54v3m0 3v3m0 39v3m1 -72v3m0 18v3m0 15v9m0 18v3m1 -45v3m0 3v3m0 9v3m0 3v3m1 18v3m1 -54v3m1 12v6m0 9v6m0 3v3m1 -30v3m0 3v3m0 15v9m1 -27v3m0 6v3m1 -21v6m0 24v3m1 -42v3m0 30v6m1 -33v3m0 3v3m0 27v3m2 -36v3m1 12v3m1 -6v3m0 15v3m2 -27v3m3 12v3m2 -27v3m1 24v3m0 6v3m1 -45v6m1 15v3m1 3v3m0 12v3m4 -21v3m4 -21v9m2 -15v3m3 9v3m1 -21v3m5 33v3m3 -66v3m0 54v3m2 -27v3m0 15v3m0 9v3m4 -27v6m2 0v3m3 3v3m4 -18v3m0 15v3m1 -45v3m0 15v3m0 18v3m0 12v3m1 -42v3m0 21v3m4 -30v3m0 33v6m1 0v3m1 -6v3m4 -63v3m0 12v3m3 -24v3m1 42v3m1 -6v3m1 45v3m3 -108v3m0 6v3m0 24v3m0 3v3m0 3v3m0 3v3m0 24v3m2 -69v3m0 30v3m0 15v12m0 3v3m0 15v3m1 -6v3m9 -87v3m1 -30v3m0 15v3m1 6v3m0 24v3m1 9v3m14 30v3m3 -9v3m5 -9v3m9 6v3m1 -33v3m1 -42v3m17 81v3m2 -105v3m0 24v3m0 39v3m0 3v3m0 9v3m12 -33v3m6 3v3m1 -12v3m1 -9v3m0 48v3m1 -57v3m3 -36v3m2 -21v3m0 3v3m0 24v3m0 12v3m0 30v3m3 -51v3m1 24v3m3 3v3m1 6v3m3 -54v3m0 42v3m0 12v3m0 3v3m0 12v3m1 -12v3m3 -21v6m1 -69v3m0 36v3m0 21v3m0 3v3m0 3v3m0 3v3m0 3v3m1 -36v3m0 24v3m1 -30v6m0 9v3m0 15v3m1 -39v6m0 12v3m0 6v3m0 3v3m0 3v3m1 -33v9m0 12v6m1 -45v3m0 15v3m1 -57v3m0 48v12m0 15v3m1 -54v3m0 21v3m0 18v3m0 3v3m1 -99v3m0 48v3m0 6v3m0 36v9m1 -42v6m0 6v9m1 -24v3m0 3v3m0 15v3m1 -42v3m0 15v3m0 15v3m1 -3v3m3 -45v3m0 45v3m1 -87v3m0 75v3m1 -21v3m0 24v3m0 9v6m4 -48v3m1 -36v3m0 66v3m2 -69v3m0 60v3m1 -87v3m0 24v3m2 -21v6m1 0v6m0 69v3m1 -66v3m3 -21v3m0 15v3m0 15v3m0 36v3m1 -105v3m0 21v3m0 21v6m0 33v3m0 18v3m3 -36v3m1 21v3m1 -12v3m2 -69v3m2 24v3m8 0v3m0 24v3m2 -6v3m1 -15v3m1 -42v3m0 6v3m3 24v3m0 27v3m5 -51v6m0 18v3m1 -6v3m2 -63v6m4 -12v3m0 3v3m1 15v3m15 -21v3m2 3v3m0 6v3m0 30v6m1 0v3m2 -63v3m0 6v3m0 9v12m0 15v3m0 12v3m2 -42v3m0 3v3m0 6v6m1 -27v3m0 9v3m0 6v3m1 -42v3m0 18v3m0 9v3m0 9v3m0 21v3m1 -42v3m1 -30v3m1 3v3m0 18v3m0 3v6m2 -36v3m0 6v3m0 3v3m0 15v3m1 -6v3m1 -36v15m0 6v6m0 12v3m1 -36v3m0 9v3m0 6v3m0 15v3m1 -48v3m0 30v12m2 -48v3m0 18v6m0 6v3m1 -24v3m1 -15v3m0 3v3m0 6v3m0 3v3m0 3v6m1 -33v3m0 21v6m1 -15v3m0 6v3m0 3v6m0 9v6m0 24v3m1 -78v3m0 9v6m0 21v6m1 -45v6m0 15v3m0 9v3m0 3v3m1 -36v6m0 9v6m0 33v3m1 -63v3m0 3v3m0 3v6m0 12v3m0 9v3m1 -45v3m0 12v3m0 12v6m1 -3v3m0 6v3m1 -12v6m0 9v3m1 -51v9m0 3v6m0 18v9m2 -45v3m0 3v15m1 -12v3m0 12v3m0 15v3m0 21v3m1 -30v3m1 -42v3m0 12v3m0 57v3m1 -78v3m0 60v3m2 -51v6m0 15v3m1 -30v3m0 3v3m0 18v6m0 6v3m1 -51v3m0 6v3m0 9v6m0 3v3m0 3v3m1 -36v3m0 3v9m0 12v3m0 3v3m0 12v3m1 -54v6m0 9v3m0 18v3m1 -21v3m0 3v3m1 15v3m1 -42v3m0 9v3m0 15v3m1 -18v15m1 -30v3m0 6v3m0 6v3m0 3v3m0 9v3m0 18v3m0 6v3m1 -33v3m0 6v3m0 3v3m1 -39v3m0 3v3m1 -21v3m0 9v3m0 18v3m0 3v3m0 36v3m1 -87v6m0 12v3m1 -21v3m0 12v6m0 6v6m0 18v3m1 0v3m1 -36v3m1 -9v3m0 48v3m0 6v3m1 -78v3m0 6v3m0 6v3m0 12v3m0 21v3m3 15v3m0 3v3m2 -75v3m0 39v3m0 12v3m0 3v3m2 -30v3m1 -6v3m0 6v3m1 3v3m0 15v3m1 -78v3m0 33v3m1 -6v3m0 12v3m1 18v3m0 6v3m1 -72v3m0 24v3m2 36v3m1 -75v3m1 -3v3m0 12v3m0 3v3m1 12v3m2 -30v3m0 54v3m2 -48v3m0 24v3m1 18v3m1 -33v3m0 24v3m0 3v3m1 -3v3m2 -3v3m2 -51v3m1 -3v3m3 3v3m0 15v3m0 15v3m2 -24v3m0 18v3m1 -24v3m1 -18v3m1 6v6m1 3v3m0 6v3m4 -48v3m0 12v3m5 -15v3m0 12v3m1 6v3m1 -3v3m1 -21v3m0 6v3m0 3v3m0 12v9m0 6v3m2 -33v3m0 15v3m0 6v3m3 -60v3m0 9v3m0 15v9m0 3v6m0 3v6m0 3v3m1 -54v3m0 24v3m0 18v3m0 9v3m1 -66v3m0 33v3m1 -33v3m0 3v3m0 3v3m0 9v3m0 3v3m1 -39v6m0 18v3m0 3v9m0 12v3m1 -36v3m0 15v3m2 -42v3m0 3v3m0 18v3m0 15v3m0 3v3m1 -57v3m0 24v3m0 9v3m0 12v3m1 -42v3m0 3v3m0 6v9m0 3v3m0 12v3m1 -57v3m0 12v3m1 -15v12m0 12v3m0 6v3m0 6v12m0 3v3m2 -24v3m0 9v3m1 -63v3m0 6v3m0 24v3m0 3v3m0 12v3m0 3v9m0 12v3m1 -69v3m0 12v3m0 6v3m0 9v3m1 -39v3m0 3v6m0 6v3m0 3v6m0 6v3m1 -15v3m0 21v3m0 12v3m1 -60v3m1 -9v6m0 6v6m0 9v3m0 6v3m0 3v3m0 9v3m0 9v3m1 -33v3m1 -21v6m0 21v3m1 -33v6m0 6v3m0 6v3m1 -33v3m1 -6v3m0 12v6m0 6v6m0 6v3m2 -54v3m0 3v3m0 9v9m0 9v3m0 3v6m0 3v6m0 6v3m1 -66v6m0 3v3m0 6v3m0 24v3m0 3v6m0 3v6m1 -66v6m0 12v3m0 6v3m0 12v3m0 9v3m1 -51v3m0 12v3m0 3v3m0 12v3m0 3v6m0 3v6m0 3v3m0 9v3m1 -75v3m0 3v6m0 18v9m0 3v3m0 6v6m0 9v3m1 -51v3m1 -6v3m1 15v6m2 -39v3m0 3v3m0 3v3m0 6v6m0 6v9m0 3v3m0 3v3m0 3v3m1 -63v3m0 18v3m1 -12v9m0 21v3m0 6v3m1 -27v3m1 -27v3m0 3v3m0 12v3m0 27v3m1 -57v3m0 9v6m0 9v3m0 18v3m1 -54v9m0 33v3m0 9v6m1 -54v3m0 3v3m0 3v6m0 36v3m3 -42v3m0 36v6m1 -54v3m3 15v3m3 51v3"/><path stroke="#00ff66" stroke-width="1" fill="none" d="M211.5 85v3m0 30v3m0 69v3m1 -117v3m0 3v6m1 -18v3m0 39v3m1 -39v9m0 30v3m0 66v3m1 -63v3m1 -45v3m0 3v6m0 21v3m1 -42v3m0 3v3m0 30v3m0 66v6m1 -108v3m1 -9v3m0 42v3m0 60v3m1 -108v3m0 42v3m0 48v3m0 3v3m1 -105v3m0 99v3m1 -114v3m0 6v3m0 36v6m0 6v3m1 -6v3m0 51v3m1 -108v3m0 45v3m0 54v3m1 -111v3m0 45v3m0 51v3m1 -66v3m0 69v3m1 -114v3m0 3v3m0 39v3m0 60v6m1 -108v6m0 18v3m0 12v3m0 63v3m1 -114v3m0 33v3m0 12v3m0 48v3m1 -102v6m0 30v9m0 54v3m0 6v3m1 -117v3m0 3v6m0 24v3m0 6v3m1 -36v3m0 27v3m0 9v3m0 57v3m1 -114v3m0 39v6m0 57v3m1 -99v3m0 12v3m0 3v3m0 12v3m1 -45v3m0 36v3m0 57v6m0 3v3m1 -117v3m0 3v3m0 30v12m0 57v3m1 -87v9m0 18v3m1 -48v3m0 33v3m0 15v3m0 45v3m1 -114v3m0 6v3m0 27v9m0 6v3m0 54v6m1 -87v3m0 3v3m0 69v3m1 -69v9m0 3v3m0 3v3m0 48v6m1 -108v3m0 42v3m1 -45v3m0 21v3m1 3v3m0 60v3m0 6v3m1 -105v3m0 24v3m0 63v3m0 3v6m1 -66v3m0 3v3m0 54v6m1 -117v6m0 9v3m0 24v3m0 9v3m1 -57v3m0 48v3m0 63v3m1 -114v3m0 9v3m0 3v3m1 12v3m0 12v3m0 51v3m1 -102v3m0 3v3m0 18v3m0 63v3m1 -108v3m0 6v3m0 3v3m0 12v3m0 3v3m0 3v6m1 -33v6m0 9v3m0 9v6m0 63v3m1 -105v3m0 21v3m0 12v6m1 54v3m0 3v3m1 -114v6m0 12v3m0 3v9m0 9v3m0 12v3m0 45v9m1 -90v3m0 6v3m0 6v6m1 -42v3m0 39v3m1 -42v3m0 3v3m0 15v3m0 9v3m0 66v3m1 -111v3m0 15v6m0 9v3m0 3v3m0 60v6m1 -114v3m0 6v3m0 3v6m0 3v3m0 6v3m0 6v6m1 -48v3m0 102v6m1 -99v3m0 24v3m0 6v3m0 6v3m0 48v3m0 3v3m1 -105v3m0 18v9m0 3v3m1 -42v3m0 3v6m0 18v9m1 -36v3m0 6v6m0 18v3m0 69v3m1 -93v6m0 3v6m0 3v3m1 -45v3m0 6v3m0 9v3m0 3v3m0 12v12m0 6v3m0 45v3m1 -108v3m0 39v3m1 -39v3m0 6v3m0 3v6m0 84v3m1 -57v3m0 39v3m1 -105v3m0 3v6m0 21v3m1 -21v6m0 9v6m0 72v3m1 -105v6m0 3v9m0 15v3m0 3v3m0 6v3m0 54v3m1 -117v3m0 18v6m0 3v3m0 3v3m0 6v3m0 66v3m1 -105v3m0 90v3m0 3v3m1 -102v3m0 3v3m0 24v3m0 57v3m0 12v3m1 -87v6m0 12v3m0 51v6m0 3v3m1 -69v3m0 9v3m1 -54v3m0 6v6m0 15v9m1 63v3m0 3v3m1 -66v3m0 45v3m1 -93v6m0 24v3m0 63v6m1 -93v3m0 18v3m0 60v3m1 -105v3m0 9v3m0 81v3m0 15v3m1 -108v3m0 12v3m0 9v3m0 9v6m0 6v3m0 39v3m0 3v3m1 -99v3m0 9v3m0 30v3m0 36v3m1 12v3m1 -96v3m0 15v3m0 63v3m1 -6v3m1 -78v3m0 18v3m0 3v6m1 -39v3m0 39v3m1 42v3m1 -84v3m0 3v3m0 21v3m1 -15v3m0 60v6m0 3v3m1 -96v3m0 21v3m0 48v3m3 -78v3m2 -18v3m1 0v3m0 12v3m0 33v3m0 54v3m1 -72v3m1 -21v3m1 30v3m2 -48v3m2 36v3m1 36v3m0 3v3m1 -78v3m0 6v3m0 51v3m0 3v3m0 12v3m0 3v3m1 -60v3m0 12v3m2 -30v3m0 18v6m0 30v3m1 -81v6m0 33v3m2 -3v3m0 45v6m1 -87v3m0 33v6m0 30v3m1 -54v3m0 42v3m1 -75v3m0 12v3m0 3v3m0 9v6m0 36v3m1 -57v3m0 9v3m0 30v3m0 18v3m1 -60v3m0 36v3m1 -54v3m0 9v6m0 24v6m0 12v3m1 -63v3m0 15v3m2 -33v3m0 6v3m0 33v3m0 9v3m0 9v3m1 -75v3m0 6v3m0 3v3m0 3v3m0 3v6m0 9v3m0 6v3m0 21v3m1 -96v3m0 6v3m0 15v3m0 21v3m0 9v3m0 6v3m0 15v3m1 -60v3m0 30v3m0 21v3m0 3v3m1 -57v3m0 60v3m1 -66v3m0 3v3m0 6v3m0 24v3m1 -45v3m0 21v3m0 15v3m0 6v3m1 -9v3m1 -87v3m0 12v3m0 24v3m0 27v3m0 9v3m1 -24v3m0 15v3m1 -72v3m0 3v3m0 18v3m0 12v6m0 24v3m0 3v9m1 -66v3m1 18v3m0 3v6m0 12v3m1 -63v3m0 42v6m1 -45v3m0 9v3m0 24v3m0 15v3m1 -57v3m0 6v3m0 18v3m0 15v9m0 12v3m1 -48v9m0 9v3m0 12v6m1 -78v3m0 39v6m0 3v3m0 18v6m1 -45v6m0 12v3m0 6v3m0 9v3m1 -48v3m0 3v3m0 6v3m0 6v3m0 3v6m1 -60v3m0 12v6m0 27v6m1 -60v3m0 69v3m1 -87v3m0 9v3m0 6v3m0 18v3m0 9v3m1 -48v3m0 24v3m0 9v3m0 6v3m0 6v6m1 -42v3m0 18v3m0 3v3m0 27v3m1 -84v6m0 39v3m0 6v3m0 6v3m1 -60v3m0 9v3m0 15v6m0 6v3m0 9v3m0 18v3m0 6v3m1 -48v3m0 6v3m0 39v3m1 -75v3m0 24v6m0 3v6m0 3v6m0 3v3m0 9v3m1 -84v3m0 21v3m0 12v3m0 3v6m0 6v3m0 3v6m2 -54v3m0 15v3m0 6v3m0 6v3m1 -30v3m0 6v3m0 9v3m0 6v3m0 3v3m0 12v3m1 -78v6m0 60v3m1 -60v3m0 3v3m0 27v9m0 3v3m1 0v3m0 6v3m0 3v3m1 3v3m1 -51v6m1 -21v6m0 30v3m0 21v3m1 -48v6m0 3v3m0 18v9m0 15v3m1 -54v6m0 30v3m1 -42v6m0 36v3m0 3v6m1 -72v3m0 60v3m1 -48v3m0 6v3m0 9v3m1 -21v3m0 6v3m0 9v3m0 12v3m1 -39v3m0 3v3m0 6v3m0 9v3m0 3v3m0 3v3m0 9v3m1 -78v3m0 27v3m0 21v3m0 3v3m0 6v3m0 3v3m1 -69v3m0 12v3m0 30v6m0 3v6m1 -51v3m0 3v6m0 9v3m0 9v3m0 3v3m1 -51v15m0 33v3m0 3v3m0 3v6m1 -54v6m1 -30v6m0 6v3m0 6v3m0 42v3m0 9v3m1 -78v3m0 18v3m0 42v3m1 -48v3m0 3v3m0 6v3m0 18v6m1 -69v3m0 18v3m0 42v6m1 -42v3m0 6v3m0 6v3m0 6v3m0 6v3m0 6v3m1 -54v3m0 12v3m0 18v3m0 6v3m0 3v3m1 -39v3m0 3v3m0 3v9m0 3v3m1 -63v3m0 27v3m0 42v3m1 -54v3m0 39v3m0 6v3m1 -48v3m0 3v6m0 12v6m0 3v3m1 -33v6m0 18v6m0 3v3m1 -63v3m0 6v3m0 24v3m0 18v3m0 9v3m1 -78v6m1 12v9m0 9v3m0 3v3m0 12v3m0 6v3m1 -63v3m0 27v3m0 12v6m1 -18v3m1 -48v3m0 9v3m0 9v3m0 54v6m1 -54v3m0 15v6m0 6v3m1 -36v3m0 24v3m0 3v6m1 -39v3m0 3v3m0 18v9m1 -6v3m1 -30v6m0 6v3m0 3v3m0 3v3m0 15v3m0 6v3m1 -48v3m0 3v6m0 6v6m1 -24v3m0 15v3m0 3v3m0 12v3m1 -81v3m0 9v3m0 30v6m0 6v3m1 -15v3m1 -6v3m1 -33v3m0 9v3m0 36v6m0 9v3m1 -24v3m1 -3v3m0 6v3m0 9v3m1 -15v3m0 3v3m1 -60v3m0 45v6m0 6v3m1 -27v3m2 -21v3m1 0v6m3 -36v3m0 21v3m1 24v3m4 -15v3m0 3v3m1 -33v3m1 -27v3m0 30v3m1 -3v3m0 30v3m2 -45v3m1 9v3m1 -15v3m0 9v3m1 3v3m0 12v3m1 -3v3m2 -6v3m1 6v3m1 -36v3m0 15v3m1 -9v3m1 -6v3m0 12v3m2 -9v3m1 -63v3m0 36v3m0 15v3m1 9v3m2 -24v3m2 0v3m2 -6v3m0 30v3m1 -72v3m0 12v3m0 12v3m0 6v3m0 3v3m0 12v3m0 6v3m1 -63v3m0 15v3m3 -6v3m1 -12v3m0 6v3m0 6v3m0 3v3m0 9v3m1 -54v3m0 12v3m0 3v3m0 3v3m0 48v3m1 -57v3m0 24v3m1 -6v3m2 -63v6m0 66v3m1 -24v3m1 -30v3m0 36v3m0 9v3m1 -78v3m0 84v3m1 -51v3m0 45v3m1 -60v3m0 33v3m0 6v6m1 -78v3m0 24v3m0 6v6m2 3v3m0 15v3m0 12v6m0 3v6m1 -105v3m0 9v3m0 6v6m0 3v3m0 30v3m0 9v3m0 3v3m0 18v3m1 -99v3m0 3v3m0 3v3m0 12v3m0 3v3m0 9v3m0 3v3m0 3v6m0 33v3m0 3v3m1 -108v9m0 3v6m0 6v3m0 3v6m0 3v6m0 3v3m0 42v6m0 3v3m1 -99v3m0 9v12m0 9v3m0 9v3m0 3v3m0 21v15m0 3v3m1 -105v3m0 54v3m0 6v3m0 30v3m0 3v6m1 -27v3m0 12v3m0 6v3m4 -48v3m2 -36v3m1 -3v3m1 -45v3m0 54v3m0 57v3m1 -117v3m0 30v3m0 18v3m0 12v3m0 3v3m0 33v3m1 -111v3m0 66v3m16 15v3m1 -12v3m1 15v3m2 -27v3m1 -9v3m0 18v3m1 -21v3m2 15v3m3 -9v3m1 -12v3m0 3v3m5 -30v3m0 15v3m0 3v3m1 -3v3m17 -42v3m1 -33v3m0 102v3m1 -96v3m0 18v3m0 6v3m0 9v3m10 15v3m1 15v3m3 -27v3m2 -18v3m2 15v3m1 -27v3m2 0v3m0 6v3m0 27v3m1 -33v3m1 -48v3m0 45v3m0 15v3m0 12v3m1 -102v3m0 3v3m0 18v3m0 24v3m1 -30v3m0 21v3m0 45v3m1 -90v3m0 9v3m0 3v3m0 24v3m0 42v3m2 -15v3m1 -63v3m0 30v3m1 -36v3m0 6v3m0 30v3m0 21v3m1 -57v3m0 9v3m1 -66v3m0 3v3m0 6v3m0 3v3m0 9v3m0 6v3m0 9v3m0 3v3m0 9v3m0 12v6m0 12v3m1 -105v3m1 -3v3m0 105v3m1 -63v3m1 15v3m0 36v3m1 -36v3m0 12v3m0 9v3m0 6v3m1 -39v3m0 27v3m0 6v3m1 -45v6m0 6v6m0 6v6m1 -39v3m0 21v6m0 3v3m0 6v3m1 -39v6m0 15v3m0 6v3m0 3v3m1 -105v3m0 45v3m0 9v6m0 3v3m1 -9v3m0 21v6m0 15v3m1 -54v3m0 45v3m1 -72v3m1 3v3m0 6v3m0 9v6m0 21v3m0 15v3m1 -114v3m0 96v6m0 6v3m1 -99v3m0 48v6m0 21v3m2 -66v3m0 15v3m0 69v3m1 -105v3m0 18v3m0 24v6m0 6v3m0 21v3m1 -102v3m0 45v3m0 18v3m0 6v3m0 24v6m1 -69v6m0 24v3m0 6v3m0 9v3m0 3v6m0 9v3m1 -108v3m0 36v3m0 27v3m0 3v3m0 3v3m0 6v6m0 6v3m1 -42v3m0 18v3m0 9v3m1 -27v6m0 12v3m1 -105v3m0 6v3m0 3v3m0 72v3m1 -87v3m0 15v3m0 48v3m0 9v3m1 -36v3m1 30v3m0 18v3m1 -93v3m0 60v3m0 6v3m0 6v3m1 -60v3m1 42v6m1 -93v3m0 6v3m0 45v3m0 6v3m0 6v3m0 9v3m0 18v3m1 -9v3m1 -27v3m1 -72v3m0 39v3m1 30v3m1 -42v3m0 3v3m1 -30v3m0 3v3m0 6v3m0 33v3m0 6v3m0 24v3m1 -51v3m0 39v3m1 -96v3m0 21v3m0 9v3m0 6v3m0 3v6m0 9v3m0 3v3m0 6v3m1 -15v3m1 -63v6m0 6v3m0 21v3m0 6v3m1 -15v3m0 6v3m2 -6v3m1 -27v3m1 -30v3m0 9v3m0 27v3m0 6v9m0 24v3m0 12v3m1 -102v3m0 9v3m1 -24v3m0 48v3m1 18v3m0 6v3m1 -45v3m1 45v3m1 -87v3m0 75v3m1 -45v6m0 18v3m1 -15v3m0 18v3m1 0v3m1 -75v3m0 9v3m0 9v3m1 -9v3m0 15v3m2 -42v3m0 36v3m0 21v3m0 6v3m2 -66v3m1 6v3m1 -18v3m0 12v3m0 3v3m0 12v3m0 42v3m1 -27v3m1 -63v3m2 18v3m0 24v3m1 -42v3m0 6v3m0 75v3m1 -75v3m0 6v3m0 15v3m1 -27v3m1 -12v3m0 9v3m0 18v3m1 -45v3m1 0v3m1 3v3m0 33v3m0 15v3m1 -6v3m0 3v3m1 -42v3m0 51v3m2 -72v3m0 39v3m0 6v3m0 6v3m1 -81v3m0 39v3m15 -39v3m0 36v3m2 -3v3m0 12v3m1 -66v3m0 18v3m0 12v9m0 3v3m0 18v3m1 -72v3m0 3v3m0 3v3m0 15v9m0 6v9m0 3v3m1 -54v3m0 63v3m1 -75v3m0 3v3m0 9v3m0 6v6m0 12v3m0 15v3m1 -54v6m0 36v3m1 -51v3m0 24v6m0 9v3m0 9v3m1 -60v6m0 45v3m1 -42v3m0 3v3m0 24v3m1 -51v3m0 3v3m0 9v6m0 6v3m1 -30v6m0 3v3m0 18v3m0 24v6m1 -54v3m0 15v3m0 9v3m1 -18v9m0 12v6m1 -51v3m0 9v3m0 12v3m0 6v6m1 3v3m1 -33v3m0 3v3m0 18v3m0 3v3m0 6v3m1 -12v3m0 18v3m0 6v3m1 -84v3m0 3v12m0 3v3m0 12v3m0 18v3m1 -48v6m0 9v3m0 9v6m0 15v3m1 -45v3m0 6v3m1 -27v3m0 30v3m0 12v6m1 -39v3m0 33v3m1 -6v3m1 -27v6m0 12v3m0 27v3m1 -69v3m0 3v3m0 6v3m0 3v3m0 3v3m0 15v3m0 9v3m1 -39v3m0 18v6m1 -39v3m0 18v3m0 3v6m1 -27v6m0 12v3m1 3v3m0 24v3m1 0v3m0 36v3m1 -99v3m0 3v3m0 18v6m1 6v3m0 6v6m0 3v3m1 -33v3m1 -6v3m0 27v3m1 0v3m3 -6v3m1 -18v3m2 -21v6m0 3v3m1 -15v3m0 12v3m0 6v3m1 -39v3m0 15v6m1 -3v3m0 6v3m2 -39v3m0 3v6m0 3v6m0 6v3m1 -51v3m0 30v3m0 3v3m1 -12v3m0 12v3m0 3v3m0 18v3m1 -18v3m0 6v6m1 -42v3m0 6v3m0 3v3m0 3v3m0 3v6m1 -33v3m0 33v6m1 -66v3m0 3v3m0 6v3m0 9v3m0 3v6m0 9v3m0 9v3m1 -60v3m0 9v6m0 18v3m0 12v3m0 9v3m1 -69v3m0 27v3m1 -30v3m0 18v3m0 33v3m1 -63v3m0 24v3m0 6v6m0 12v3m1 -60v6m0 6v3m0 12v3m0 3v3m0 12v6m0 3v3m0 24v3m1 -90v9m0 27v3m0 3v3m0 27v3m1 -69v3m0 12v3m0 3v3m0 3v9m0 9v3m0 3v3m0 6v3m1 -66v3m0 39v3m0 15v3m1 -51v3m0 3v3m0 6v3m0 18v3m0 9v6m1 -66v3m0 18v3m0 33v3m1 -12v3m2 -36v6m0 3v3m0 45v3m1 -69v3m0 54v3m0 3v3m0 6v6m1 -81v3m0 6v3m0 21v3m0 18v3m0 6v3m0 6v3m1 -54v3m0 12v3m1 -21v6m1 -6v3m0 30v6m0 12v3m0 9v3m1 -21v6m1 -27v3m0 15v3m1 -69v3m0 21v6m0 6v6m0 9v9m0 3v3m0 6v3m2 -30v3m2 -48v3m0 21v3m0 21v3m0 27v3m1 -81v3m0 36v6m0 6v3m0 24v3m1 -54v3m0 3v3m0 42v3m1 -51v6m0 42v3m1 -33v3m1 -24v3m0 33v3m1 -6v3m0 15v3m1 -36v3m1 3v3m0 6v3m1 0v3m0 6v3m1 -24v3m0 27v3m1 -45v3m1 -12v3m0 12v3m0 21v3m3 -60v3m0 9v6m0 36v3m0 12v6m1 -42v3m0 6v6m0 18v3m1 -36v3m1 -33v3m0 63v3m0 15v3m1 -102v3m0 54v3m0 3v3m1 -12v3m0 6v3m0 12v3m1 -63v3m0 9v3m1 -6v3m0 6v3m0 12v3m1 -48v3m0 36v3m0 6v6m0 9v3m1 -48v3m0 6v3m1 -6v3m0 15v3m1 -30v6m0 36v3m2 -57v3m0 9v3m0 12v9m0 18v3m0 6v6m1 -42v3m1 -39v3m0 6v3m0 12v9m0 18v3m0 9v3m0 3v3m1 -63v3m0 51v3m0 9v3m0 3v3m1 -72v3m0 6v9m0 3v3m0 6v9m0 3v15m1 -69v3m0 12v3m0 3v3m0 21v9m0 9v3m0 6v3m0 6v3m1 -66v3m0 30v6m1 -54v3m0 6v3m0 3v3m0 9v12m0 12v6m0 3v6m0 3v3m1 -51v3m0 6v3m0 36v3m1 -60v3m0 12v3m0 6v3m0 6v3m0 3v3m0 6v3m0 6v3m1 -48v3m0 6v3m0 21v3m1 -45v3m0 9v3m0 3v3m0 3v3m0 3v3m0 3v12m0 9v3m1 -66v3m0 6v3m0 3v3m0 27v3m0 9v6m0 9v3m1 -69v3m0 27v3m0 6v3m1 -60v3m0 12v6m0 18v3m0 6v3m0 3v3m0 9v3m1 -60v3m0 9v3m0 6v3m0 9v9m0 3v3m0 3v3m0 9v3m1 6v3m1 -72v3m0 33v3m0 6v3m0 3v3m0 6v3m1 -72v3m0 9v3m0 3v3m0 12v3m0 6v3m0 3v3m0 9v3m1 -63v3m0 48v3m0 18v3m1 -42v3m0 12v3m0 9v3m1 -57v3m0 21v3m0 3v9m0 6v6m0 6v6m0 3v3m1 6v3m1 -75v3m0 3v3m0 6v9m0 15v3m0 6v3m0 24v3m1 -90v3m0 9v3m0 39v3m0 6v3m0 6v6m0 12v3m1 -12v3m1 -66v3m0 27v3m0 6v6m0 3v3m1 3v3m0 15v3m1 -72v3m0 6v3m0 15v6m0 6v3m1 -45v3m0 27v3m0 6v6m0 6v3m0 6v3m1 -72v3m0 12v3m0 36v6m0 6v3m1 -57v3m0 24v3m0 6v3m0 3v3m0 3v3m0 12v3m1 -78v3m0 21v3m0 30v6m1 -54v6m0 6v3m0 18v3m0 18v3m1 -75v3m0 84v3m1 -39v3m0 24v3m0 30v3m1 -45v3m1 -60v3m0 27v3m0 6v3m2 -39v6m0 3v3m0 24v3m0 6v3m0 3v6m0 12v3m1 -75v6m0 30v3m0 9v9m1 -60v3m0 69v3m1 -60v3m0 3v6m0 3v3m0 24v3m1 9v3m1 -42v12m0 6v3m0 3v3m0 6v3m0 3v3m1 -72v3m0 12v3m0 15v6m0 15v3m0 3v6m0 6v3m0 6v3m1 -78v3m0 9v6m0 12v3m0 24v3m1 -33v3m0 18v3m0 15v3m1 -72v3m0 9v3m0 9v3m0 9v3m0 9v3m0 6v3m0 3v6m1 -45v9m0 15v3m0 12v6m1 -66v3m0 36v12m1 -63v3m0 3v3m0 6v6m0 3v9m0 21v3m0 3v3m1 -48v3m0 27v6m1 -24v3m0 21v3m0 3v3m1 -27v6m0 12v6m1 15v3m2 -66v3m0 12v3m1 -27v3m0 93v3m1 6v3m3 -72v3"/><path stroke="#66ff00" stroke-width="1" fill="none" d="M211.5 91v3m0 3v3m3 -6v3m0 3v6m2 -3v3m1 -6v3m1 -12v3m0 6v3m1 3v6m1 -15v3m1 -9v3m0 6v3m1 -6v3m1 -12v3m1 3v6m1 6v3m1 -12v6m1 6v3m2 -21v3m1 -9v3m0 3v3m0 3v3m0 3v3m1 -9v6m1 -15v9m1 -15v9m0 9v3m2 -15v3m0 3v3m1 -9v3m0 9v6m3 -18v3m0 3v3m3 -9v12m0 3v3m0 6v3m2 -24v3m1 3v3m0 3v3m1 -9v3m1 -9v3m1 6v9m3 -12v3m4 -21v3m0 27v3m0 63v3m0 3v3m3 -111v3m3 9v3m1 15v3m7 -15v3m2 -6v3m0 3v3m0 9v3m0 6v3m7 -30v3m1 3v3m1 3v3m1 0v3m1 -18v9m0 3v3m0 6v3m3 -15v3m0 6v3m4 78v3m16 -99v3m12 27v3m6 66v3m5 -27v3m0 3v3m0 15v3m4 -45v3m4 -36v3m12 36v9m0 6v3m8 -24v3m0 36v3m3 -39v3m3 12v3m1 -15v3m2 -3v3m3 -9v3m4 36v3m3 -27v3m2 -12v3m0 6v3m0 3v3m1 -27v3m0 21v3m2 -24v3m4 -9v3m0 3v3m0 3v3m0 9v3m0 6v3m5 -12v3m1 -9v3m2 -6v6m0 3v3m0 12v3m1 -69v3m0 45v3m0 3v3m4 -30v3m0 3v3m0 9v3m0 15v3m37 -24v3m12 -36v3m0 36v3m14 -45v3m1 57v3m3 -66v3m4 0v3m65 0v3m0 36v3m0 18v3m26 -111v3m0 51v3m16 27v3m0 3v3m3 -21v9m0 3v3m0 6v3m0 12v3m1 -30v3m1 0v3m2 -21v3m1 0v12m0 3v3m1 0v3m1 -9v3m6 18v3m5 -75v3m7 -24v3m17 -6v3m24 54v3m7 -30v3m25 -12v3m1 21v3m1 -60v3m0 6v3m0 15v3m2 -21v3m2 6v3m1 -15v3m1 3v3m0 3v6m1 -21v6m3 -6v3m2 18v6m1 -30v3m0 3v3m0 12v3m0 15v3m0 3v3m2 -15v3m0 12v3m1 -27v3m0 3v3m1 -3v3m1 -27v3m0 6v3m0 9v3m0 15v3m1 -39v3m0 21v3m0 6v3m1 -30v3m0 3v6m0 9v3m0 3v3m0 3v6m1 -51v3m0 6v3m0 21v3m0 9v3m1 -51v3m0 3v3m0 15v12m0 6v3m1 -39v3m0 21v3m1 -15v3m1 -21v3m0 21v3m0 6v3m1 -30v3m1 0v3m0 18v6m0 6v3m1 -42v3m0 12v3m0 9v6m2 -21v3m1 -18v3m0 6v3m0 3v6m0 12v3m1 -33v3m0 9v6m0 3v3m0 3v6m2 -33v3m0 15v6m11 -12v3m1 54v3m2 9v3m2 -42v3m2 3v3m8 -12v3m24 0v3m7 -3v6m0 33v3m5 -39v3m0 30v3m1 -42v3m0 15v3m1 -18v3m2 -15v3m4 -6v6m0 3v3m0 3v3m0 3v3m0 3v3m0 6v3m1 -42v3m2 -3v3m0 6v3m2 -21v3m0 27v3m1 -30v3m0 6v3m0 21v3m0 24v3m3 -66v6m0 12v3m0 3v3m0 3v9m0 3v3m2 -48v6m0 6v3m0 12v3m0 6v3m0 6v3m3 6v3m4 -30v6m1 -21v3m0 3v3m0 9v3m0 33v3m2 -39v3m1 -18v3m2 -6v3m1 -15v15m0 6v15m0 15v6m0 3v3m2 -42v3m3 42v3m1 -69v3"/><path stroke="#33ff00" stroke-width="1" fill="none" d="M211.5 94v3m0 3v3m1 -12v12m0 3v3m1 -15v12m2 -21v3m0 6v3m0 6v3m2 -12v3m0 9v9m1 -27v3m1 0v3m0 3v3m0 12v3m1 -24v3m0 6v3m1 -15v3m0 3v6m1 -12v3m0 36v3m1 -51v3m0 3v3m0 21v6m1 -9v6m1 0v6m1 -27v6m0 6v3m0 3v3m1 -30v3m0 6v3m0 12v3m0 3v3m1 -27v3m0 3v3m0 3v3m1 -9v6m1 0v3m0 6v3m1 -21v3m1 3v12m1 -18v3m0 12v6m0 66v3m1 -87v3m1 0v3m0 3v6m0 6v3m3 -24v3m1 -6v3m0 3v9m1 -18v3m0 12v3m1 -21v3m0 15v9m0 15v3m1 -15v3m1 -21v3m1 -12v3m0 3v3m1 -12v3m0 24v3m1 -30v3m0 6v3m0 6v3m0 3v6m1 -30v3m0 9v3m0 12v3m1 -27v3m0 3v3m1 6v3m1 -24v3m0 3v9m0 6v3m0 3v3m2 -30v3m2 -3v3m0 3v3m0 3v3m1 -24v3m0 6v6m0 3v3m0 9v3m0 6v3m0 3v6m2 -33v3m1 -6v3m0 6v9m1 -12v3m1 9v3m2 -27v3m0 21v3m0 3v3m1 -21v3m0 81v3m1 -93v3m2 6v3m1 -6v3m0 6v3m1 -9v3m1 -15v3m0 15v3m2 -24v3m0 15v3m0 15v3m0 51v3m0 15v3m1 -90v3m1 3v3m0 15v3m1 -33v3m0 9v3m1 -24v3m2 -6v3m0 3v3m0 27v3m1 -27v3m1 -9v3m0 3v3m2 15v3m0 60v3m1 -84v3m0 3v3m1 3v3m2 -12v3m1 -12v6m0 6v3m1 21v3m3 -33v3m0 6v3m1 69v3m3 -99v3m0 9v3m0 81v9m2 -63v3m6 -9v3m10 69v3m2 -84v3m0 39v3m0 3v3m2 12v3m3 -15v3m1 24v3m2 -75v3m0 69v3m1 -60v3m0 36v3m4 -21v3m0 36v3m1 -36v3m0 15v3m4 -42v3m0 12v3m1 -9v3m2 -30v3m1 -3v3m0 36v3m0 6v3m3 -27v3m1 24v3m0 12v3m2 -69v3m0 9v3m0 33v3m1 -12v3m1 -54v3m0 18v3m0 12v3m0 12v3m3 9v3m0 15v3m1 -75v3m0 27v3m0 3v3m0 18v3m0 6v3m2 -18v3m1 -6v3m1 0v3m1 -33v3m0 18v3m3 -15v3m0 3v3m0 6v3m0 18v3m1 -36v3m0 6v6m0 3v6m4 -15v3m1 -3v3m0 12v3m1 -33v3m0 12v3m0 3v15m0 9v3m1 -57v3m0 18v3m1 18v3m1 -18v3m1 -36v3m0 15v6m0 3v3m1 -12v3m0 6v3m0 3v3m1 24v3m2 -39v3m1 3v6m0 18v3m1 -24v6m2 -15v3m0 3v6m0 6v3m2 -24v3m0 9v3m0 9v6m1 -30v3m2 12v3m0 18v3m1 -42v3m0 9v3m0 12v3m1 -12v3m2 -15v3m0 15v3m1 -21v9m0 12v3m2 -18v6m0 6v3m1 -27v3m0 12v6m1 -30v3m0 6v3m0 3v3m0 3v9m0 3v3m1 -24v3m1 3v3m0 6v3m1 -24v3m0 18v3m1 -30v3m0 6v3m0 3v6m0 3v3m0 9v3m2 -15v3m2 -33v3m0 18v6m0 15v3m7 -18v3m1 -42v3m0 18v3m0 30v6m3 -69v3m0 36v3m22 -6v3m2 -21v3m1 9v3m0 3v3m2 18v3m1 -42v3m0 21v6m0 6v3m2 12v3m5 -42v3m2 30v3m1 -33v3m0 12v3m2 -3v3m9 -27v3m3 9v3m6 -39v3m2 30v3m1 3v3m10 -24v3m19 18v3m35 -63v3m0 42v3m0 6v3m0 42v3m18 -27v3m8 -84v3m0 75v9m0 6v3m6 -57v3m5 12v3m2 0v3m2 3v3m1 -9v3m0 3v3m0 24v3m0 3v6m1 -39v9m0 3v3m1 -6v3m1 -21v3m0 6v3m0 15v3m1 -39v3m1 24v6m1 -3v3m0 6v6m1 -12v3m1 -54v3m0 27v6m0 18v3m1 -15v3m0 12v3m1 -36v3m1 -15v3m0 24v6m0 15v3m1 -6v3m4 0v3m1 -18v3m5 -66v3m0 3v3m5 -9v3m0 63v3m5 -72v3m1 9v3m4 -33v3m0 39v3m0 9v3m0 48v3m4 -48v3m9 -42v3m0 51v3m2 -63v3m0 18v3m1 -6v3m1 6v3m3 30v3m30 -78v3m0 36v3m3 -39v3m0 12v3m0 12v3m0 9v3m0 3v6m2 -24v3m2 -24v3m0 15v3m0 6v6m0 6v3m1 -12v3m2 -3v3m2 -27v3m0 3v3m1 -15v3m1 -15v3m0 18v3m0 15v3m1 -42v6m0 6v3m0 12v3m0 3v6m0 3v3m1 -33v3m0 3v9m0 3v3m4 -24v6m0 18v3m0 6v3m1 -24v3m1 -24v12m0 30v3m0 9v3m1 -48v3m0 6v3m1 -15v3m0 3v3m0 3v3m0 6v3m0 12v3m1 -42v3m0 6v3m0 18v3m1 -27v3m0 12v6m1 -21v6m1 -15v3m0 3v6m0 3v9m0 6v3m1 -18v3m0 9v6m0 21v3m1 -48v3m0 12v3m1 0v3m0 15v3m0 3v6m0 18v3m0 3v3m1 -81v3m0 21v3m1 -27v6m0 3v12m0 15v3m1 -39v3m0 12v3m0 3v3m0 9v3m0 3v3m0 6v3m1 -51v3m0 6v3m0 6v6m0 9v6m0 3v9m1 -21v3m1 -12v6m0 12v3m1 -24v3m1 -21v3m0 12v3m0 3v6m0 3v3m0 6v6m0 3v3m1 -42v6m1 -12v3m0 9v6m1 -15v6m1 -12v3m0 21v3m0 24v3m1 -51v3m0 12v6m0 12v3m0 27v3m1 -66v9m1 -12v12m1 27v3m1 -45v3m0 3v3m0 3v3m0 6v3m0 12v3m1 -30v6m1 -3v3m0 12v3m0 3v6m0 3v3m1 30v3m1 -72v3m0 30v3m0 6v3m3 -15v6m1 -30v3m0 27v3m5 -24v3m0 9v3m0 9v3m1 -9v3m3 0v3m0 6v3m1 -24v3m0 21v3m1 21v3m1 -51v3m1 6v3m4 -12v3m0 27v3m1 -48v3m0 12v3m0 45v3m1 -60v3m1 6v3m3 3v3m0 30v3m1 -36v3m1 0v3m0 3v3m0 6v3m2 30v3m8 -51v3m3 -12v3m1 45v3m4 -57v3m4 48v3m4 -42v3m0 27v3m0 3v3m4 -48v3m1 -3v3m1 6v3m1 -9v3m2 3v3m0 15v3m3 -30v3m0 3v3m1 -24v3m0 3v6m0 3v3m0 48v3m1 -60v3m2 6v6m0 15v3m0 15v3m2 -51v3m0 6v3m0 3v3m1 -24v3m0 9v3m0 12v3m0 3v6m0 39v3m2 -81v6m0 3v3m0 6v6m0 3v3m0 6v3m0 6v3m0 3v3m1 -57v6m0 6v3m0 6v3m0 3v3m0 15v3m0 6v3m0 3v3m2 -36v3m0 3v3m0 6v3m0 9v6m2 -57v3m0 12v3m1 9v6m0 6v3m0 3v3m2 -18v3m0 12v3m1 -39v3m1 -12v3m0 3v9m0 30v3m0 6v6m0 3v3m1 -63v3m0 3v3m0 15v3m0 3v3m0 3v3m0 3v3m0 6v3m1 -54v3m0 3v3m0 6v3m1 -15v3m0 3v6m0 3v3m0 27v3m1 -36v3m0 6v6m0 15v3m3 -54v3m0 63v3m2 -48v3m0 24v3m0 3v3m0 3v3m1 -48v3m0 45v3m2 -30v3m1 -18v3m0 9v3m0 3v3m1 -36v3m0 36v3m0 6v3m1 -42v3m0 15v3m0 9v3m1 -39v3m7 -18v3m0 66v3"/><path stroke="#99ff00" stroke-width="1" fill="none" d="M211.5 106v6m3 -15v3m1 -9v3m0 6v3m1 -9v3m1 0v3m2 -6v3m0 3v6m2 -3v3m1 -6v3m1 -12v15m0 72v3m1 -93v3m0 9v6m1 -18v18m0 3v3m2 -18v6m1 -9v3m0 3v3m2 -6v3m1 -3v3m2 -3v6m0 3v3m2 -15v3m1 -3v9m5 -9v12m4 -9v3m1 -6v3m9 -6v3m0 15v3m0 15v3m14 3v3m2 -48v3m0 15v3m0 6v3m6 72v3m2 -78v3m0 9v3m3 -45v3m0 27v3m0 63v3m8 -87v3m32 93v3m1 -15v3m5 -27v3m4 -54v3m4 48v3m5 -21v3m7 -3v3m1 0v3m7 12v3m1 6v3m5 -36v3m1 15v3m5 -9v3m9 6v3m0 12v3m1 -18v6m0 6v3m2 0v3m0 18v3m4 -54v3m9 18v3m0 6v3m2 -15v3m25 15v3m12 -15v3m1 -33v3m13 15v3m33 -48v3m54 -15v3m26 30v3m0 18v3m14 -24v3m4 33v3m6 -6v3m0 6v6m0 12v3m1 -114v3m16 36v3m2 15v3m6 -42v3m0 51v3m0 33v3m54 -90v3m7 9v3m21 -36v3m0 6v3m1 -12v3m0 3v6m0 3v3m0 3v3m1 -9v3m1 -21v27m0 3v3m0 3v9m2 -45v3m0 30v3m1 -36v3m0 6v6m0 6v3m0 6v6m0 12v3m0 21v3m1 -69v3m0 9v3m0 6v6m1 -30v12m0 3v3m0 6v6m0 6v3m0 3v3m1 -42v6m0 3v9m0 9v3m0 3v3m0 3v3m0 3v3m1 -51v3m0 3v6m0 30v12m1 -45v3m0 6v3m3 6v3m1 -33v3m0 3v3m0 3v6m0 3v3m1 -24v3m0 6v9m0 9v3m0 42v3m3 -69v3m0 15v3m1 -18v3m0 15v3m0 15v3m3 -39v3m9 45v3m5 -42v3m1 12v3m6 -15v3m8 27v3m1 27v3m19 -57v3m0 6v3m0 27v3m20 -45v3m0 15v3m0 15v3m6 -45v3m0 3v3m0 6v6m0 18v3m3 -33v6m4 48v3m5 -33v3m3 -30v3m1 30v3m3 -30v6m0 21v9m0 6v3m2 -54v3m6 0v3"/><path stroke="#00ccff" stroke-width="1" fill="none" d="M211.5 124v6m0 48v3m1 -60v3m1 0v3m0 66v3m1 -126v3m0 120v3m1 -126v6m0 111v6m3 -72v3m0 12v3m2 -12v3m0 6v3m0 39v3m1 -111v3m0 63v3m2 -66v3m0 96v6m0 12v3m1 -63v9m0 3v3m0 33v3m0 9v3m1 -54v3m1 -69v3m0 51v3m1 3v3m1 3v3m0 36v3m0 9v3m1 -120v3m0 96v3m1 -36v3m3 33v3m1 -3v3m0 12v3m1 -21v3m2 -66v3m0 9v3m0 57v3m1 -54v3m0 3v3m0 39v3m1 -105v3m2 57v3m0 51v3m1 -57v3m0 54v3m1 -123v3m0 51v3m0 6v3m0 51v3m1 -123v3m0 99v3m1 -105v3m0 99v3m1 -51v3m0 6v3m0 54v3m1 -57v6m1 30v3m1 -105v3m0 60v3m1 36v3m1 12v3m2 -117v3m0 3v3m0 39v3m0 54v3m1 -48v3m1 -6v3m1 39v3m1 -102v3m1 -6v3m0 54v3m0 57v6m1 -123v3m0 51v3m0 9v3m1 -6v3m1 39v3m0 6v3m1 -51v3m1 -69v6m0 114v3m1 -63v3m0 54v3m1 -63v3m1 -54v3m0 93v3m1 -105v6m1 -6v3m0 105v3m1 -42v3m1 -66v3m0 48v3m0 42v3m0 3v3m2 -6v3m0 9v3m0 3v3m1 -6v3m1 -54v3m0 48v3m1 -117v3m0 57v6m0 36v3m0 9v3m1 -3v3m1 -114v3m0 42v3m0 9v3m1 -12v3m0 45v3m1 -48v3m0 6v3m1 -12v3m0 45v3m1 -60v3m1 -45v3m0 54v6m0 30v3m1 -99v3m0 93v6m0 15v3m1 -111v3m0 84v6m0 3v3m2 -102v3m0 54v3m2 -54v3m0 27v3m0 12v3m1 -15v3m0 15v3m0 30v6m0 12v3m1 -45v3m1 -48v3m1 -24v3m0 21v3m0 30v3m0 45v6m1 -72v3m0 9v3m0 42v3m1 -69v3m0 54v3m0 18v3m1 -114v3m0 15v3m0 33v3m0 9v3m0 27v3m1 -99v3m0 27v6m0 15v3m0 9v3m0 30v3m1 -72v3m0 78v6m1 -105v3m0 21v3m0 18v3m0 42v3m0 6v3m1 -102v3m1 3v3m1 -12v3m0 9v6m0 60v3m0 21v6m1 -78v3m0 6v3m0 15v3m0 42v3m1 -93v3m0 3v3m0 6v3m0 18v3m1 -66v3m0 12v3m0 24v6m0 12v3m0 9v3m0 21v3m1 -87v3m0 12v3m0 6v3m0 21v3m0 24v3m0 6v3m0 3v3m0 18v3m1 -96v3m0 21v3m0 12v3m0 39v3m1 -57v3m0 39v3m0 6v3m1 -36v3m0 9v3m1 -45v3m0 24v3m0 9v3m0 9v3m0 3v3m0 9v3m1 -93v3m0 15v6m0 21v6m0 3v3m0 12v9m0 9v3m1 -114v3m0 24v3m0 42v3m0 3v3m1 -66v3m0 39v3m0 12v6m0 18v3m0 15v3m0 6v3m1 -78v3m0 15v3m0 15v3m0 6v3m0 3v3m0 3v3m1 -81v6m0 27v3m0 30v3m1 -51v3m0 30v6m0 21v3m0 9v3m1 -60v3m0 3v3m0 36v3m0 12v3m1 -102v3m0 6v6m0 24v3m0 3v3m0 18v3m1 -69v3m0 45v3m0 21v3m1 -21v3m0 6v3m0 15v3m1 -66v3m0 21v3m0 33v3m0 21v3m1 -90v3m0 33v3m0 9v3m1 -57v3m0 36v3m0 15v3m0 18v3m0 12v3m2 -108v3m0 3v3m0 6v3m0 6v6m0 12v3m0 42v3m0 15v3m1 -102v3m0 24v3m0 6v3m0 6v3m0 12v3m1 -54v3m0 9v3m0 54v3m0 6v3m0 3v3m1 -93v3m0 12v3m1 -24v3m0 102v3m1 -111v3m0 24v3m1 -15v3m0 6v6m0 57v3m0 6v3m1 -78v3m0 3v3m0 3v3m0 24v3m1 -54v3m0 24v3m0 42v3m1 -78v3m0 15v3m0 3v3m0 15v3m0 39v3m0 12v3m1 -96v3m0 15v3m0 27v3m0 3v3m0 15v3m1 -87v3m0 12v3m0 33v3m1 -54v3m0 21v3m0 18v6m0 54v3m0 3v3m1 -69v3m0 12v3m0 18v3m0 9v3m1 -72v3m0 24v3m0 6v3m1 -51v3m0 9v3m0 3v3m0 15v3m2 -24v3m0 15v3m1 -33v3m0 3v3m0 9v3m0 3v3m1 -33v3m0 15v3m0 3v3m0 9v3m0 51v6m1 -93v3m1 9v3m0 27v3m1 0v6m0 30v3m1 -75v6m2 6v3m0 60v3m0 6v3m1 -105v3m0 15v6m0 18v3m0 45v3m1 -84v3m0 6v3m0 84v3m1 -81v3m1 -27v3m0 6v3m1 30v3m0 48v3m0 3v3m1 -66v3m1 -33v3m1 0v3m0 18v3m0 3v3m1 -30v3m0 9v3m1 75v3m1 -72v3m0 57v3m1 6v3m1 -102v3m0 6v6m0 3v3m2 3v3m1 -15v3m0 15v3m1 -12v6m0 3v3m1 -33v3m0 3v3m0 21v3m1 -18v3m0 12v3m0 6v3m2 -33v3m0 9v3m1 -6v3m0 81v3m1 -114v3m0 21v3m1 21v3m1 54v3m1 -93v3m0 3v3m2 0v3m0 9v3m1 63v3m1 -84v6m0 6v3m1 -15v3m0 9v3m1 -12v3m0 21v6m1 -15v3m1 -24v3m0 9v6m0 63v3m1 6v3m3 -87v6m0 6v3m1 -18v3m0 3v3m0 3v3m0 63v3m1 -78v3m0 81v3m1 -96v3m0 3v3m0 9v3m0 63v3m1 -78v3m0 3v3m0 18v3m1 -15v3m0 6v3m0 57v3m1 -69v3m0 66v3m1 -96v3m0 12v3m0 9v3m1 -21v3m0 12v6m0 45v3m0 9v6m1 -72v3m0 9v3m0 39v3m1 -72v3m0 9v3m0 12v3m1 -24v3m0 15v6m1 -39v3m0 6v3m0 6v12m0 9v3m0 3v3m0 45v3m1 -90v3m0 9v3m0 9v3m0 9v3m0 36v6m1 -3v3m1 -84v3m0 21v3m0 6v9m0 45v3m1 -18v3m1 -60v3m1 -9v3m0 9v6m0 21v6m1 -51v3m0 12v6m0 51v3m0 9v3m1 -81v3m0 30v3m0 36v3m1 -81v3m0 21v3m1 -27v3m0 3v3m0 15v6m0 21v3m0 3v3m0 3v3m1 -54v12m0 6v3m0 39v6m1 -6v3m0 9v3m1 -87v6m1 9v3m0 24v3m0 6v3m0 3v6m0 6v3m1 -66v3m0 30v6m1 -33v6m0 3v3m0 15v3m0 12v3m0 6v3m0 9v3m1 -60v3m0 9v3m0 12v3m1 -9v3m0 3v3m1 -33v3m0 3v3m0 3v3m0 6v3m0 3v3m1 12v9m1 -57v3m0 3v3m0 9v6m0 6v3m1 -39v3m0 21v3m0 24v3m0 18v3m1 -69v3m0 3v3m0 30v3m0 21v3m1 -81v3m0 24v3m0 3v3m0 27v3m0 3v3m1 -18v3m0 3v3m1 -54v3m0 51v3m0 9v3m1 -18v3m0 9v3m1 -42v6m1 -36v6m0 3v3m0 12v3m0 21v3m0 6v3m0 9v3m1 -72v3m0 24v3m0 3v3m0 12v6m0 3v3m0 6v3m0 12v3m1 -45v3m0 6v3m1 -33v3m0 3v6m1 -36v3m0 72v3m1 -78v3m0 21v3m0 9v3m0 36v3m0 3v3m1 -72v3m0 12v3m0 3v3m1 -12v3m0 18v3m0 27v3m1 -78v3m0 24v3m0 12v3m1 -45v3m0 9v3m0 51v3m0 18v3m1 -87v3m0 24v3m0 51v3m1 -78v3m0 12v3m0 6v6m0 3v3m0 18v3m0 18v3m1 -57v3m0 12v3m0 3v3m0 6v3m1 -54v6m0 9v6m0 30v3m0 9v3m0 6v3m1 -57v3m0 21v3m0 9v3m0 3v3m1 -36v3m0 21v3m0 15v3m0 3v3m1 -75v6m0 9v3m0 15v3m0 3v6m0 27v3m1 -75v3m0 6v3m0 39v3m0 6v3m0 6v3m1 -93v3m0 3v3m0 12v6m0 69v3m1 -99v3m0 36v3m1 18v3m0 3v3m0 6v3m0 6v3m1 -36v3m0 27v9m1 -81v3m0 39v3m0 3v3m0 27v3m1 -93v3m0 24v3m0 3v3m0 3v3m0 33v3m0 9v3m0 3v3m1 -39v3m1 -54v3m0 9v3m0 6v3m0 18v3m0 27v3m0 3v6m1 -72v3m0 15v3m0 42v6m1 -57v3m0 45v3m0 15v3m1 -96v3m0 18v3m0 15v3m0 15v6m0 3v3m1 -45v3m0 15v3m0 30v3m0 6v3m1 -90v3m0 36v3m0 45v3m1 -84v3m0 36v3m0 21v3m0 3v6m0 9v3m1 -72v6m0 3v3m0 9v3m1 -48v3m0 27v3m0 6v3m0 9v6m1 -39v3m0 36v3m0 24v3m1 -30v3m0 21v3m0 3v3m0 6v3m1 -45v3m0 9v3m0 3v3m5 -51v3m0 45v3m1 -39v3m0 45v3m0 12v3m1 -78v3m0 39v6m1 -33v3m1 9v3m1 -33v3m0 9v3m1 -15v3m0 12v3m0 48v3m0 6v3m1 -105v3m0 57v3m1 -54v3m0 45v3m1 -66v3m0 3v6m0 27v3m0 30v3m1 -72v3m0 6v3m0 51v3m0 42v3m1 -108v3m0 21v3m0 12v3m0 9v6m0 48v3m1 -96v3m0 3v3m0 9v3m0 54v3m0 12v3m0 3v3m14 -30v3m0 3v3m0 15v3m1 -27v3m1 -18v3m0 9v3m0 9v3m0 3v3m1 -24v3m0 18v3m0 3v3m1 -15v3m0 3v3m1 -21v3m2 -15v3m0 9v3m0 6v3m0 12v3m1 -18v3m0 15v3m2 -24v3m1 -18v3m0 3v3m0 6v3m1 -18v3m0 3v6m0 6v3m1 -18v3m0 3v3m0 21v3m1 -15v3m1 -30v3m0 15v6m2 -9v3m0 15v3m1 -105v6m0 21v3m0 60v3m0 9v3m0 3v3m1 -90v3m0 21v3m4 99v3m6 -30v3m1 -114v3m1 42v3m3 -48v3m2 0v3m0 6v3m0 36v6m0 3v6m0 45v3m1 -105v9m0 21v3m0 9v3m0 9v6m0 3v3m0 6v3m0 3v3m0 9v3m0 6v3m1 -108v6m1 9v6m0 24v3m0 12v3m2 0v3m2 9v3m2 12v3m1 -48v3m1 -3v3m1 45v6m1 -42v6m0 33v3m1 -57v3m0 24v6m0 6v3m2 -27v3m0 18v3m0 9v6m1 -57v3m0 21v3m0 3v3m0 12v3m0 6v3m1 -63v3m0 30v3m0 6v3m0 3v6m1 -87v3m1 30v6m0 3v3m1 -42v3m0 51v6m0 27v3m0 3v3m1 -81v3m0 3v6m0 18v3m0 36v3m1 -93v9m0 72v3m0 3v3m1 -87v3m0 63v3m1 -81v6m0 33v3m0 9v3m0 3v3m0 3v3m0 30v3m0 6v3m1 -102v3m0 39v3m0 60v3m1 -96v3m0 21v9m0 6v3m0 24v3m0 12v3m1 -54v3m0 12v3m0 15v3m0 15v3m1 -102v3m0 6v3m0 6v3m0 15v3m0 3v3m0 30v6m0 6v3m0 6v3m1 -84v3m0 6v3m0 12v3m0 24v3m0 48v3m1 -108v3m0 3v3m0 21v3m0 9v6m0 6v3m0 36v3m1 -90v3m0 9v6m0 30v3m0 3v3m0 36v6m1 -99v3m0 15v6m0 36v3m1 -69v3m0 3v3m0 9v3m0 30v3m0 15v3m0 15v3m1 -93v3m0 3v3m0 30v3m0 6v6m0 3v3m0 6v3m0 15v3m0 3v3m0 12v3m1 -111v3m0 6v3m0 24v3m0 9v3m0 3v3m0 24v3m0 9v3m1 -102v3m1 -3v3m0 6v12m0 24v3m0 27v3m1 -75v3m0 3v3m0 9v3m0 72v3m1 -72v9m0 15v3m0 3v3m1 -54v3m0 6v3m0 12v3m0 6v3m0 6v3m0 63v9m1 -57v3m0 42v3m0 6v3m1 -108v3m0 24v3m1 -39v3m0 36v3m1 -45v6m0 3v6m0 6v3m0 6v6m0 21v6m1 -24v3m1 -30v3m0 6v3m0 6v3m0 9v3m1 -48v3m0 18v6m1 -3v6m0 21v3m1 -12v3m0 3v3m0 9v3m1 -51v3m0 27v3m0 9v9m2 -51v6m0 3v6m0 21v6m0 3v3m0 60v3m1 -105v3m0 15v3m0 6v3m0 72v3m1 -123v3m0 24v3m0 6v3m0 24v3m1 -45v3m0 9v6m0 3v9m1 -33v3m1 -3v3m0 27v3m0 15v3m0 45v3m1 -84v3m0 81v3m1 -117v3m0 15v3m0 3v3m0 90v3m1 -123v3m0 6v3m0 66v3m0 6v3m0 12v3m1 -90v3m0 6v6m0 42v3m0 3v6m0 21v3m1 -60v3m0 18v3m0 21v3m0 15v3m1 -114v3m0 9v6m0 9v3m0 9v3m0 3v3m0 24v3m0 12v3m1 -60v3m0 15v3m0 6v3m0 12v3m0 3v3m0 12v6m0 9v3m1 -99v3m0 78v3m1 -96v3m0 9v3m0 30v3m0 21v3m0 12v3m0 3v3m1 -75v3m0 12v6m0 3v3m0 24v3m0 24v3m1 -51v3m0 42v3m0 6v3m1 -48v3m0 15v3m0 3v3m0 12v6m0 6v3m1 -93v3m0 12v3m0 45v3m1 -78v3m0 48v3m1 -27v3m0 21v3m0 9v3m1 -66v3m1 15v3m0 48v3m1 -72v3m0 21v3m0 45v3m0 9v6m0 9v3m1 -102v3m0 75v3m0 6v3m1 -93v3m0 6v6m0 6v6m0 9v6m0 6v6m0 3v3m0 18v3m0 6v3m0 6v3m1 -93v3m0 57v6m0 27v3m1 -105v3m1 0v3m0 21v3m0 6v3m0 45v6m1 -72v3m0 12v3m0 6v3m0 21v3m0 3v3m0 3v3m0 3v3m0 15v3m1 -99v3m0 39v3m0 3v3m0 12v3m0 12v6m0 3v6m0 3v3m1 -78v3m0 33v3m0 9v3m0 12v3m0 15v3m1 -108v3m0 9v3m0 36v3m0 6v3m0 3v6m0 21v3m1 -87v3m0 3v3m1 -15v3m0 12v3m0 18v6m0 24v6m1 -72v3m0 36v3m0 3v3m0 27v3m0 9v3m1 -63v3m0 3v3m0 27v3m0 3v3m0 9v3m0 12v3m1 -102v6m0 12v3m0 27v3m0 3v6m0 39v3m1 -87v3m0 15v3m0 42v3m0 24v3m1 -105v3m0 57v3m0 9v6m0 3v3m1 -87v3m0 24v3m0 6v9m0 21v6m1 -24v3m0 54v3m1 -108v3m0 9v3m0 18v3m0 12v6m0 42v3m1 -102v3m0 9v3m0 6v3m0 9v3m0 15v6m0 33v3m0 3v3m0 3v3m1 -78v3m0 21v3m0 3v3m1 -51v3m0 87v3m1 -99v6m0 39v3m0 42v6m1 -54v3m0 24v3m0 18v3m1 -96v3m0 3v3m0 3v6m0 3v6m0 18v3m0 3v3m0 27v3m0 6v3m1 -30v3m0 6v6m1 -24v3m0 6v3m0 9v3m0 12v3m1 -93v6m0 24v3m0 27v15m0 21v3m1 -99v6m0 27v3m0 27v3m1 -60v3m0 33v3m1 -24v3m0 21v3m0 6v3m1 -57v3m0 39v3m0 45v6m1 -18v3m1 -54v3m0 9v3m0 3v3m0 18v3m0 21v3m1 -87v3m0 33v3m0 6v3m0 12v3m1 -69v3m0 12v3m0 27v3m0 6v6m0 33v3m1 -81v3m0 15v3m0 3v3m0 3v3m0 6v3m0 18v3m0 15v3m1 -75v3m0 6v6m0 6v3m1 18v3m0 9v6m1 -72v3m0 3v9m1 -3v3m0 33v3m0 6v3m1 0v3m1 -69v3m0 48v3m1 -48v3m0 27v3m0 24v3m0 9v3m1 -21v3m1 -24v3m0 12v3m0 30v3m5 -54v3m0 6v6m0 15v3m1 -36v3m0 6v3m0 12v3m0 15v3m1 -54v3m0 9v3m0 6v3m0 24v3m1 -36v3m0 21v3m1 -63v3m0 3v3m0 18v3m1 30v3m0 48v3m1 -54v3m0 9v6m2 -21v3m0 3v3m1 36v3m1 -36v9m1 0v3m2 -60v3m1 78v3m1 -60v3m0 18v3m1 30v3m0 6v3m1 -57v3m0 6v9m0 30v3m1 -51v3m0 12v3m0 30v3m1 -54v3m0 48v3m1 -54v3m0 6v3m1 39v3m1 -39v3m0 36v3m1 -45v3m2 -12v3m0 3v6m0 3v3m0 39v3m1 -36v3m1 21v3m0 9v3m1 -48v3m0 27v3m2 -48v3m0 15v3m1 -27v3m0 15v3m0 9v3m1 -30v3m1 24v3m0 30v3m1 -63v3m1 27v3m0 15v3m1 0v3m0 6v6m1 -66v3m0 60v3m1 -51v3m0 33v6m1 -24v3m0 21v3m1 -39v3m0 30v6m1 -60v3m0 48v3m1 -36v6m1 27v3m0 9v3m1 -15v6m1 -51v3m1 -6v3m0 51v3m1 -42v3m0 6v3m0 27v3m1 -51v3m0 51v3m1 -63v3m1 6v3m0 3v3m1 30v3m2 -30v3m3 6v3m2 -18v3m0 12v3m3 -15v6m1 -9v3m0 21v3m1 -21v3m0 3v3m0 6v3m1 -27v6m0 3v3m1 -33v3m0 24v6m1 -69v3m0 6v3m0 3v3m0 45v3m1 -75v6m0 9v3m0 6v3m0 21v3m1 -45v3m0 24v6m0 6v3m0 3v3m0 3v3m0 33v3m1 -69v3m0 6v3m0 6v3m0 3v3m0 6v3m0 24v3m0 3v3m1 -90v3m0 6v3m0 45v3m0 12v3m1 -60v3m0 9v3m0 36v3m0 21v3m1 -69v3m0 18v3m0 6v3m1 -66v6m0 6v3m0 30v3m0 15v3m0 3v3m1 -42v6m0 24v3m0 3v3m0 6v3m0 3v3m1 -78v6m0 15v3m0 30v3m1 21v3m1 -60v3m0 3v3m0 6v3m0 3v3m1 -51v12m0 30v3m0 39v3m0 3v3m1 -66v3m0 15v3m0 9v3m0 30v6m1 -93v3m0 66v3m0 21v3m1 -78v3m0 24v3m0 3v3m0 12v6m0 6v3m0 3v3m1 -51v3m0 57v3m1 -75v3m0 18v6m0 3v3m1 -48v3m0 12v3m0 48v3m1 -75v6m0 57v3m0 12v3m1 -33v3m0 33v3m0 6v3m1 -78v3m0 12v3m0 39v6m1 -24v3m0 3v6m1 -15v3m1 -60v3m0 42v3m0 9v3m0 12v3m0 18v3m1 -63v3m0 24v6m0 9v3m1 -45v9m0 12v3m0 6v3m0 12v3m0 6v3m1 -81v3m0 12v3m0 6v6m0 30v3m0 21v3m1 -96v3m0 15v3m0 9v3m1 -27v3m0 9v3m0 30v3m0 21v3m0 9v3m1 -72v3m1 12v3m0 54v6m1 -96v6m1 18v6m0 33v3m0 30v3m1 -81v6m0 3v3m0 3v3m0 12v3m0 12v3m0 12v3m1 -60v3m0 6v6m0 6v3m0 6v3m0 33v3m1 -21v3m1 -72v3m0 33v3m0 6v3m0 42v3m1 -90v3m0 30v3m0 21v3m0 15v3m1 -69v3m0 60v6m0 6v3m1 -90v3m1 18v3m0 6v3m0 3v3m0 18v3m1 -48v3m0 75v3m1 -18v3m2 9v3m1 -6v3m2 -87v3m0 6v3m1 -15v3m0 3v6m0 87v3m1 -99v3m0 72v3m1 6v3m1 -84v3m1 -3v3m0 75v3m0 6v3m0 3v3m1 -96v6m0 75v3m0 9v3m1 -24v3m1 3v3m1 -81v3m0 72v3m1 15v3m1 -96v3m0 66v3m0 27v3m2 -102v3m1 3v3m0 75v3m1 6v3m1 -96v3m0 90v3m0 3v3m2 -6v3m1 -9v3m0 9v3m1 -111v6m0 6v3m0 60v3m0 3v3m1 0v3m0 12v6m2 -18v3m1 -90v9m0 78v6m0 9v3m1 -6v3m0 15v3m1 -114v3m0 87v3m1 -96v3m0 78v6m1 6v3m1 -12v3m0 12v3m1 -96v3m0 69v3m0 3v6m0 3v6m1 6v3m1 -105v3m1 72v3m0 9v3m0 12v3m2 -111v3m0 102v6m1 -93v3m0 87v3m1 -15v3m1 -6v3m0 3v6m1 -12v3m1 18v3m1 -117v3m0 84v3m0 3v3m0 3v3m0 9v3m1 -33v3m0 18v3m0 9v3m1 -117v3m1 102v3m1 -33v3m0 21v3m1 -102v3m0 84v3m0 18v3m1 -33v3m1 -63v3m0 21v6m0 27v3m0 12v3m1 -87v3m0 9v3m0 9v3m0 3v3m0 21v6m1 -30v3m0 33v3m0 18v3m1 -72v3m0 21v3m0 12v3m0 42v3m1 -42v3m0 9v3m0 3v3m1 -6v3m0 15v3m1 -105v3m0 3v3m0 3v3m0 30v3m0 6v3m0 30v3m1 -81v3m0 9v3m0 3v3m0 12v6m0 24v3m0 12v6m0 6v3m1 -78v3m0 42v3"/><path stroke="#0000ff" stroke-width="1" fill="none" d="M211.5 130v3m0 15v9m0 9v3m0 30v6m1 -6v3m1 -63v3m0 3v3m0 51v3m0 12v3m1 -87v3m0 6v6m1 -6v3m0 3v3m0 12v3m0 9v3m0 18v3m0 3v6m1 -60v6m1 -24v3m0 39v3m0 24v3m0 6v3m1 -66v3m0 9v6m0 3v3m0 30v3m0 15v3m1 -66v6m0 54v3m0 3v3m1 -66v3m1 -6v3m1 -18v12m0 3v6m0 9v3m0 27v3m1 -42v3m0 6v6m0 33v3m0 3v3m0 3v3m1 -75v3m1 9v3m0 3v3m0 36v3m0 3v3m1 -69v3m0 24v6m0 24v3m1 -60v3m0 12v3m0 3v3m0 30v3m1 -54v3m0 21v3m1 -42v3m0 3v3m0 57v3m1 -69v3m0 18v3m0 6v3m1 -21v3m0 51v3m0 3v3m0 3v6m1 -81v3m0 18v3m1 -3v3m0 36v3m0 6v3m1 -69v3m0 66v3m1 -60v6m0 6v3m0 42v3m0 9v3m1 -75v3m0 6v3m0 36v3m1 -54v3m0 24v3m1 -18v3m0 15v3m1 -30v3m0 12v3m0 27v6m0 6v3m1 -78v3m0 18v3m0 45v9m1 -54v3m0 3v3m0 3v6m0 24v6m0 18v3m1 -69v15m0 33v3m1 -60v3m0 3v3m1 -6v15m1 -27v3m0 18v3m0 3v6m0 3v3m0 45v3m1 -72v3m0 15v3m0 36v3m1 -66v3m0 15v3m0 6v3m0 33v3m1 -66v3m0 3v3m0 3v6m0 36v3m0 6v3m1 -54v3m1 -12v6m0 60v3m1 -87v3m0 3v3m0 9v9m0 15v6m0 21v6m1 -60v3m0 3v6m1 -18v3m0 3v3m0 48v6m0 3v3m1 -54v3m0 9v3m0 30v6m0 9v3m1 -63v3m0 42v3m0 15v6m1 -75v9m0 60v3m1 -147v3m0 90v3m0 30v3m1 -51v3m0 6v3m0 48v6m1 -51v6m0 27v3m1 -36v3m0 3v3m0 18v3m0 6v3m0 3v3m0 6v3m1 -72v3m0 3v3m0 3v3m0 3v3m0 3v3m0 21v3m0 6v3m1 -63v3m0 3v3m0 3v3m0 45v3m0 6v3m1 -69v3m0 6v6m0 3v3m1 3v3m0 24v3m0 18v3m1 -144v3m0 117v3m0 18v3m1 -78v3m0 3v3m0 6v9m0 30v6m0 3v3m1 -66v3m0 18v3m0 3v3m1 -30v9m0 12v3m0 9v3m0 18v3m0 3v6m1 -66v3m0 6v6m0 12v3m0 24v3m1 -57v6m0 6v3m0 33v6m0 9v3m1 -63v3m0 18v3m0 30v3m0 3v3m0 9v3m1 -72v3m0 15v3m0 27v3m0 3v6m0 3v3m1 -144v3m0 69v15m0 6v3m0 27v6m0 3v3m0 6v3m1 -60v3m0 3v6m0 39v3m1 -60v3m0 48v3m0 12v6m1 -72v3m0 48v3m1 -57v3m0 9v6m0 33v6m1 -132v3m1 78v3m1 -15v3m0 6v3m0 15v3m0 30v3m0 3v3m1 -138v3m0 69v3m0 3v9m0 45v3m0 6v3m1 -141v3m0 69v3m0 18v3m0 27v3m0 6v9m1 -135v3m0 114v3m0 3v3m0 3v3m1 -75v3m0 12v3m0 15v3m1 -27v3m0 3v9m0 3v9m0 27v3m0 15v3m1 -150v3m0 6v3m0 81v3m0 24v3m0 6v12m1 -141v3m0 66v3m0 3v3m0 12v3m0 6v3m1 -102v3m0 51v3m0 15v3m0 30v3m1 -30v3m0 15v3m0 36v3m1 -132v3m0 66v3m0 3v9m0 9v6m0 18v6m1 -126v3m0 72v6m0 39v6m0 12v3m1 -141v3m0 3v3m0 18v3m0 45v3m0 6v3m0 6v3m0 24v3m0 3v3m1 -132v12m0 60v3m0 21v3m0 18v3m0 9v6m1 -132v3m0 84v3m0 30v3m0 18v3m1 -141v3m0 78v3m0 6v3m0 39v3m1 -84v3m0 18v3m1 -60v3m0 3v6m0 9v3m0 18v3m0 21v3m0 3v6m0 30v3m1 -129v6m0 3v3m0 6v3m0 54v3m0 6v6m0 30v6m0 3v3m1 -132v9m0 72v3m0 48v3m0 6v3m1 -147v3m0 42v3m0 42v3m0 33v3m1 -123v3m0 30v3m0 9v3m0 9v3m0 72v3m1 -9v3m1 -132v3m0 18v3m0 18v3m0 12v3m0 12v3m0 27v3m1 3v3m0 6v3m0 12v6m1 -42v3m1 -60v3m0 3v3m0 54v3m0 30v3m1 -129v3m0 60v3m0 51v3m0 6v6m1 -141v6m0 15v3m0 3v3m0 3v3m0 45v3m0 6v3m0 30v6m1 -21v3m0 3v3m0 12v3m1 -12v15m0 3v3m1 -138v3m0 129v3m0 3v3m1 -147v3m0 9v3m0 117v3m1 -126v3m0 18v3m0 57v3m0 33v6m1 -129v3m0 6v3m0 123v3m1 -141v3m0 6v9m0 6v3m0 69v3m1 -54v3m0 48v6m1 -102v3m0 15v3m0 108v3m0 15v3m1 -150v3m0 30v3m0 87v3m0 9v3m1 -138v3m0 6v3m1 -9v3m0 135v3m1 -138v3m0 6v3m0 69v3m0 33v3m0 3v3m1 -120v3m0 3v3m0 84v3m0 36v3m1 -147v3m0 9v6m0 111v6m0 3v3m1 -141v3m0 18v3m0 102v3m1 -117v3m0 15v3m0 90v3m1 -126v12m0 6v3m0 6v3m0 99v3m1 -123v3m1 -9v9m0 132v3m1 -144v3m0 48v3m0 90v3m1 -147v3m0 3v3m0 3v3m1 12v3m0 105v3m1 -9v3m0 3v6m1 -132v6m0 96v6m0 6v3m0 6v3m1 0v3m1 -141v6m0 123v3m0 9v6m1 -141v3m0 123v3m1 -120v6m0 102v3m1 -117v3m0 6v12m0 78v3m1 -102v3m0 3v3m0 9v3m0 99v3m1 -114v3m0 111v3m1 -123v12m1 -21v3m0 9v3m0 108v3m1 -120v3m0 3v3m0 18v3m0 102v6m1 -18v3m0 9v3m0 3v3m1 -147v3m0 9v3m0 6v3m0 3v3m0 105v6m1 -129v3m1 -15v3m0 9v3m1 -12v9m0 132v3m1 -150v3m0 39v3m0 81v3m0 3v12m0 3v3m1 -150v3m0 6v3m0 15v3m0 99v3m1 -129v3m0 3v3m0 120v6m0 6v3m1 -144v6m0 12v3m0 120v3m1 -135v3m0 114v3m0 15v3m1 -135v6m0 21v3m0 84v3m1 -123v6m0 114v3m1 -129v3m0 9v3m0 123v3m1 -144v3m0 9v3m0 114v6m0 3v6m1 -144v3m0 9v6m0 18v3m1 -24v3m0 3v3m0 3v3m0 96v3m0 12v3m1 -129v6m0 111v3m1 -129v9m0 3v3m0 120v3m1 -144v3m0 6v3m0 126v12m1 -117v3m0 3v3m0 87v6m1 -117v6m0 93v3m0 12v3m1 -132v3m0 3v3m0 3v6m1 -21v3m0 6v3m0 120v3m0 3v6m0 3v3m1 -138v3m0 123v3m1 -138v9m0 120v3m0 9v3m1 -138v6m0 6v3m0 30v3m0 69v3m1 -111v3m1 9v3m1 -27v3m0 9v3m0 6v3m0 12v3m0 87v3m1 -135v9m1 15v3m0 6v3m1 -18v6m0 3v3m0 102v3m1 -117v3m0 6v3m0 15v3m0 9v3m1 84v3m1 -144v3m0 9v3m0 111v6m0 3v3m1 -117v3m0 3v3m1 -33v3m0 12v6m0 108v3m0 6v3m0 3v6m1 -147v3m0 3v3m0 12v6m0 3v3m0 90v3m0 12v3m1 -135v6m0 3v6m0 3v3m0 9v3m0 3v3m0 9v6m0 75v3m1 -135v3m0 3v3m0 3v3m0 21v3m0 21v3m0 54v3m0 3v3m1 -123v3m0 3v3m0 114v3m0 3v6m1 -141v3m0 6v3m0 3v6m0 3v3m0 3v3m0 99v3m1 -138v18m0 6v3m0 108v3m0 3v3m1 -135v3m0 51v3m1 -66v3m0 9v3m0 6v3m0 99v6m0 18v3m1 -126v6m1 9v3m0 96v3m1 -138v3m0 6v3m0 12v3m0 93v3m0 9v3m1 -123v3m1 -18v3m0 3v3m0 3v3m0 117v3m0 6v3m1 -132v3m0 9v3m0 18v3m0 9v3m0 3v3m0 45v3m0 12v3m1 -129v3m0 3v6m0 3v6m0 3v6m1 -12v3m0 6v3m0 18v3m1 -51v3m0 3v3m0 3v3m0 27v3m0 90v3m1 -129v3m0 3v3m0 24v3m0 3v3m0 75v3m0 9v3m0 3v3m1 -144v6m0 3v3m0 6v3m0 36v3m1 -45v9m0 39v3m0 54v6m0 9v6m1 -126v3m0 108v3m0 6v3m0 6v3m1 -138v6m1 -15v3m0 3v3m0 21v3m0 84v3m1 -114v3m0 117v6m1 -135v3m0 15v3m0 3v3m0 111v3m1 -120v3m0 6v3m0 6v3m0 6v3m0 36v3m0 36v3m0 15v6m1 -132v3m0 3v3m0 39v3m0 72v3m1 -141v3m0 21v3m0 114v6m1 -132v3m0 12v3m0 9v3m0 78v3m0 9v6m1 -135v3m0 126v3m0 3v3m1 -147v3m0 3v3m0 18v6m0 99v9m1 -135v3m0 15v3m0 30v3m0 60v3m1 -120v6m0 18v6m0 9v3m0 54v3m0 12v6m0 6v3m1 -126v3m0 3v3m0 105v9m1 -117v6m0 6v3m0 3v9m0 42v3m0 24v6m0 3v3m0 9v3m0 15v3m1 -141v6m0 3v3m0 3v3m0 123v3m1 -141v6m0 24v3m0 12v3m0 45v3m0 9v3m1 -105v3m0 9v3m0 63v3m0 27v3m0 3v3m1 -126v3m0 3v6m0 12v9m0 45v3m0 6v3m0 24v3m1 -111v3m0 9v3m0 3v3m0 87v9m1 -120v3m0 3v3m0 3v3m0 3v3m0 99v3m0 3v3m1 -132v12m0 3v6m0 9v3m0 12v3m0 72v12m1 -129v12m0 3v3m0 27v3m1 -36v3m0 3v3m0 15v3m0 33v6m0 36v3m0 21v3m1 -138v3m0 6v6m0 30v3m0 21v3m1 -69v3m0 3v6m0 9v3m0 18v3m0 48v3m0 21v6m1 -126v3m0 3v3m0 6v3m0 9v3m0 9v3m0 24v3m0 42v6m1 -120v9m0 3v3m0 108v3m0 12v3m1 -144v3m0 6v3m0 21v3m0 99v3m1 -126v3m0 3v3m0 24v6m0 60v3m0 6v3m0 3v6m1 -129v6m0 6v3m0 66v3m0 9v6m0 12v3m0 9v3m0 15v3m1 -147v6m0 27v3m0 105v3m1 -144v3m0 6v6m0 105v6m0 12v3m1 -138v12m0 6v3m1 -27v3m0 3v6m0 3v6m0 105v6m0 15v3m1 -147v3m0 3v6m0 3v3m0 108v3m0 6v3m1 -123v3m0 78v3m0 9v3m0 12v3m1 -111v6m0 9v3m0 87v3m1 -117v3m0 12v3m0 3v3m0 6v3m0 3v3m0 54v3m0 21v3m1 -129v6m0 21v3m0 15v3m0 21v3m1 -60v3m0 96v3m0 9v3m1 -120v3m0 9v3m0 6v3m0 6v3m0 6v3m0 63v3m0 33v3m1 -150v3m0 6v3m0 3v3m0 6v3m0 30v3m0 60v3m1 -117v3m0 6v6m0 6v3m0 78v3m0 15v3m1 -129v3m0 18v3m0 3v3m0 27v3m0 81v3m1 -138v6m0 105v3m0 3v3m0 3v3m0 6v3m1 -141v3m0 12v3m0 3v3m0 15v3m0 81v3m1 -126v3m0 3v3m0 36v3m0 75v3m1 -99v3m0 18v3m0 45v3m1 -99v3m0 3v3m0 21v3m0 12v3m0 45v3m0 15v3m0 6v3m0 15v3m1 -18v3m0 3v3m0 3v6m0 6v3m1 -150v6m0 114v6m0 3v3m1 -132v3m0 9v3m0 12v3m0 24v3m0 81v3m0 3v3m1 -120v3m0 18v3m0 6v3m0 3v6m0 3v3m0 36v3m0 6v3m1 -120v3m0 3v3m0 27v3m0 30v3m0 21v3m0 6v3m0 12v6m0 15v3m1 -144v3m0 96v3m0 12v3m0 3v3m1 -123v3m0 12v3m0 66v3m0 27v3m0 9v3m1 -3v3m0 6v3m0 6v6m1 -54v3m0 24v3m0 21v3m1 -147v3m0 6v3m0 111v3m0 3v3m1 -105v3m0 90v3m0 3v3m0 9v3m0 3v3m1 -147v3m0 6v3m0 24v3m0 15v3m0 15v3m0 36v3m0 6v6m1 -120v6m0 3v3m0 105v3m1 -129v6m0 27v3m0 90v3m0 18v3m2 -150v6m1 -6v3m1 0v3m0 120v6m0 3v6m1 -135v3m0 3v3m0 18v3m1 -18v6m0 3v3m0 3v3m0 9v3m0 36v3m0 42v3m1 -132v6m0 3v9m0 24v3m0 21v3m0 30v6m0 15v3m0 6v3m1 -105v3m0 6v3m0 36v3m0 18v6m0 3v3m0 6v3m1 -108v3m0 111v3m1 -114v3m0 6v3m0 72v3m0 21v6m0 18v3m1 -147v3m0 3v6m0 6v3m0 102v3m1 -123v3m0 6v3m0 12v3m0 9v3m0 81v6m0 15v3m1 -141v3m0 18v3m0 96v6m0 9v3m1 -54v3m0 36v3m0 15v3m1 -27v3m1 -51v3m0 48v6m0 3v3m1 -132v3m0 36v3m0 75v3m1 -114v6m0 18v3m0 12v3m0 3v3m0 9v3m0 18v3m0 21v3m0 24v3m1 -66v3m0 51v3m1 -3v3m1 -114v3m1 18v3m0 18v3m0 57v3m0 9v3m1 -105v3m0 12v3m1 81v3m2 -135v3m1 36v3m2 90v3m1 -123v6m0 18v3m0 12v3m0 21v3m0 33v3m0 24v3m1 -135v6m0 12v3m0 12v3m0 6v6m0 21v3m0 36v3m1 -72v3m0 12v3m0 3v6m0 39v6m1 -111v3m0 9v3m0 3v6m0 9v9m0 15v3m0 48v3m0 3v6m0 6v3m0 6v6m1 -96v3m0 9v3m0 60v3m1 -123v3m1 21v3m0 3v6m0 15v3m0 18v3m0 6v3m0 9v3m0 6v3m0 9v3m0 12v6m0 3v3m1 -129v6m0 6v3m0 3v3m0 15v3m0 6v6m0 36v3m0 18v3m1 -123v3m0 6v3m0 6v3m0 3v3m0 6v3m0 15v9m0 3v3m0 39v3m0 9v3m0 3v3m1 -132v9m0 6v6m0 18v3m0 6v3m0 3v3m0 6v6m0 51v3m1 -69v3m0 6v9m0 3v3m0 6v3m0 3v3m1 -84v6m0 12v3m0 3v3m0 6v3m0 12v3m0 51v3m1 -99v3m0 24v3m0 6v3m0 6v9m0 30v3m0 15v6m0 18v3m1 -141v3m0 6v6m0 18v12m0 3v3m0 12v3m0 42v9m1 -111v9m0 12v3m0 6v12m0 63v3m0 9v3m0 9v3m1 -132v3m0 6v3m0 9v3m0 3v3m0 6v3m0 60v3m0 3v3m0 12v3m1 -114v6m0 21v6m0 3v3m0 21v3m0 27v3m0 9v6m1 -99v3m0 3v9m0 9v6m0 24v3m0 24v3m0 36v3m1 -141v3m0 6v3m0 6v6m0 9v3m0 3v3m0 24v3m0 33v6m0 12v3m1 -117v3m0 99v6m0 24v3m1 -96v3m0 12v3m0 27v3m0 6v3m0 21v3m0 6v3m1 -75v3m0 33v3m0 27v3m3 -78v3m2 -48v3m0 39v3m0 3v3m1 18v3m0 24v3m1 -90v3m1 6v3m1 3v3m0 12v3m0 48v3m0 27v3m1 -60v3m1 -78v3m0 108v3m1 -96v3m1 87v3m1 -66v3m0 69v6m1 -9v3m1 -66v3m1 27v3m0 48v3m0 9v3m1 -9v3m2 -117v3m0 15v3m0 6v6m0 3v3m0 12v9m0 21v6m0 6v3m1 -123v3m0 24v3m0 21v3m0 12v3m0 3v3m0 6v3m0 15v3m0 18v3m0 24v3m1 -120v3m0 27v9m0 6v3m0 21v6m0 3v3m1 -84v6m0 81v3m0 3v6m1 -126v3m0 6v3m0 3v3m0 39v3m0 36v6m0 9v6m0 12v3m0 9v3m1 -129v3m0 9v3m0 9v3m0 3v3m0 30v3m0 9v3m0 33v3m0 6v3m0 6v3m1 -117v3m0 12v3m0 3v6m0 48v3m0 3v3m0 30v3m1 -105v3m0 15v3m0 18v3m0 9v3m1 -96v6m0 21v3m0 63v6m0 15v3m1 -105v6m0 6v3m0 24v3m0 3v3m0 15v3m0 63v3m1 -138v3m0 18v3m0 15v3m0 3v3m0 6v3m0 6v3m0 51v3m0 6v3m1 -114v3m0 15v3m0 81v3m0 3v3m0 12v6m1 -132v3m0 3v3m0 90v3m0 9v6m1 -114v3m0 111v3m1 -120v3m0 12v3m0 6v3m0 45v3m0 18v6m0 3v3m1 -117v3m0 9v3m0 39v3m0 3v3m0 57v3m1 -123v3m0 30v3m0 48v3m0 27v3m0 6v3m1 -75v3m0 66v3m0 9v3m1 -21v3m1 -96v3m0 45v3m0 57v3m1 -135v3m0 39v3m0 27v3m0 18v6m1 9v3m0 9v3m0 12v3m1 -18v3m1 -120v3m0 18v3m0 21v3m0 21v3m0 15v3m0 18v3m1 9v3m1 -78v6m0 57v3m0 27v3m1 -42v3m0 12v3m0 3v3m1 0v3m0 12v3m1 -24v3m0 3v3m0 3v3m0 3v3m1 -69v3m0 18v3m0 36v3m0 9v3m1 -3v3m1 -123v3m2 -6v3m0 72v3m0 24v3m1 -9v3m1 -123v3m0 27v3m0 93v3m0 15v3m1 -141v3m0 3v3m0 45v3m0 63v6m1 -123v3m1 6v6m1 -21v3m0 117v3m1 -84v3m0 72v3m0 9v3m0 3v3m1 -129v3m0 132v3m1 -123v3m0 96v3m0 21v3m1 -12v3m1 -123v3m0 27v3m0 75v3m0 15v3m1 -102v3m0 93v3m1 3v3m2 -15v3m0 9v3m1 -27v9m0 9v3m1 -120v3m0 108v3m1 -114v3m1 102v3m0 3v3m1 -132v6m0 18v3m0 9v3m0 72v3m0 3v3m1 -105v6m0 117v6m1 -24v3m0 3v3m0 6v3m1 -27v3m0 3v3m0 15v3m1 -24v3m1 -123v3m0 33v3m1 69v3m0 6v6m1 -102v3m0 24v3m0 3v3m0 66v3m1 -114v3m0 105v3m1 3v3m1 -9v3m1 -117v3m0 108v6m0 3v3m0 3v3m0 9v3m1 -30v6m0 3v3m1 -123v3m0 108v3m0 12v3m1 -6v3m1 -9v3m1 -9v6m1 -9v3m0 15v3m1 -9v3m1 -57v3m0 45v3m0 21v6m1 -21v3m0 6v3m1 -96v3m0 93v3m0 3v3m1 -66v3m0 24v9m1 -93v3m0 84v3m1 3v3m0 3v6m0 12v6m1 -54v3m0 42v3m1 -66v3m0 18v3m0 15v3m0 12v3m1 -39v3m0 27v3m0 15v3m1 -81v3m0 51v6m0 9v3m1 -60v3m0 48v3m1 -63v3m0 24v3m0 15v3m0 3v3m1 -51v3m0 24v3m0 21v3m0 15v3m0 3v3m1 -90v3m0 51v3m0 6v3m1 -81v3m0 63v6m0 3v3m1 -117v3m0 30v3m0 51v6m0 3v3m0 12v6m1 -33v3m0 15v3m0 6v6m1 -99v3m0 54v6m0 6v6m2 -30v3m0 3v3m0 9v3m0 18v3m1 0v3m0 15v3m1 -21v3m0 3v3m1 -45v3m0 42v3m1 -90v3m0 33v3m0 12v3m0 21v6m0 6v3m1 -69v3m0 9v3m0 45v3m1 -63v3m0 45v3m0 6v3m0 3v3m1 -111v6m0 84v3m0 3v3m0 3v3m0 6v3m1 -21v3m0 3v3m0 12v3m1 -21v3m0 9v3m0 18v3m1 -123v6m0 54v3m0 3v3m0 27v3m2 -15v9m1 -93v3m0 27v3m0 54v3m0 6v6m1 -63v3m0 33v3m0 12v6m1 -78v3m0 54v3m0 6v3m0 3v6m0 24v3m1 -69v3m0 24v3m0 24v3m0 12v3m1 -135v3m0 39v3m0 18v3m0 24v3m0 3v6m0 12v3m0 3v3m1 -42v3m0 24v3m0 3v3m0 21v3m1 -111v3m0 60v3m0 9v6m1 -102v3m0 15v3m0 12v3m0 27v3m0 15v3m0 3v6m0 6v6m1 -75v3m0 57v3m0 6v6m0 3v3m0 18v3m1 -51v15m0 6v3m0 18v6m1 -135v3m0 18v3m0 3v3m0 33v3m0 6v3m0 3v3m0 6v3m0 18v3m0 21v6m1 -129v3m0 12v3m0 18v3m0 30v6m0 3v3m0 9v3m0 21v3m1 -138v3m0 3v3m0 3v6m0 42v6m0 27v3m0 3v3m0 6v9m0 30v3m1 -150v6m0 36v3m0 33v6m0 3v3m0 9v3m1 -36v3m0 9v3m0 9v6m0 12v3m0 6v3m0 3v3m0 9v3m0 6v3m1 -147v6m0 6v3m0 9v3m0 27v3m0 3v3m0 12v3m0 18v3m0 12v3m0 27v9m1 -138v3m0 9v3m0 9v9m0 15v3m0 9v3m0 3v3m0 12v3m0 6v3m0 6v3m1 -114v3m0 24v3m0 15v3m0 3v3m0 24v6m0 3v3m0 9v3m0 3v6m0 3v6m0 9v3m0 6v3m1 -96v3m0 9v6m0 6v6m0 9v6m0 15v9m0 9v3m1 -93v3m0 3v3m0 21v3m0 9v3m0 3v3m0 3v3m0 6v3m0 33v6m1 -90v3m0 3v3m0 15v3m0 18v6m0 18v3m0 6v3m1 -102v3m0 51v18m0 12v3m1 -45v9m0 6v6m0 6v3m0 3v3m0 18v3m1 -30v3m0 36v3m1 -36v3m0 3v6m0 3v3m1 -21v3m0 18v3m1 -24v3m0 24v9m1 -57v6m0 6v3m0 3v6m0 18v3m1 -33v6m0 18v3m0 3v3m0 3v3m1 -18v3m0 30v3m1 -69v3m0 12v3m0 24v3m0 18v3m1 -57v3m0 3v3m0 9v6m0 3v3m0 3v3m1 -39v6m0 3v3m0 3v3m0 6v3m0 21v3m1 -48v3m0 6v3m0 24v3m0 6v3m1 -54v3m0 3v6m1 -36v3m0 24v3m0 33v3m0 12v3m1 -45v6m0 3v3m1 -24v3m0 9v6m0 3v3m0 24v3m0 9v3m1 -66v3m0 12v9m0 18v3m0 3v6m1 -36v6m0 6v3m0 6v3m0 3v3m0 6v3m0 12v3m1 -90v3m0 24v3m0 3v6m0 21v3m1 -39v9m0 3v3m0 21v3m0 9v3m0 6v3m1 -57v6m0 12v3m0 21v3m1 -51v9m0 12v3m0 30v3m0 9v3m1 -63v3m0 6v3m0 12v3m0 18v3m1 -45v6m0 3v6m0 15v6m0 21v3m1 -81v3m0 18v6m0 12v9m0 30v3m1 -66v3m0 3v6m1 -30v3m0 12v3m0 3v3m0 6v6m0 6v3m0 9v3m1 -39v3m0 6v3m0 12v3m1 -51v3m0 33v3m0 12v3m0 6v3m1 -42v3m0 3v3m0 3v3m0 24v6m0 6v3m1 0v3m1 -57v3m0 3v6m0 24v3m1 12v3m1 -27v3m1 -18v6m0 30v3m0 6v3m1 -3v6m1 -60v3m0 3v3m0 21v3m0 15v3m0 6v3m1 -51v3m0 30v3m0 12v6m1 -60v3m0 27v3m0 6v3m1 -51v3m0 9v6m0 9v3m0 9v3m0 9v3m1 -48v6m0 6v3m0 15v3m0 9v3m1 -60v3m0 15v3m0 12v3m0 15v3m1 -57v3m0 18v6m0 9v3m0 15v3m0 12v3m1 -57v9m0 18v3m1 -45v3m0 18v3m0 9v3m1 -15v3m0 9v3m0 18v3m0 18v3m1 -51v6m0 21v3m1 -42v3m0 9v3m1 30v3m0 6v3m0 9v3m1 -12v3m0 6v3m1 -57v3m0 6v6m0 15v6m1 -42v6m0 12v3m0 3v6m0 3v3m0 3v3m1 -12v6m1 -18v3m1 21v3m1 -54v3m0 15v3m0 12v9m1 -27v6m0 30v3m1 -18v3m0 3v9m1 -33v3m0 12v3m0 6v3m0 9v3m1 -45v3m0 9v9m0 6v3m0 9v3m1 -21v6m0 9v3m1 -42v3m0 12v3m0 3v3m0 3v6m0 9v6m1 -42v3m0 6v3m0 3v3m0 12v3m0 6v3m0 6v3m1 -39v6m0 3v3m0 9v3m0 3v3m1 -135v3m0 78v3m0 18v6m0 39v3m1 -42v3m0 12v3m1 -15v6m0 3v3m1 -12v3m0 15v3m2 -45v3m0 12v3m0 15v6m1 -36v3m0 9v3m0 3v3m0 18v3m0 12v3m1 -141v3m0 33v3m0 69v6m0 6v3m0 12v3m1 -93v3m0 48v18m0 9v6m1 -21v3m0 15v6m0 9v3m1 -138v3m0 93v3m0 3v3m0 6v3m0 3v3m0 15v3m1 -102v3m0 54v12m0 3v3m0 12v3m0 6v3m1 -132v3m0 42v3m0 45v3m0 3v3m1 -15v3m0 3v3m0 33v3m1 -48v6m0 3v18m1 -117v3m0 3v3m0 54v3m0 21v3m0 9v6m0 3v3m0 3v3m1 -105v3m0 57v3m0 15v3m0 3v3m0 3v3m0 6v6m1 -126v3m0 102v9m0 3v3m0 3v3m0 3v3m1 -45v3m0 18v3m0 3v3m0 3v3m0 12v3m1 -120v3m0 24v3m0 3v3m0 54v3m0 9v9m0 12v3m1 -141v6m0 48v3m0 33v3m0 12v3m0 9v6m0 21v3m1 -141v12m0 96v6m0 9v3m0 6v3m1 -141v3m0 3v6m0 96v3m0 3v3m0 3v3m0 12v3m1 -123v3m0 93v3m0 3v3m1 -120v3m0 9v3m0 78v3m0 9v3m0 3v3m1 -114v3m0 9v3m0 87v6m0 9v6m1 -123v3m0 3v3m0 93v3m0 24v3m0 12v3m1 -132v3m0 51v3m0 12v3m0 18v3m1 -108v3m0 102v6m0 9v6m0 3v3m0 6v3m0 3v3m1 -69v3m0 30v3m0 9v3m1 -87v3m0 12v3m0 45v3m0 3v3m1 -96v3m0 87v3m0 24v3m1 -42v3m1 -81v3m0 87v3m0 3v3m1 -57v3m0 39v3m0 12v3m1 -111v3m0 87v9m0 3v3m0 3v3m0 6v6m1 -36v3m0 15v3m0 6v6m0 6v3m0 3v3m1 -54v6m0 3v9m0 15v3m1 -123v3m0 93v9m0 12v3m1 3v3m0 3v3m1 -135v3m0 81v3m1 18v3m0 3v3m0 3v3m0 6v3m1 -30v6m0 3v3m0 12v3m1 -36v3m0 9v3m0 6v3m0 15v3m0 6v3m1 -3v3m0 3v3m1 -42v3m1 -9v3m0 24v6m0 12v3m1 -141v3m0 69v3m0 3v3m0 6v3m1 9v3m0 3v6m0 30v3m1 -45v3m0 3v6m0 3v3m0 6v3m0 15v3m1 -36v6m1 -3v3m0 3v3m1 -39v3m0 12v3m0 12v6m0 3v3m0 6v3m1 -27v6m0 15v6m1 -129v3m0 75v3m0 18v3m0 3v3m0 3v3m0 3v3m1 -42v3m1 15v3m0 24v3m1 -15v9m1 -21v6m1 -21v3m0 21v3m0 3v3m0 3v3m1 -39v3m0 24v3m0 24v3m1 -45v3m0 9v3m1 -24v3m0 18v3m1 3v3m0 21v3m1 -60v3m0 3v6m0 3v3m0 6v3m0 12v3m1 -33v3m0 9v3m0 9v3m0 3v6m0 6v3m2 -24v3m1 9v3m1 -54v3m0 12v3m0 6v3m0 12v3m0 6v3m1 -126v3m0 81v3m0 36v3m1 -9v3m0 9v3m1 -48v3m0 15v3m0 3v3m0 6v3m0 9v3m1 -33v3m0 15v3m1 -33v3m0 33v3m1 -9v3m0 12v3m0 6v3m1 -51v3m0 6v3m0 9v3m0 3v6m0 3v3m0 6v3m1 -63v3m0 57v3m1 -18v3m1 3v3m0 9v3m2 -66v3m0 15v3m0 42v3m1 -27v3m1 -45v3m0 3v3m0 15v3m1 39v3m1 -30v6m1 -126v3m0 93v3m0 15v3m0 3v3m1 -117v3m0 99v3m0 6v3m1 -3v3m1 -30v3m0 15v3m0 6v6m1 -27v3m0 21v12m0 3v3m1 -138v3m0 114v3m0 3v9m1 -42v3m0 21v3m0 15v3m1 -12v6m1 -126v3m0 75v3m0 21v3m0 9v3m0 18v3m1 -33v3m0 15v3m1 -90v3m0 51v3m1 -84v3m0 9v3m0 54v3m0 12v3m0 3v3m0 15v6m0 9v3m1 3v3m1 -114v3m0 24v3m0 66v3m0 15v3m1 -147v3m0 21v3m0 60v3m0 30v3m0 18v3m1 -129v6m0 36v3m0 6v3m0 57v3m0 18v3m1 -21v3m0 9v3m1 -126v3m0 6v6m0 18v3m0 6v3m0 3v3m0 18v3m0 30v3m0 3v3"/><path stroke="#0033ff" stroke-width="1" fill="none" d="M211.5 136v3m0 6v3m0 12v3m0 6v3m0 24v3m1 -69v3m0 9v3m0 3v3m1 -15v3m0 3v3m0 24v3m0 15v3m1 -54v3m0 6v3m0 12v3m0 33v3m1 -33v6m1 -36v6m1 -3v3m0 9v3m0 9v3m1 -21v3m0 42v3m0 9v3m1 -57v3m0 6v3m0 12v3m0 30v3m1 -78v3m1 -3v3m0 6v6m0 9v3m0 39v6m1 -30v3m0 3v3m1 -39v9m0 48v6m1 -57v6m0 3v3m0 36v6m1 -51v6m0 12v3m0 21v6m0 12v3m1 -75v3m0 54v3m1 -54v6m0 9v3m0 27v3m0 18v3m1 -72v3m0 3v3m0 48v3m1 -60v3m0 6v3m0 15v3m1 -36v3m0 3v3m0 24v3m0 24v6m1 -63v3m0 9v9m0 30v3m0 6v3m1 -72v3m0 3v3m0 9v6m0 12v3m0 3v3m1 -24v3m0 42v6m1 -63v3m0 9v3m0 15v6m1 -33v6m0 15v3m1 -24v3m0 6v3m0 12v6m0 15v3m0 9v3m1 -27v3m1 -33v3m0 42v3m1 -57v3m0 24v3m0 30v3m1 -30v9m0 15v3m1 -54v9m0 18v3m0 27v3m1 -72v3m0 36v3m2 -39v3m0 6v3m0 24v3m0 24v3m1 -60v3m0 3v3m0 9v3m0 36v3m0 6v3m1 -138v3m0 69v3m0 27v3m0 21v3m0 3v3m1 -51v3m0 9v3m0 6v3m0 15v6m2 -57v6m0 27v3m0 9v3m1 -48v3m0 9v3m0 6v3m0 30v9m1 -69v3m0 3v3m1 42v3m2 -63v6m0 3v3m0 3v3m0 3v3m0 18v6m0 15v3m0 24v3m1 -75v6m0 12v3m0 45v3m1 -72v3m0 12v3m0 9v3m1 -3v6m0 15v6m1 -63v3m0 18v3m0 12v6m0 24v3m1 -57v3m0 51v3m1 -51v3m0 42v3m1 -129v3m0 117v3m2 -51v3m0 24v3m0 24v9m1 -132v3m0 63v3m0 57v3m1 -66v9m1 -6v3m1 63v3m1 -72v6m0 27v3m1 -27v6m1 -15v3m0 24v3m0 3v3m0 3v3m1 -54v3m0 15v3m0 3v3m0 6v3m0 9v3m1 -30v3m0 6v3m0 45v3m0 15v3m1 -81v3m0 15v3m1 -27v3m0 60v3m0 18v3m1 -78v3m0 24v3m0 24v3m1 -129v3m0 51v3m0 18v3m0 21v3m0 21v3m1 -54v3m0 6v3m0 48v3m1 -69v6m0 27v6m0 15v3m1 -39v3m0 3v3m0 27v9m0 3v6m1 -72v3m0 3v6m0 15v3m0 3v3m0 24v3m1 -66v6m0 6v3m0 48v6m1 -51v9m0 3v3m0 33v3m0 15v3m1 -15v3m1 -90v3m0 21v3m0 9v3m1 -87v3m0 63v3m0 3v3m0 51v3m0 6v3m1 -135v3m0 93v3m1 -36v3m0 3v3m1 -72v3m0 60v3m1 -63v6m0 54v3m0 6v3m0 3v3m0 6v3m0 30v3m0 3v3m1 -132v6m0 66v3m0 18v6m1 -93v3m0 63v6m0 6v6m0 6v3m0 30v3m0 6v3m0 3v3m1 -90v3m0 12v3m0 24v3m1 -78v3m0 12v3m0 24v6m0 27v3m0 24v3m1 -123v3m0 63v3m0 3v3m0 3v3m0 9v3m0 42v3m1 -132v3m0 57v3m0 9v3m0 39v3m1 -123v3m0 9v3m0 54v3m0 3v6m0 6v3m1 -72v3m0 6v3m0 18v3m0 45v3m1 -30v3m0 3v3m0 36v3m1 -48v3m0 3v3m0 6v3m0 27v6m0 3v3m1 -129v3m0 15v3m0 18v3m0 3v3m0 6v6m0 6v3m0 3v6m0 12v6m0 24v3m1 -108v3m0 12v6m0 9v3m0 21v3m0 6v3m0 18v6m0 24v3m1 -51v3m1 -78v3m0 3v3m0 60v3m0 6v3m0 9v3m0 12v3m0 12v3m1 -105v3m0 36v3m0 6v3m0 69v3m1 -144v3m0 120v3m0 3v3m1 -129v6m0 6v3m0 9v3m0 21v3m0 3v3m0 24v3m0 9v3m0 9v3m1 -108v3m0 48v3m0 30v3m0 24v3m0 3v3m1 -120v3m0 27v6m0 9v3m0 3v3m0 3v3m0 3v3m0 39v3m1 -117v3m0 9v3m0 12v3m0 36v6m0 33v6m0 12v6m1 -120v3m0 24v3m0 9v6m0 30v3m1 -78v3m0 114v6m1 -99v6m0 9v3m0 54v3m0 18v3m1 -129v3m0 69v3m0 36v6m1 -99v3m1 -3v3m0 78v3m0 39v3m1 -120v3m1 -15v3m0 12v3m0 27v3m0 18v3m1 -75v3m0 6v3m0 18v3m1 -9v9m0 78v3m1 -114v3m0 3v3m0 3v3m0 75v3m0 33v3m1 -72v3m0 51v3m0 6v3m1 -102v3m0 117v3m1 -132v3m0 102v3m1 -42v3m0 42v3m1 -99v3m0 6v3m0 81v3m1 -114v3m0 12v3m0 30v3m0 60v3m0 6v3m1 -120v3m0 3v3m0 63v3m0 36v3m1 -132v3m0 9v3m0 114v9m0 9v3m1 -129v3m0 111v3m1 -126v3m0 69v3m0 60v3m1 -150v3m0 12v3m0 9v3m0 96v3m0 12v3m1 -54v3m0 33v3m0 15v3m1 -144v3m0 15v3m0 15v3m0 18v3m1 51v3m0 9v6m1 -111v3m0 3v3m0 36v3m1 -60v3m0 18v3m0 108v3m1 -99v3m1 -33v3m0 15v3m0 87v3m0 6v3m1 -81v3m1 -51v3m0 12v3m0 105v3m0 15v3m1 -150v3m0 24v3m0 21v3m1 -45v6m0 102v3m0 21v3m1 -144v3m0 18v3m0 18v3m0 78v6m1 -120v6m1 12v3m1 -9v3m0 21v6m1 -30v3m0 9v3m0 93v3m0 12v3m1 -9v3m0 3v3m1 -18v3m1 -114v3m0 12v3m1 -30v3m0 120v3m0 6v3m1 -141v3m0 21v3m1 -24v3m0 9v3m0 3v3m2 6v3m0 12v3m1 -36v3m0 129v3m1 -126v3m0 120v3m1 -123v3m0 24v3m0 75v3m0 3v3m1 -108v3m0 21v3m0 87v3m1 -126v6m0 3v3m0 18v3m0 75v3m1 -99v3m0 3v3m0 84v3m1 -126v3m0 24v3m0 96v3m1 -111v3m1 -24v3m0 9v3m0 24v6m1 -33v3m0 18v3m0 6v3m0 87v3m0 9v3m1 -135v3m0 114v3m1 -114v6m0 36v3m0 60v6m0 3v3m1 -135v3m0 15v6m0 111v3m1 -123v3m0 18v3m0 9v3m0 93v3m1 -135v6m0 3v6m0 3v3m0 99v3m1 -111v3m0 12v3m1 -12v3m0 18v3m1 -45v6m0 6v3m0 105v3m1 -114v3m0 9v3m0 27v6m1 -63v3m0 18v3m0 6v3m0 15v3m0 72v3m0 6v3m0 3v3m1 -123v6m1 -24v3m0 9v6m0 105v3m0 9v6m1 -138v3m0 3v3m0 3v3m0 3v3m0 12v3m0 84v3m1 -117v12m0 3v3m1 -18v3m0 126v3m1 -132v3m0 3v3m0 33v3m1 -33v3m0 99v3m1 -120v3m0 3v3m0 9v3m1 -30v3m0 9v3m0 3v6m1 0v3m0 117v6m1 -132v3m0 27v3m1 -39v6m0 6v3m0 18v3m0 12v3m0 63v3m1 -114v6m0 6v3m0 87v3m1 -111v12m1 -18v3m0 18v3m0 99v3m1 -111v9m0 99v3m1 -126v3m0 12v12m0 15v3m0 78v3m0 12v3m1 -120v3m0 33v3m0 66v3m0 6v3m1 -138v3m0 36v3m0 69v3m0 6v3m1 -105v3m0 90v3m1 -96v3m0 9v3m0 24v3m0 63v3m0 6v3m1 -135v3m0 18v3m0 120v3m1 -144v3m0 12v3m0 12v3m0 15v6m0 81v3m1 -135v3m0 3v3m0 27v3m1 -36v3m1 0v3m0 3v3m0 3v6m0 9v3m1 -21v3m0 3v3m0 3v3m0 6v3m0 33v3m0 30v6m1 -114v3m0 9v3m0 3v3m0 12v3m0 60v3m0 12v3m0 6v3m1 -117v9m0 3v6m0 15v3m0 78v3m0 6v6m1 -132v9m0 3v3m0 15v3m0 24v3m0 57v3m0 6v3m1 -132v3m0 18v3m0 84v3m1 -108v3m0 3v3m0 102v3m0 3v3m1 -129v3m0 9v3m0 3v6m0 108v6m1 -129v3m0 3v3m0 3v3m0 6v3m0 6v3m0 75v3m1 -105v3m0 12v3m0 3v6m0 78v3m0 3v3m1 -117v3m0 3v3m0 3v3m0 24v3m0 15v3m0 39v3m0 9v6m1 -129v3m0 6v3m0 3v3m0 3v3m0 6v6m0 18v3m0 84v3m1 -135v3m0 3v9m0 24v3m0 21v3m0 9v3m1 -81v3m0 9v3m0 27v3m1 -51v3m0 12v6m0 3v3m0 93v3m0 9v3m1 -123v3m0 9v3m0 3v3m0 3v3m0 6v3m0 3v3m0 63v3m1 -87v3m0 6v3m0 18v3m0 18v3m1 -60v3m0 54v6m0 24v6m1 -102v3m0 18v3m0 3v6m0 6v3m0 6v6m0 15v3m1 -84v3m0 6v3m0 21v3m0 12v3m0 39v6m0 36v6m1 -144v3m0 24v6m0 3v3m0 15v3m0 39v3m0 3v3m0 18v3m1 -102v3m0 78v3m0 27v3m1 -54v3m0 18v3m0 12v3m1 -111v3m0 15v3m1 -9v3m0 9v3m0 12v3m0 69v3m1 -126v3m0 48v3m0 15v3m0 21v3m0 3v3m1 -84v3m0 21v3m0 9v3m0 21v3m0 6v3m0 15v3m1 -93v3m0 105v6m1 -120v3m0 27v3m0 87v3m0 3v3m1 -126v3m0 3v3m0 3v3m0 117v3m1 -126v3m0 18v3m0 3v3m0 60v3m0 6v3m1 -114v6m0 3v3m0 3v3m0 108v3m0 3v3m1 -123v3m0 6v3m0 81v3m1 -96v3m0 18v9m0 33v3m1 33v6m1 -93v3m0 78v3m0 6v6m1 -114v3m0 27v3m0 18v3m0 54v3m1 -75v3m0 60v3m1 -99v3m0 36v3m0 54v3m1 -105v3m0 15v3m0 78v3m0 6v3m1 -117v3m0 117v3m0 15v3m1 -117v3m0 9v3m0 39v6m0 12v3m0 12v6m1 -120v3m0 6v3m0 3v6m0 9v3m0 9v3m0 54v3m0 9v6m0 15v3m1 -138v3m0 6v3m0 12v3m0 3v3m0 51v3m0 27v3m1 -84v3m0 42v3m0 12v3m0 15v3m1 6v3m0 18v3m1 -117v6m0 18v3m0 66v3m1 -120v3m0 6v3m1 9v3m0 9v3m0 15v3m0 6v3m0 9v3m0 9v6m0 18v12m1 -120v3m0 33v3m0 12v3m0 15v3m0 12v3m0 27v3m1 -117v3m0 6v3m1 -9v3m0 15v3m0 48v3m0 39v3m1 -39v3m1 -54v3m0 3v3m0 6v3m0 12v3m0 24v3m0 15v6m1 -90v6m0 15v3m0 30v3m0 3v3m1 -75v3m0 60v3m0 12v3m0 21v3m1 -108v3m0 12v3m0 9v3m0 51v3m0 30v3m1 -123v3m0 3v3m0 3v3m0 24v3m0 15v3m0 57v6m1 -123v3m0 6v6m0 12v3m0 15v6m0 18v3m1 -72v3m0 6v3m0 36v3m0 39v3m0 3v3m0 21v6m0 9v3m1 -33v3m0 6v3m0 3v3m1 -108v3m0 24v3m0 99v3m1 -141v3m0 18v3m0 6v6m0 24v3m1 -63v6m0 9v3m0 6v3m0 3v3m1 -30v3m1 114v3m2 -129v3m1 6v3m0 15v3m1 -30v3m0 9v3m0 9v3m0 3v3m0 21v6m0 15v3m0 15v3m1 -78v12m0 18v6m0 6v3m0 12v3m1 -21v3m0 3v3m0 36v3m1 -99v3m0 3v6m0 12v3m0 12v3m0 6v6m0 24v9m0 6v3m0 3v6m1 0v6m1 -78v3m0 18v3m0 6v3m0 3v3m0 36v3m0 3v3m1 -123v3m0 15v3m0 39v3m0 6v3m0 6v3m0 18v12m0 6v3m1 -72v3m0 9v3m1 12v6m0 51v3m1 -3v3m1 -93v3m0 48v3m1 -93v3m0 45v9m0 24v3m0 30v3m1 -114v3m0 15v6m0 12v3m0 3v3m0 12v6m0 6v3m0 18v3m1 -93v3m0 48v3m3 60v3m5 -93v3m3 -24v3m0 12v3m0 27v3m0 9v3m0 9v3m0 9v3m0 12v3m0 6v3m0 3v3m1 -60v6m0 51v3m1 -102v3m0 30v3m0 63v3m1 -123v6m0 15v3m0 36v3m0 3v6m0 39v3m0 3v3m0 6v3m1 -120v3m0 3v3m0 27v3m0 9v3m0 9v3m0 48v3m0 24v3m1 -99v3m0 15v6m0 9v3m0 3v3m0 24v3m1 -108v3m0 39v3m0 39v3m0 15v6m1 -117v3m0 6v3m0 12v3m0 39v6m0 18v3m0 18v3m0 12v3m0 15v3m1 -141v3m0 6v6m0 3v3m0 21v3m0 60v6m1 -99v3m0 27v3m0 6v3m0 6v3m0 45v3m0 15v3m1 -39v3m0 3v6m1 -75v3m0 6v3m0 3v6m0 3v9m0 48v3m0 9v3m1 -126v3m0 9v3m0 9v3m0 21v3m0 12v3m0 24v3m0 9v3m0 3v3m1 -108v3m0 21v3m0 27v3m0 33v3m0 3v3m0 12v3m0 6v3m1 -129v3m0 12v3m0 3v3m0 9v3m0 12v6m0 6v3m0 6v3m0 42v3m0 21v3m1 -144v3m0 12v3m0 9v3m0 9v6m0 3v6m0 6v3m0 3v3m0 12v3m0 33v6m1 -123v3m0 6v3m0 3v3m0 12v9m0 3v3m0 12v3m0 3v6m0 6v3m0 33v3m0 21v3m1 -132v3m0 15v3m0 30v3m0 18v3m0 15v6m1 -96v3m0 12v6m0 30v3m1 -36v3m0 54v3m0 12v3m0 12v3m0 9v6m1 -105v3m0 6v3m0 39v3m0 3v3m0 12v3m0 12v3m0 6v6m2 -78v3m1 -6v3m1 45v3m0 12v3m0 33v3m4 -99v3m0 78v3m2 -102v3m1 93v3m1 -69v3m1 69v3m1 -99v3m2 -15v3m0 24v3m0 39v3m1 -90v3m0 84v3m0 3v3m1 -39v3m1 -63v3m0 126v6m1 -126v3m0 9v3m0 21v3m0 30v6m0 3v3m0 12v3m1 -75v3m0 30v3m0 6v3m0 9v3m1 -75v3m0 42v3m0 15v3m0 3v3m0 3v3m0 9v3m0 3v3m0 12v3m1 -42v3m0 18v3m1 -84v3m0 24v6m0 12v3m0 6v3m0 3v3m0 12v3m0 9v3m0 24v3m1 -120v3m0 30v3m0 3v12m0 3v6m0 3v9m0 12v3m0 27v3m1 -114v3m0 33v3m0 6v3m0 21v3m0 15v3m0 33v3m1 -84v3m0 12v9m0 9v3m0 6v3m1 -93v9m0 42v3m0 18v3m0 6v3m0 6v9m0 9v3m1 -90v3m0 9v3m0 36v3m1 -93v3m0 33v3m0 9v3m0 36v3m0 27v3m1 -99v3m0 15v3m0 21v3m0 36v3m0 12v3m0 6v3m1 -120v6m0 3v3m0 3v6m0 21v3m0 15v3m0 15v3m0 24v3m1 -90v3m0 3v3m0 21v3m0 3v3m0 27v6m0 48v3m1 -126v3m0 3v3m0 15v3m0 3v3m0 6v3m1 -54v6m0 30v3m0 3v3m0 45v3m1 -84v3m0 30v6m0 18v3m0 27v3m1 -111v3m0 21v3m0 24v3m0 9v3m0 21v3m1 -63v3m0 6v3m0 48v3m0 30v3m1 -117v6m0 30v3m0 3v3m0 30v3m0 21v3m0 3v6m1 -78v3m0 15v6m1 -9v3m0 27v3m1 -63v3m0 93v3m1 -105v3m0 21v3m0 75v3m0 3v3m1 -108v3m0 9v3m0 75v3m0 3v6m1 -66v3m0 60v3m0 6v3m0 3v3m1 -132v3m0 6v3m0 48v3m0 3v3m0 6v3m0 24v3m0 9v3m1 -120v3m0 117v3m0 9v3m1 -63v3m0 42v3m1 -78v3m0 3v3m0 66v3m1 -54v3m0 15v6m0 30v3m1 -117v3m0 114v3m0 15v3m1 -129v3m0 30v3m0 51v3m0 3v3m1 -102v3m0 54v3m0 24v3m0 15v6m1 -93v3m0 15v3m0 60v3m0 3v3m1 -96v3m0 3v3m0 12v3m0 12v3m0 3v3m0 15v3m0 42v3m1 -6v3m1 -111v3m1 9v3m0 30v3m0 60v3m1 -69v6m2 -39v3m0 21v3m0 72v6m1 -81v3m0 72v3m0 9v3m1 -93v3m0 72v3m0 3v3m1 0v3m0 9v3m1 -21v3m1 -72v3m1 -27v3m0 90v3m0 12v3m1 -126v3m0 27v3m0 72v6m1 3v6m0 3v3m2 -18v3m1 -123v3m0 117v3m0 3v3m1 -129v3m0 3v3m0 6v3m1 -18v3m0 9v3m0 6v3m0 36v3m1 -60v6m0 21v3m0 75v3m0 6v3m1 0v3m1 -69v3m1 -54v3m0 18v3m0 12v3m0 6v3m0 93v3m1 -138v3m0 27v3m0 75v3m1 -111v3m0 15v3m0 51v6m0 24v3m1 -87v3m0 18v3m0 3v6m0 6v3m0 9v6m0 24v3m0 6v3m0 9v3m1 -117v3m0 24v3m0 75v3m1 -87v3m0 78v3m1 -114v3m0 24v3m0 72v3m1 -90v3m0 66v3m0 15v3m1 -111v6m0 48v3m0 51v3m1 -99v3m0 21v3m0 12v3m0 12v3m0 15v3m1 27v9m0 18v3m1 -30v3m1 -36v3m1 33v3m1 -9v3m1 0v3m0 12v3m1 -18v3m0 3v3m0 6v3m1 -30v3m1 -45v6m1 -63v3m0 78v3m0 30v3m2 -63v3m0 18v3m1 -54v3m0 57v3m0 27v3m0 6v3m1 -99v3m0 42v3m0 3v3m0 27v3m1 -111v3m0 15v3m0 51v3m0 66v3m1 -120v3m0 27v3m0 51v6m0 21v3m1 -144v3m0 21v6m0 24v3m0 9v3m0 24v3m0 6v3m1 9v3m0 3v3m1 -96v3m0 51v3m1 -84v3m0 27v6m0 42v3m0 12v3m1 -96v3m0 9v3m0 18v3m0 12v3m0 48v3m0 9v6m1 -81v3m0 15v3m0 18v3m0 6v3m0 9v3m1 -93v3m0 3v3m0 21v3m0 9v6m0 21v3m0 12v3m1 21v6m1 -111v3m0 6v9m0 15v6m0 33v3m0 18v3m0 9v3m1 -111v3m0 36v3m0 39v3m0 27v9m1 -102v3m0 48v3m0 6v3m0 9v3m0 3v3m1 -90v3m0 87v3m0 3v6m0 6v3m1 -60v3m0 30v6m0 9v3m1 -108v3m0 9v6m0 6v3m0 15v3m0 51v3m0 3v3m1 -42v3m0 30v6m1 -96v3m0 39v3m0 27v3m0 3v3m0 12v3m1 -54v3m0 54v3m1 -75v3m0 3v3m0 42v3m0 6v3m0 3v6m1 -108v3m0 48v6m0 57v6m1 -48v3m0 21v3m0 9v6m1 -6v3m1 -42v3m0 6v3m0 12v3m0 6v6m0 6v6m1 -114v3m0 18v3m0 48v3m0 12v6m1 -81v3m0 21v3m0 54v3m0 12v3m1 -96v3m0 75v6m0 6v3m1 -108v3m0 12v3m0 30v3m0 51v3m1 -15v3m1 -99v3m0 84v9m0 9v3m0 6v3m1 -90v3m0 12v3m0 15v3m0 3v3m0 12v3m1 -45v3m0 6v3m0 3v3m0 18v3m0 3v3m0 21v3m0 9v3m1 -117v3m0 12v9m0 45v3m0 15v3m0 24v3m1 -126v6m0 3v3m0 9v3m0 3v3m0 15v3m0 6v3m0 30v3m0 15v9m0 12v3m1 -78v3m0 42v3m0 3v3m0 15v3m1 -102v3m0 30v3m0 24v3m0 12v3m0 18v3m0 3v3m1 -117v3m0 6v3m0 36v3m0 24v3m0 21v3m1 -105v3m0 18v6m0 3v3m0 45v3m0 9v3m0 12v3m0 6v3m1 -108v3m0 3v3m0 6v6m0 9v3m0 15v3m0 6v3m0 3v3m0 6v6m0 6v3m0 6v3m0 3v3m1 -111v6m0 3v3m0 12v3m0 24v3m0 6v6m0 15v6m0 6v3m0 18v3m0 12v3m1 -135v9m0 3v6m0 9v6m0 3v6m0 3v3m0 3v3m0 9v3m0 3v3m0 9v3m0 15v3m0 6v3m1 -111v3m0 48v3m0 9v3m1 -51v3m0 9v3m0 45v3m0 9v3m0 6v6m0 9v3m0 3v3m1 -111v3m0 30v3m0 15v3m0 12v12m0 18v6m0 24v3m1 -123v3m0 9v3m0 6v3m0 18v3m0 12v3m0 24v3m0 3v3m0 3v3m1 -57v3m0 30v3m0 3v3m0 3v3m1 -18v6m0 3v3m0 24v3m0 3v3m1 -63v3m0 3v3m0 12v3m0 3v3m0 18v3m1 -57v3m0 15v3m0 3v6m0 6v3m0 9v3m1 -27v9m0 6v6m0 6v3m0 3v3m1 -12v3m1 -21v3m0 3v3m0 6v3m1 -24v6m0 3v3m0 3v3m0 12v3m1 -48v3m0 12v3m0 3v3m2 15v3m1 -48v3m0 6v9m0 12v3m1 -24v3m0 3v3m0 6v3m0 15v3m0 3v3m1 -57v6m0 18v3m0 3v3m0 3v3m0 12v3m1 -30v3m1 -6v3m0 3v3m1 -21v3m0 6v9m1 -6v6m0 3v3m0 9v3m0 12v3m0 21v3m1 -45v3m1 -39v3m0 36v3m0 9v3m0 9v3m1 -48v3m1 -18v3m0 21v6m0 21v3m1 -24v6m0 3v3m1 -24v3m0 6v3m1 -15v3m0 9v3m0 21v3m0 15v3m1 -36v3m0 3v3m0 12v3m0 6v3m1 -63v6m0 36v3m1 -54v3m0 27v3m0 18v3m1 -63v3m0 24v9m0 6v3m1 -18v3m0 9v3m0 18v3m1 -36v3m0 36v6m0 9v6m1 -78v3m0 3v3m0 18v3m0 3v3m1 -12v6m0 45v3m1 -72v3m0 3v3m0 3v3m0 9v6m1 -33v3m0 9v3m0 6v3m0 6v3m0 12v3m0 3v6m1 -39v3m0 6v3m0 27v3m1 -60v3m0 9v3m0 9v9m0 18v6m1 -39v3m0 6v6m0 18v3m0 12v3m1 -60v3m0 9v9m0 21v6m0 9v3m1 -39v3m1 -12v3m0 9v3m0 42v3m1 -90v3m0 3v3m0 9v3m0 3v3m1 -18v3m0 12v3m0 18v6m1 -36v3m0 21v3m1 -18v3m0 3v6m0 36v3m1 -54v6m0 3v6m0 6v3m0 18v3m0 3v3m1 -45v3m0 9v3m0 9v3m0 3v3m1 -60v3m0 24v6m0 3v3m0 18v3m1 -6v6m0 3v3m0 6v3m1 -42v3m0 18v3m0 6v3m2 -30v3m1 -18v3m0 9v6m0 6v3m1 12v3m1 -30v3m0 6v3m0 15v3m2 -33v3m0 15v3m0 6v3m0 3v3m0 9v3m1 -39v6m1 18v3m1 -12v3m0 6v3m1 -9v3m0 3v3m3 -15v3m0 3v3m0 3v3m1 -93v3m0 27v3m0 18v6m0 3v6m1 3v6m0 6v9m0 9v3m1 -33v3m0 12v3m0 24v3m1 -126v3m0 69v3m0 6v3m0 3v3m0 3v3m0 3v3m0 3v3m1 -36v3m0 6v3m0 6v9m0 6v3m1 -24v9m0 3v3m1 -6v3m0 3v3m0 3v3m0 6v3m0 3v3m1 -87v3m0 33v3m0 6v3m0 15v3m2 -15v6m0 3v3m0 21v3m1 -42v6m0 3v3m0 3v6m1 -30v3m0 6v3m1 -102v3m0 78v3m0 12v3m0 15v3m0 3v3m1 -111v3m0 66v3m0 18v3m0 9v3m1 -108v3m0 15v3m0 60v3m0 9v3m0 39v3m1 -45v3m1 -105v3m0 6v3m0 102v3m1 -90v3m0 66v3m0 18v3m1 -123v3m0 48v3m0 51v3m0 9v3m0 3v3m1 -123v9m0 3v3m0 21v3m0 54v3m0 6v3m0 9v3m0 24v3m1 -147v3m0 6v6m0 90v3m1 -87v3m0 15v3m0 15v3m0 15v3m0 6v6m0 12v9m0 3v3m1 -111v3m0 9v3m0 72v3m0 6v6m0 12v3m0 24v3m1 -144v3m0 3v3m0 6v3m0 63v3m0 3v3m0 3v3m0 6v3m1 -99v3m0 9v3m0 15v3m0 27v3m0 6v3m0 9v3m0 15v3m0 3v3m1 -111v6m0 78v3m0 15v6m0 15v3m1 -87v3m0 48v3m0 9v9m0 3v3m1 -117v3m0 12v3m0 27v3m0 45v3m1 -33v3m0 30v3m0 9v3m0 9v3m1 -12v3m0 15v3m1 -93v3m0 33v3m0 21v3m0 3v6m0 9v3m1 -39v3m0 24v6m1 -24v3m0 18v3m1 -93v3m0 6v3m0 12v3m0 12v6m0 9v3m0 12v6m1 -99v3m0 51v6m0 18v3m0 6v3m0 21v3m1 -120v3m0 114v6m1 -36v3m0 12v3m0 12v3m0 24v3m1 -24v3m0 6v3m1 -51v3m1 -78v6m0 75v3m0 9v3m0 3v3m1 -102v3m1 72v3m0 12v3m0 36v3m1 -138v6m0 75v6m1 -9v3m0 21v3m0 6v3m1 -27v3m0 6v6m0 3v12m0 3v3m0 6v3m1 -129v3m0 72v3m0 3v6m0 6v3m1 -18v3m0 12v3m0 3v3m1 -9v3m0 15v3m1 -39v6m1 18v3m0 6v3m0 3v3m1 -36v3m0 6v6m0 15v6m1 0v3m1 -21v3m0 3v3m1 -27v3m0 15v3m0 9v3m1 -123v3m0 93v3m0 3v6m1 -102v3m0 72v3m1 0v3m0 27v3m1 -12v15m1 -24v3m0 15v3m0 3v6m1 -120v3m1 108v3m0 6v3m1 -33v3m0 24v3m1 -42v3m0 21v3m0 15v3m1 -9v3m0 18v3m1 -141v3m0 75v6m0 6v3m0 21v3m1 -117v3m0 87v3m0 18v3m0 3v3m1 -30v3m0 6v3m0 6v3m0 3v3m0 12v3m1 -48v9m0 18v3m1 21v3m1 -39v3m0 3v3m1 -108v3m0 87v3m0 12v3m0 12v3m1 -33v6m0 9v3m0 9v3m0 18v3m1 -48v3m0 3v3m1 42v3m1 -150v3m0 78v3m0 6v3m0 3v3m1 15v3m0 3v3m0 6v6m1 -30v3m0 15v3m1 -6v3m1 -3v6m1 -33v3m0 18v3m0 6v6m0 3v3m0 3v3m1 -45v6m0 24v3m1 -126v3m0 84v3m0 27v3m1 -3v3m0 12v3m1 -129v3m0 90v3m1 -99v3m0 102v3m1 -105v3m0 93v3m1 -9v3m0 15v3m1 3v3m2 -126v3m0 84v3m1 51v3m1 -30v3m0 27v3m1 -63v3m0 18v3m1 -102v3m0 105v3m1 -117v3m0 6v3m0 75v6m0 18v3m0 6v3m0 3v3m1 -27v3m0 12v6m1 -114v3m0 72v3m0 9v3m0 3v3m0 3v3m1 -111v3m0 39v3m0 3v3m0 6v6m0 27v3m0 39v3m1 -45v3m0 33v3m0 9v3m1 -108v3m0 48v3m0 6v3m1 -81v6m0 39v3m0 3v3m0 3v3m0 21v3m0 6v3m0 6v3m0 6v3m0 3v3m1 -111v3m0 51v3m0 12v3m1 3v3m0 12v6m0 3v6m0 18v3m1 -144v3m0 75v6m0 18v3m0 6v6m0 15v3"/><path stroke="#0099ff" stroke-width="1" fill="none" d="M211.5 139v3m0 51v3m1 -69v3m0 45v3m0 12v3m1 -66v3m0 3v3m0 36v3m1 -48v3m0 42v3m0 15v3m1 -18v3m1 -105v3m0 48v3m0 45v9m1 -9v3m0 15v6m1 -72v3m1 9v6m0 33v3m1 -6v3m1 -102v3m0 117v3m1 -72v3m1 12v3m2 57v3m1 -12v6m1 -69v3m1 6v3m0 54v3m1 -63v3m0 51v3m1 -57v3m0 54v3m1 -60v6m0 9v3m1 27v3m0 12v3m1 -54v3m0 27v3m1 -51v3m0 51v3m1 -54v3m0 9v3m0 51v3m1 -126v3m0 51v3m0 12v3m1 -72v3m0 111v3m1 -48v3m0 51v3m1 -123v3m0 57v3m1 54v3m1 -120v3m1 -6v3m0 54v3m0 15v3m0 24v3m1 -45v3m0 60v3m1 -6v3m1 -45v3m1 -78v3m0 99v3m1 -108v3m0 60v3m1 3v3m0 51v3m1 -69v3m0 42v3m1 0v3m0 15v3m1 -66v3m1 3v3m0 36v3m0 12v3m1 -123v3m1 -3v3m1 63v9m0 45v3m1 -69v3m0 69v3m1 -57v3m0 42v3m1 -54v3m0 57v3m1 -72v3m0 42v6m1 -36v3m1 -12v3m1 -3v3m0 3v3m1 -6v3m1 -3v3m0 3v3m0 30v3m1 -45v3m1 -9v3m1 -3v3m3 0v3m1 6v3m0 51v3m1 -57v3m1 -9v3m0 39v3m1 -108v3m0 57v3m1 -60v3m0 48v3m0 66v3m1 -60v3m0 33v3m3 -30v3m1 -78v3m0 114v3m1 -51v3m1 -72v3m0 57v3m0 15v3m0 42v3m1 -126v6m0 54v6m0 6v3m1 42v3m2 -18v3m1 -99v3m0 39v3m0 9v3m0 57v3m1 -72v3m0 6v3m1 36v3m1 -93v3m0 39v6m0 9v6m1 -72v3m0 12v3m0 9v3m0 9v3m1 -21v3m0 3v3m0 18v3m0 12v3m1 -39v3m0 6v3m0 6v6m0 51v3m1 -105v3m0 66v3m0 3v3m0 3v3m0 9v3m1 -93v3m0 54v3m0 3v6m0 6v3m1 -78v3m0 18v3m0 36v3m0 24v3m1 -45v3m0 6v6m1 -54v3m0 12v3m0 30v3m1 39v3m1 -90v3m0 21v6m0 12v3m0 9v3m0 36v3m0 9v3m1 -120v6m0 15v3m0 21v3m0 6v3m1 -33v3m0 12v3m0 51v6m1 -99v3m0 15v3m0 27v6m0 3v3m0 6v3m0 33v3m1 -99v3m0 9v3m0 18v3m0 12v3m0 6v3m0 3v3m0 30v6m0 9v3m0 3v3m1 -117v3m0 12v3m0 21v3m0 15v3m0 63v3m1 -108v3m0 21v3m0 30v3m0 9v3m1 -84v3m0 12v6m0 6v3m0 3v3m0 51v3m0 12v3m1 -108v3m0 12v3m0 15v3m0 9v3m0 3v3m0 15v3m0 12v3m0 12v3m1 -99v3m0 6v3m0 6v6m0 12v3m0 21v3m1 -66v3m0 42v3m0 6v3m0 18v3m0 27v3m1 -72v6m0 60v3m1 -75v3m0 9v3m0 3v3m0 24v3m0 9v6m0 3v6m1 -78v3m0 24v3m0 42v3m1 -87v3m0 6v3m0 30v3m1 -42v3m0 57v3m0 3v3m0 12v3m0 15v3m1 -99v6m0 3v3m0 36v3m0 3v3m0 39v3m2 -111v3m0 30v3m0 54v3m1 -96v3m0 30v3m1 -30v3m1 6v6m0 21v3m1 -39v3m0 42v3m0 12v3m0 9v3m0 30v3m1 -108v3m0 3v3m0 3v3m0 18v6m0 24v3m1 -39v3m0 63v3m1 -90v3m0 6v3m0 15v3m0 15v3m1 39v3m1 -69v3m2 -24v3m0 12v3m0 15v3m0 36v3m1 -81v3m0 102v3m1 -87v3m0 36v3m0 27v3m0 3v3m1 -99v6m0 21v3m0 66v3m1 -102v3m0 42v3m1 -48v3m0 6v3m0 24v3m0 3v3m0 12v3m1 -24v3m0 3v3m1 63v3m1 -99v3m0 75v3m0 6v3m1 -90v3m0 6v3m0 21v6m0 45v3m1 -93v3m0 18v3m0 3v3m1 -24v6m0 30v3m1 -36v3m0 24v3m0 60v3m1 -99v6m0 30v3m0 3v3m0 48v3m3 -87v3m0 15v6m0 60v3m1 -90v3m0 21v3m0 3v9m0 33v3m1 -60v3m0 9v3m0 63v3m1 -102v3m0 93v6m1 -66v3m1 -36v3m0 3v3m0 12v3m0 69v3m1 -108v3m0 12v6m0 78v3m1 -87v3m0 15v3m0 66v3m0 3v3m1 -99v3m0 15v3m0 12v3m1 -45v3m0 30v3m1 -36v3m0 15v6m0 69v3m1 -96v3m1 -9v3m0 21v3m0 81v3m1 -84v3m0 69v3m0 3v6m2 -93v3m0 9v3m0 9v3m0 3v3m0 54v9m1 -93v3m0 21v3m0 57v3m1 -96v3m0 21v3m0 3v3m1 60v3m0 3v3m1 -99v9m0 6v3m1 12v3m0 63v3m1 -99v3m0 3v3m0 12v3m1 -18v6m0 3v3m0 3v3m1 3v3m0 60v3m1 -99v3m0 6v3m0 3v6m1 -3v3m0 9v3m0 60v3m2 -87v6m1 87v3m1 -87v6m0 9v3m1 -6v3m0 57v3m1 -75v3m0 6v3m2 -27v6m0 3v3m0 21v3m0 57v3m1 -60v3m0 57v6m1 -105v3m1 18v3m1 -12v3m0 9v3m0 12v3m0 54v3m1 -69v3m1 -30v3m0 6v3m0 18v3m0 66v3m1 -90v6m0 81v3m1 -84v3m2 -9v3m0 21v3m1 -30v3m0 81v3m0 3v3m2 -87v3m0 9v3m0 6v3m0 3v3m1 -42v3m0 3v3m1 -12v6m1 18v3m1 -21v3m0 30v3m0 57v3m1 -87v3m0 18v3m0 45v3m0 3v3m0 3v3m1 0v3m1 -78v3m0 6v3m0 45v6m0 3v3m2 -90v3m0 24v3m1 -48v3m1 48v3m1 -30v3m0 3v6m0 3v6m1 -21v3m0 36v3m1 15v3m0 27v3m1 -84v3m0 33v3m0 60v3m1 -105v3m0 36v3m0 21v3m1 -63v6m0 39v3m1 -6v3m0 24v6m1 -84v3m0 6v6m0 30v3m0 36v3m1 -87v3m0 6v3m0 36v3m0 3v6m0 21v6m1 -60v3m0 3v3m0 15v3m0 21v3m0 12v3m1 -90v6m0 12v3m0 45v3m1 -60v3m0 45v6m1 -12v3m0 6v3m1 -57v3m0 3v3m1 -15v3m0 30v6m0 18v3m1 -36v3m0 33v3m1 -63v3m0 24v3m0 9v6m0 24v3m1 -66v3m0 3v3m0 9v3m0 42v3m1 -63v3m0 39v3m0 24v3m1 -87v3m0 21v3m0 9v3m0 9v3m0 6v3m0 9v3m0 9v3m1 -75v3m0 6v3m0 3v3m0 3v3m0 3v3m0 3v3m0 15v3m0 3v3m1 -66v3m0 12v3m0 6v3m0 3v3m0 21v3m0 24v3m1 -69v3m0 15v3m0 3v3m0 15v3m0 6v3m0 6v3m1 -69v3m0 15v3m0 12v3m0 30v9m1 -60v3m0 21v3m0 33v3m1 -93v3m0 9v3m0 12v3m0 30v3m0 21v3m1 -87v3m0 15v3m0 3v3m0 9v3m1 30v3m0 18v3m1 -51v3m0 3v3m0 6v3m1 -36v3m0 18v3m0 33v3m0 3v6m0 6v3m1 -105v3m0 15v6m0 42v3m0 24v6m1 -87v3m0 69v3m1 -90v3m0 3v3m0 3v3m0 72v3m0 6v3m1 -96v3m0 93v3m1 -45v3m0 27v3m1 -84v3m0 6v6m0 78v3m1 -15v3m1 -87v3m0 15v3m0 51v3m0 3v3m0 12v3m1 -93v3m0 3v3m0 21v3m0 9v3m0 9v3m1 -45v3m0 21v3m0 9v3m1 -48v3m0 3v3m0 3v3m0 36v3m1 -63v3m0 21v3m0 15v3m0 21v3m0 12v3m1 -75v3m2 3v3m0 27v3m0 27v3m0 9v9m1 -96v3m0 36v3m0 33v6m0 6v3m1 -78v3m1 -3v6m0 3v3m0 6v3m0 3v3m0 6v3m0 15v3m1 -60v3m0 48v3m1 -69v3m0 12v6m0 12v3m1 -33v6m0 18v3m0 24v3m0 9v3m0 9v3m0 18v3m1 -93v3m1 30v3m0 21v3m1 -66v3m0 36v3m0 3v3m0 6v3m0 18v3m0 15v3m1 -87v3m0 30v3m0 21v3m1 -12v3m0 9v3m0 21v3m1 -45v3m0 3v3m0 12v3m0 9v3m0 6v3m1 -93v3m0 45v6m0 15v3m1 -66v3m0 18v3m0 60v3m1 -90v6m0 21v3m0 33v3m0 18v3m1 -51v3m0 3v3m0 6v6m1 -39v3m0 3v3m5 -18v3m0 15v3m0 6v3m0 3v3m0 21v3m1 -27v3m1 -27v3m0 3v3m0 9v3m1 6v3m0 9v6m1 -45v3m0 9v3m0 24v6m1 -60v9m0 15v6m0 30v3m0 3v3m0 9v3m1 -69v3m0 12v6m0 15v3m0 18v3m0 9v3m1 -33v3m0 9v3m0 6v3m1 -75v3m0 12v6m0 48v3m0 9v3m0 6v3m0 3v3m1 -105v3m0 3v3m0 3v3m0 15v3m0 18v3m1 -48v3m0 18v3m1 -27v3m0 57v6m1 -57v3m0 6v3m0 21v3m0 21v6m0 12v3m1 -75v3m2 51v3m1 15v3m9 -27v9m0 3v3m0 3v6m1 -36v3m0 9v3m0 6v3m0 9v9m1 -21v3m0 12v3m1 -18v3m0 15v3m1 -51v3m0 33v6m0 9v3m1 -27v3m0 3v3m0 3v3m1 -27v3m0 27v3m1 -21v3m0 18v6m2 -39v3m0 3v3m0 6v3m0 9v3m1 -27v3m0 6v3m1 15v3m1 3v3m1 -45v6m1 15v3m0 3v3m1 -24v3m0 6v3m0 15v6m0 3v3m1 -54v3m1 6v3m0 3v3m0 6v3m0 15v3m1 -54v3m0 33v6m0 6v3m1 -84v3m0 9v3m0 3v3m0 6v3m0 3v3m0 9v3m0 3v6m0 18v3m0 9v3m0 6v3m1 -117v3m0 3v3m0 6v3m0 18v6m0 9v3m0 3v9m0 6v3m0 27v6m2 18v3m2 6v3m12 -60v3m1 -57v3m0 6v3m0 30v3m0 21v3m0 24v3m1 -69v3m0 15v3m2 -51v3m0 39v3m0 3v3m0 39v3m4 -48v3m0 6v3m0 15v3m1 -24v3m1 -12v6m0 30v3m1 -39v3m0 12v3m0 12v3m1 9v3m1 -48v3m1 -3v3m1 27v3m0 15v3m1 -18v3m1 -30v3m0 9v3m1 -24v3m0 9v6m0 33v3m1 -108v3m0 66v3m0 30v6m1 -111v3m0 60v3m0 24v6m0 9v3m1 -75v3m0 24v3m0 18v3m0 27v3m1 -114v3m0 27v3m0 51v3m0 18v3m1 -93v3m0 9v3m0 3v3m0 9v3m0 21v3m0 6v3m0 12v6m1 -99v3m0 15v3m0 21v3m0 6v3m0 15v3m0 9v3m0 3v3m0 3v3m0 12v3m0 6v3m1 -111v3m0 3v3m0 15v3m0 12v6m0 6v3m0 24v3m1 -75v3m0 15v3m0 24v3m0 54v3m1 -81v3m1 -27v3m0 21v3m0 21v3m0 15v3m0 21v3m1 15v3m1 -81v3m0 9v3m0 3v3m0 3v3m0 18v3m0 9v3m1 -54v3m0 36v3m0 9v3m1 -72v3m0 12v3m0 9v3m0 15v3m0 30v6m1 -108v3m0 9v6m0 15v3m0 30v3m0 6v9m0 15v3m1 -108v6m0 6v3m0 9v6m0 27v3m0 9v3m0 9v3m0 27v6m1 -75v3m1 -36v3m0 30v3m0 36v6m0 12v3m0 3v3m1 -111v3m0 33v3m0 6v6m0 21v3m1 -18v6m0 18v3m0 3v9m1 -93v3m0 30v3m0 21v3m0 3v3m1 -57v6m0 15v3m0 6v3m0 12v3m0 39v3m0 15v3m1 -111v3m0 6v3m0 18v6m1 -45v6m0 15v3m0 18v3m0 9v3m0 6v3m1 -33v3m0 6v3m0 6v3m1 -48v3m0 9v6m0 6v3m0 27v3m1 -33v3m1 -3v3m0 9v3m1 -42v3m0 21v3m2 0v3m0 18v3m0 9v3m0 54v3m1 -102v3m0 6v3m0 9v3m0 12v3m0 60v3m1 -117v3m0 24v3m1 -33v3m0 24v3m0 3v3m0 24v3m1 -51v3m1 9v3m0 87v3m1 -111v3m0 15v3m1 -24v3m0 6v3m0 24v3m1 -30v3m0 9v3m0 33v3m0 45v3m0 6v3m1 -102v3m0 3v3m0 3v3m1 27v3m0 51v3m1 -117v3m0 24v3m0 3v6m0 9v3m0 66v3m1 -105v3m0 33v3m0 12v3m1 -24v3m0 6v6m0 45v3m1 -90v3m0 39v3m0 18v3m0 15v3m0 9v6m1 -120v3m0 6v3m0 15v3m0 27v3m0 12v3m0 30v3m1 -84v3m0 51v3m0 9v6m0 6v3m1 -63v3m0 6v3m1 -48v3m0 63v3m0 9v3m0 9v3m1 -3v6m1 -102v3m0 6v3m0 3v3m0 3v3m0 3v3m0 45v3m0 9v6m1 -72v3m0 42v3m0 27v3m0 9v3m1 -102v6m0 75v3m0 9v3m0 6v3m1 -108v3m0 3v3m0 24v3m0 42v3m0 21v6m1 -69v3m1 -27v3m0 66v3m1 -84v3m0 3v3m2 24v3m0 30v3m0 3v3m0 15v3m0 12v3m1 -84v3m0 60v6m1 -45v3m0 9v6m0 12v3m0 21v3m1 -111v3m0 24v6m0 6v9m0 3v3m0 21v6m0 3v3m0 6v3m1 -6v6m0 12v3m1 -66v3m0 63v6m1 -117v3m0 21v3m0 18v3m0 6v3m1 -33v3m0 9v3m0 63v6m0 3v3m1 -117v3m0 6v3m1 6v3m0 66v9m0 9v3m1 -102v6m0 9v3m0 78v3m0 3v3m1 -81v6m0 3v3m1 -21v3m0 3v3m0 6v3m0 9v3m0 6v3m0 6v3m0 9v3m0 21v3m0 6v3m1 -111v3m0 12v3m0 9v3m0 3v3m0 3v3m0 48v3m0 9v3m1 -99v12m0 3v3m0 57v3m0 12v3m0 3v3m1 -84v3m0 27v3m0 18v3m1 -54v3m0 18v3m0 15v3m0 6v3m1 -60v3m1 0v3m0 24v3m0 18v3m0 36v3m1 -78v3m0 6v3m0 15v3m0 24v3m1 -84v3m0 18v6m0 45v3m0 3v6m0 21v3m1 -90v3m0 15v3m0 6v3m0 9v6m0 39v3m1 -60v3m0 42v3m0 6v3m1 -105v3m0 18v6m0 3v3m0 39v3m0 15v3m1 -78v3m0 9v3m0 6v3m0 30v3m1 -42v3m0 63v6m0 18v3m1 -105v3m0 24v3m0 36v3m1 -84v3m0 36v3m0 21v3m1 -63v3m0 3v3m0 3v3m0 6v3m0 24v3m0 21v3m0 9v3m1 -78v3m0 24v3m0 30v3m0 3v3m0 3v3m0 6v3m1 -99v3m0 21v3m0 69v6m1 -78v3m0 54v6m0 3v3m1 -24v3m0 6v3m0 15v3m1 -96v3m0 9v3m0 69v3m1 -78v6m0 15v3m0 15v3m0 6v6m0 12v3m0 6v3m1 -78v3m0 33v3m0 3v6m1 -21v6m0 3v3m0 24v6m1 -63v3m0 30v3m0 24v3m0 3v3m0 9v3m0 6v3m1 -93v3m0 30v3m0 6v3m0 12v3m0 3v3m0 9v3m1 -84v3m0 27v9m0 12v3m1 -63v3m0 3v3m0 15v6m0 3v3m0 6v3m0 45v3m1 -81v3m0 21v3m0 15v3m0 18v3m0 3v3m1 -69v3m0 6v3m0 9v3m0 9v6m1 -45v3m0 3v3m0 6v3m0 6v3m0 6v3m0 3v3m0 18v3m1 -42v3m0 12v3m0 21v6m1 -63v6m0 9v3m1 -18v9m0 60v3m1 -66v3m0 6v3m0 9v3m0 27v3m0 9v3m3 -78v3m1 -6v6m0 99v3m1 -111v3m0 6v3m0 9v3m0 3v3m0 30v3m1 -63v3m0 39v3m1 -42v3m0 15v6m0 9v3m0 3v3m0 21v3m1 -54v3m0 33v3m0 18v9m0 3v3m1 -30v3m0 24v3m1 21v3m1 -33v3m1 -9v3m0 12v3m0 15v3m0 3v3m1 -42v6m1 30v3m1 -27v6m0 9v3m0 12v3m1 -57v3m0 15v3m1 -18v6m0 3v3m1 -3v3m1 -15v3m0 3v3m1 6v6m1 -3v3m1 -3v3m1 -18v3m0 9v3m0 33v6m1 -39v3m0 33v3m2 -42v3m0 36v3m1 -48v6m1 -9v3m0 42v3m1 -36v6m0 21v3m1 -3v6m1 -51v3m0 15v3m0 21v3m2 -42v3m1 -6v3m0 6v3m0 9v3m0 27v3m2 -3v3m1 -51v6m0 18v3m0 9v3m0 9v3m2 6v3m1 -60v3m1 -3v3m0 12v3m0 24v3m1 -27v3m0 33v3m1 -15v3m1 -30v3m0 24v3m0 6v3m1 -18v3m1 -39v3m0 3v3m0 39v3m1 -54v3m0 45v3m1 -30v3m1 -9v3m0 36v3m1 -63v3m0 12v3m1 -12v3m0 39v3m0 9v3m1 -51v3m0 6v3m1 -18v3m0 3v6m1 39v3m1 -21v3m0 3v3m1 -21v3m0 15v3m0 15v3m1 -39v3m0 30v3m1 -42v3m0 30v3m0 6v3m1 -30v3m0 6v3m1 -21v6m0 3v3m1 -51v3m1 45v3m1 -9v3m2 0v3m1 -15v3m0 3v3m0 9v3m2 -93v3m0 21v3m0 6v3m0 60v3m1 -66v3m0 57v3m1 -99v3m0 60v3m0 21v3m0 6v3m0 3v3m1 -75v3m0 9v3m0 21v3m0 3v9m1 -57v3m0 30v3m0 18v3m1 12v3m0 12v3m1 -87v3m0 57v3m1 -66v3m1 66v3m1 -51v3m0 48v3m0 15v3m0 3v3m1 -99v3m0 24v9m0 21v3m1 -81v3m0 15v3m0 9v3m0 6v3m0 3v3m0 33v6m1 -42v3m0 39v6m1 -87v3m0 69v3m1 -54v3m0 66v6m1 -90v3m0 9v3m0 12v3m0 27v3m0 6v3m1 -72v3m0 9v3m1 -18v6m0 45v3m0 30v3m1 -90v3m0 12v6m0 24v3m0 6v3m0 9v3m0 12v3m0 6v3m1 -12v3m0 6v3m1 -90v3m1 24v3m0 57v6m1 -69v3m0 33v6m0 12v3m0 6v3m2 -51v3m0 42v6m1 -60v3m0 6v3m0 42v3m0 3v3m1 -27v3m1 -45v3m0 12v3m0 3v3m1 -48v3m0 69v3m0 15v3m1 -9v3m1 -54v3m0 24v3m0 6v3m0 12v3m0 3v3m1 -93v3m0 33v3m0 42v3m0 6v3m0 3v3m1 -87v3m0 3v3m0 9v3m0 45v3m0 3v3m1 -90v3m0 6v6m0 3v3m0 39v3m0 24v3m1 -84v3m0 99v3m1 -102v3m0 24v3m0 30v3m1 -30v6m0 33v3m1 -72v3m0 21v6m1 -21v3m0 18v6m0 33v3m1 -75v3m0 102v3m1 -120v3m0 6v3m0 3v3m0 39v3m0 12v3m1 21v3m1 -21v9m0 3v3m0 3v3m1 -21v3m0 12v3m0 3v3m1 -18v3m1 -75v3m0 60v3m0 6v3m1 -81v3m0 87v6m1 -90v3m0 72v3m0 9v3m0 6v3m1 -108v6m1 -3v3m0 3v3m1 -6v3m0 84v3m2 -93v3m0 81v3m0 6v3m1 -99v6m1 78v3m1 -81v3m1 -9v3m0 75v3m0 12v3m2 -6v3m1 -93v3m0 84v3m1 -93v3m0 87v3m0 9v3m1 -105v3m0 99v3m1 -6v3m1 -18v9m1 -90v3m0 3v3m0 81v3m1 -96v6m0 96v3m1 -105v3m0 108v6m1 -111v3m1 96v3m1 -21v3m0 9v3m1 -93v3m1 111v3m1 -54v3m0 15v3m1 -93v3m0 6v3m0 84v6m0 3v3m0 3v3m1 -33v3m0 33v3m1 -120v3m0 3v3m1 81v3m1 18v3m2 -30v3m0 6v6m1 12v6m1 -6v6m1 -117v3m0 108v3m1 -105v3m1 87v3m0 9v3m2 -111v3m0 87v3m1 -12v6m0 18v3m1 -27v6m2 9v6m1 -96v3m0 93v6m1 0v3m1 -30v3m0 30v3m1 -117v3m0 81v3m0 9v3m1 -15v3m1 -78v3m0 96v3m1 -102v3m0 21v3m0 57v3m1 -99v3m0 3v3m0 3v3m0 72v3m0 3v3m0 3v3m1 -99v3m0 9v3m0 9v3m0 36v6m0 6v3m1 -78v3m0 12v6m0 3v3m0 9v3m0 3v3m0 15v6m0 9v3m0 3v3m0 21v3m1 -39v3m0 3v3m0 18v3m1 -87v3m0 9v3m0 6v3m0 3v3m0 9v3m0 18v6m0 15v3m0 12v3m1 -105v3m0 18v3m0 18v6m0 12v3m0 9v3m0 27v3m1 -90v3m0 45v3m0 3v3m0 3v3m0 15v3m0 18v3m1 -123v3m0 12v3m0 3v3m0 57v3m0 18v3m1 -99v3m0 24v3m0 3v3m0 33v3m0 12v3m0 3v3"/><path stroke="#0066ff" stroke-width="1" fill="none" d="M211.5 142v3m1 -12v3m0 36v3m0 21v3m1 -9v3m1 -60v3m0 12v3m1 -24v3m0 6v3m0 9v3m1 -81v3m0 54v3m1 0v3m1 -63v3m0 54v6m0 6v3m0 6v3m1 -9v3m0 21v6m1 24v3m2 -30v3m1 -12v3m0 33v3m1 -60v3m0 27v3m0 21v3m1 -54v3m0 3v3m1 -6v3m1 -78v3m0 99v3m1 -3v3m1 18v3m1 -51v3m1 21v3m1 -30v3m0 30v3m0 12v3m0 12v3m1 -81v3m0 15v6m0 18v3m1 -99v3m0 111v3m1 -57v3m0 33v3m1 -24v3m0 39v3m0 3v3m1 -123v3m0 108v3m1 -120v3m0 69v3m0 24v3m1 -45v3m0 18v3m1 -9v3m2 -3v3m0 45v3m0 3v3m1 -27v3m1 -36v3m0 36v3m0 21v3m1 -63v3m1 9v3m0 12v3m2 -42v6m0 9v3m0 27v3m1 -105v3m0 60v3m0 51v3m1 -63v3m0 3v3m0 12v3m0 24v3m1 -111v3m1 51v3m0 3v6m1 -12v3m0 3v6m1 3v3m1 27v3m0 27v3m1 -15v6m0 6v3m1 -66v3m1 3v3m1 -12v3m0 15v3m1 -18v3m1 -15v3m0 45v3m0 21v3m1 -54v3m0 48v3m1 -51v6m0 39v3m2 -126v3m0 120v3m1 -126v6m0 48v3m0 9v3m1 -9v3m0 6v3m0 51v6m1 -72v3m1 -57v3m0 60v3m0 60v3m1 -63v3m1 9v3m0 42v3m1 -30v3m1 0v3m1 -33v6m1 -18v3m1 6v3m1 -72v3m0 54v3m0 39v6m1 -33v3m1 -3v3m0 24v3m2 -99v3m0 3v3m0 75v3m0 9v3m0 33v3m1 -132v3m0 63v3m0 57v3m1 -69v3m0 9v3m0 18v3m1 -33v3m1 -69v3m0 117v3m1 -120v3m0 42v3m0 9v3m0 6v3m0 6v3m1 -81v3m0 6v3m0 114v3m1 -123v3m0 45v3m0 42v3m0 18v6m1 -129v3m0 9v3m0 48v3m0 27v3m0 30v3m1 -84v3m0 12v6m0 63v3m0 9v3m1 -132v3m1 -9v3m0 42v3m0 6v3m0 12v3m0 48v3m1 -117v6m0 3v3m0 33v3m0 33v3m0 9v3m1 21v6m1 -84v3m0 39v3m0 3v3m0 33v3m1 -138v3m0 84v3m0 6v3m0 30v3m1 -123v3m0 3v6m0 24v3m0 3v3m0 51v6m0 3v3m1 -81v6m0 3v3m0 51v3m1 -102v3m0 27v3m0 15v3m0 3v6m0 18v3m0 12v6m0 27v3m1 -114v3m0 15v3m0 36v3m0 45v3m1 -63v3m0 6v3m0 12v3m0 3v3m0 18v3m0 12v3m1 -126v3m0 12v3m0 30v3m0 36v3m0 6v3m0 27v3m1 -120v3m0 24v3m0 30v3m0 33v6m0 6v3m1 -99v3m0 21v3m0 6v3m0 18v6m0 6v6m0 12v3m0 3v3m0 9v3m1 -3v3m0 18v3m1 -147v3m0 9v6m0 15v3m0 33v3m0 6v3m0 24v3m0 18v3m1 -129v3m0 12v3m0 6v3m0 24v3m0 21v6m0 21v3m0 3v3m1 -114v3m0 15v3m0 48v3m0 27v3m0 6v3m1 -72v3m0 12v9m0 27v6m1 -96v3m0 15v6m0 6v3m0 21v3m0 24v3m1 -81v3m0 24v3m0 12v3m0 6v3m0 63v3m1 -93v3m0 45v3m0 36v3m0 9v3m1 -93v3m0 3v3m0 12v3m0 12v3m0 3v3m0 3v3m1 -90v3m0 18v3m0 24v3m0 21v3m0 27v3m0 3v3m1 -108v3m0 15v3m0 24v3m0 15v3m1 -42v3m0 6v3m0 42v3m0 6v3m1 -78v3m0 21v6m0 30v3m0 15v3m0 42v3m1 -129v3m0 12v3m0 99v3m1 -111v3m0 30v3m0 21v3m0 45v3m1 -120v3m0 3v3m0 6v3m0 3v3m0 81v3m0 12v3m0 12v3m1 -120v3m0 12v3m0 60v6m1 -96v3m0 6v3m0 12v3m2 -12v3m0 21v3m0 15v3m0 15v3m0 15v6m1 -93v3m0 33v3m0 6v3m0 33v3m0 12v6m1 -66v3m1 -48v6m0 3v3m0 102v3m2 -99v3m1 -9v3m0 51v3m0 6v3m0 27v3m2 -108v3m0 3v3m0 42v3m0 57v3m1 -93v3m0 15v3m0 3v3m1 -36v3m0 12v6m0 27v3m0 48v3m1 -96v3m2 -6v3m0 9v6m0 15v3m0 6v6m0 39v3m0 3v3m1 -87v3m0 33v3m0 51v3m1 -111v3m0 15v3m0 72v3m0 3v3m1 -96v6m0 33v3m0 57v3m1 -102v3m0 9v3m1 -18v6m1 -9v3m0 9v3m0 24v3m1 -45v3m0 15v3m1 -18v3m0 105v3m1 -105v3m0 3v3m0 6v3m0 75v3m1 -96v6m0 6v3m0 18v3m0 54v3m0 6v3m1 -111v3m0 114v3m1 -111v3m0 6v3m0 9v3m1 -24v3m0 90v3m0 6v3m1 -114v3m1 -3v6m0 15v3m1 -30v3m0 6v3m0 30v3m0 69v6m1 -105v3m0 3v3m0 6v3m1 -15v3m0 18v6m0 87v3m1 -117v3m1 6v3m1 0v3m0 84v3m1 -111v3m0 36v3m1 -33v3m1 15v3m0 84v3m1 -120v6m0 24v3m0 78v3m1 -111v3m0 21v3m0 96v3m1 -120v6m0 27v3m1 -39v3m0 6v3m0 15v3m1 -33v3m0 6v3m1 -15v3m0 15v3m0 12v3m1 75v3m0 12v3m1 -126v3m0 39v3m1 -12v3m0 6v3m1 -51v3m0 12v3m0 3v3m0 93v3m1 -111v3m1 -9v3m0 9v3m0 3v12m0 78v3m1 -90v3m0 9v3m1 -36v3m0 21v3m1 -9v3m0 3v3m1 -21v3m0 3v3m0 6v3m0 75v3m0 12v3m1 -123v3m0 39v3m1 0v3m1 -48v3m0 9v3m0 3v3m0 9v3m0 84v3m1 -123v3m0 42v3m2 -18v3m1 -15v3m0 6v3m0 93v3m0 15v3m1 -90v3m0 60v3m1 -90v3m0 3v3m0 6v3m0 72v3m1 -96v6m0 9v3m0 69v3m1 -99v3m1 -21v3m0 45v3m0 3v3m0 66v3m1 -111v3m0 3v3m0 15v3m1 -12v3m0 18v3m1 -48v3m0 18v3m0 3v3m0 78v3m0 6v3m1 -117v9m1 30v3m0 60v3m1 -66v3m1 -21v6m0 63v3m0 12v3m1 -114v3m0 3v3m0 18v3m0 72v6m1 -90v6m0 6v3m1 -18v3m0 6v6m0 87v3m1 -102v3m0 3v3m0 9v3m0 15v3m0 39v3m1 -84v3m0 9v3m0 78v3m0 6v3m1 -102v3m0 9v6m0 3v3m0 51v9m1 -81v3m0 39v6m0 9v3m1 -69v3m0 18v3m0 33v3m1 -54v9m0 78v3m1 -99v3m0 3v3m0 18v3m0 54v3m1 -75v6m0 9v3m0 15v3m0 63v3m0 15v3m1 -141v3m0 3v3m0 6v3m0 93v9m1 -81v3m0 3v3m0 15v3m0 48v3m1 -63v3m0 18v3m1 -48v3m0 15v3m0 39v3m2 -69v3m0 33v3m0 18v3m1 -39v3m0 6v3m0 3v3m0 15v3m0 21v3m1 -51v6m0 24v3m1 -78v3m0 6v3m0 30v3m0 42v3m0 6v3m0 6v6m1 -33v3m1 -24v3m0 3v3m0 27v3m1 -54v3m0 21v3m0 24v3m1 -96v3m0 60v3m0 24v3m1 -96v3m0 24v3m0 6v3m0 3v3m0 9v3m0 21v3m0 9v3m1 -81v3m0 12v3m0 45v3m0 24v6m1 -99v6m0 3v3m0 9v3m0 33v3m0 24v3m0 15v3m1 -93v3m0 12v6m0 15v3m0 33v6m1 -81v3m0 27v3m0 15v3m0 12v3m0 3v3m0 15v3m1 -66v3m0 3v6m0 9v9m1 -60v3m0 15v3m0 45v3m0 6v3m0 9v3m1 -57v3m0 57v3m1 -123v3m0 18v6m0 27v3m0 51v3m1 -27v3m1 -57v3m0 6v3m0 36v3m1 -66v3m0 3v3m0 6v6m0 3v6m0 75v3m1 -84v3m0 15v3m0 51v3m1 -84v3m0 69v3m0 6v3m1 -90v3m0 12v3m0 39v3m1 -69v3m0 18v3m0 51v3m0 24v3m1 -69v3m0 9v3m0 3v9m0 9v3m0 27v3m1 -105v3m0 66v3m0 57v3m1 -99v3m0 3v3m0 30v3m0 27v3m1 -102v3m0 12v6m0 9v3m0 9v3m0 36v3m0 21v3m1 -84v3m0 51v3m0 21v3m1 -75v3m0 15v3m0 3v3m1 3v3m0 27v3m1 -36v3m0 39v3m1 -111v3m0 3v6m0 33v3m0 63v3m1 -120v3m0 6v6m0 30v3m0 9v3m0 63v3m1 -96v3m0 66v3m1 -72v3m0 3v3m0 15v3m0 51v6m1 -78v3m0 15v3m0 6v3m0 3v3m0 6v3m1 -66v3m1 -15v3m0 9v3m0 15v3m0 75v9m1 -105v3m0 81v3m1 -75v3m0 12v6m0 6v3m0 9v3m0 12v3m0 33v3m1 -108v3m0 36v3m0 18v3m0 12v3m0 9v3m1 -93v3m0 21v3m0 9v3m0 9v6m0 21v3m0 12v3m1 -84v3m0 6v3m0 33v3m1 -60v6m0 33v3m0 45v3m0 6v3m0 15v3m1 -123v3m0 3v3m0 6v3m0 84v3m0 3v6m1 -114v6m0 9v3m0 57v3m0 36v3m1 -96v3m0 87v3m1 -117v3m0 6v3m0 6v3m0 12v3m0 3v3m0 54v3m0 18v3m1 -111v3m0 33v3m0 3v3m0 39v3m0 21v6m1 -99v3m1 42v3m1 -72v3m1 6v3m2 -6v6m1 12v3m1 45v3m0 3v6m1 -54v3m0 21v3m0 12v3m0 15v3m1 0v3m1 -60v3m0 24v3m0 12v3m0 15v6m0 12v3m1 -111v6m0 6v3m0 21v3m0 15v3m0 9v6m0 24v3m0 6v3m0 6v3m0 9v3m1 -129v3m0 24v3m0 9v6m0 36v3m0 15v3m0 6v3m1 -93v3m0 6v3m0 15v3m0 39v3m0 27v3m1 -123v3m0 27v3m0 39v3m0 15v3m0 18v3m1 -72v3m0 6v3m0 12v3m2 -69v3m0 9v3m0 9v3m0 6v3m0 27v3m1 -39v3m0 12v3m0 27v3m0 6v3m0 12v6m0 9v3m1 -60v3m0 3v3m0 9v3m0 3v12m0 15v3m4 -51v3m0 42v3m4 -45v3m4 6v3m0 36v3m1 -93v3m0 39v3m0 15v3m1 42v3m2 -72v3m0 30v3m0 24v3m1 -36v3m1 -12v3m0 27v3m1 -45v3m0 18v3m0 18v3m1 -30v3m0 27v3m1 -51v3m0 63v3m1 -54v3m1 -72v3m0 9v3m0 51v6m0 3v3m0 15v6m0 12v3m1 -60v3m1 -60v3m0 54v6m0 78v3m1 -144v3m0 30v3m0 24v3m0 3v6m1 -66v3m0 12v3m0 30v6m0 3v3m0 33v3m1 -18v3m0 27v3m1 -117v3m0 12v6m0 39v3m0 9v3m0 18v3m0 15v3m1 -102v6m0 18v3m0 6v3m0 6v3m0 12v6m0 18v3m1 -54v3m1 -36v3m0 6v3m0 57v3m1 30v3m11 -75v3m1 21v3m0 78v3m1 -45v3m0 15v3m2 -39v3m1 -84v3m0 9v3m0 24v3m0 36v3m0 18v3m1 -69v6m0 72v3m1 -111v3m0 120v3m1 -117v6m0 12v6m0 3v6m0 6v3m0 36v3m0 6v3m0 12v3m1 -51v3m1 15v3m0 3v3m0 15v3m1 -57v3m0 27v3m0 6v3m1 -87v3m0 24v3m0 15v9m0 6v3m0 15v3m0 3v3m0 9v3m0 30v3m1 -51v3m0 6v3m0 3v3m1 -105v3m0 9v3m0 27v3m0 3v6m0 12v6m0 3v9m0 6v3m0 6v6m0 3v3m0 6v3m1 -54v3m1 -27v9m0 21v3m1 -9v6m0 3v3m1 -30v3m0 6v3m0 33v3m0 12v3m1 -75v3m0 27v3m0 21v3m0 6v3m0 6v3m1 -69v3m0 3v3m0 3v6m0 6v3m0 6v6m0 9v3m0 3v3m0 12v6m1 -69v3m0 15v3m0 12v3m0 24v3m1 -111v3m0 75v3m0 24v3m1 -108v3m0 51v6m1 -42v3m0 3v3m0 12v3m0 3v3m0 33v3m0 6v3m0 3v3m1 -96v3m0 24v3m0 3v3m0 24v3m0 6v3m0 15v3m0 6v3m0 6v6m1 -72v3m0 30v3m0 6v3m0 24v3m1 -102v3m0 3v3m0 36v3m0 9v3m0 6v3m0 30v3m1 -114v3m0 15v3m0 9v3m0 9v3m0 54v3m1 -87v3m0 6v3m0 3v3m0 54v3m0 9v3m0 3v6m1 -111v6m0 42v3m0 30v3m0 12v3m0 9v3m1 -48v3m0 12v3m1 -15v3m0 12v3m1 27v3m0 18v3m1 -138v3m0 18v3m0 21v3m0 54v3m1 -45v3m0 30v3m0 9v3m1 -90v3m0 21v3m0 33v9m1 -84v3m0 45v3m1 -36v6m0 18v3m0 6v3m0 9v3m1 51v3m1 -123v3m0 114v3m1 -99v6m0 66v3m0 9v3m1 -105v6m0 9v3m0 45v3m0 3v3m0 27v3m0 6v3m1 -81v3m0 3v3m0 30v3m0 18v3m1 -90v3m0 39v3m1 15v3m0 3v3m0 42v3m1 -108v3m0 21v3m1 -30v3m0 3v3m0 6v3m0 21v3m0 63v3m1 -117v3m0 9v3m0 21v3m0 6v3m1 -27v3m1 -24v3m0 18v3m0 96v3m1 -105v3m1 36v3m0 66v3m2 -123v3m1 18v3m0 24v6m1 -51v3m0 9v3m1 -3v3m0 99v6m1 -96v6m1 -24v3m0 24v3m0 81v3m1 -111v3m0 12v3m0 90v3m1 -105v3m0 27v6m1 -48v3m0 24v3m0 3v15m1 -60v3m0 33v3m0 6v3m0 6v3m1 -45v3m0 27v3m0 15v3m0 51v3m2 -54v3m0 51v3m0 21v3m1 -138v3m0 36v3m0 3v6m0 3v3m0 60v3m1 -123v3m0 45v3m0 9v3m1 -60v3m0 9v3m1 -21v3m0 12v3m0 9v3m0 30v3m0 51v6m1 -105v3m0 81v3m0 12v3m0 6v3m0 3v3m1 -114v6m0 24v3m0 6v6m0 51v3m1 -18v3m1 -102v3m0 84v3m0 15v3m1 -105v3m0 57v3m0 12v3m0 24v3m0 6v3m1 -39v3m1 -78v3m0 93v3m0 36v3m1 -135v3m0 102v3m1 -93v3m3 90v3m1 -108v3m0 6v6m0 42v3m0 27v3m0 3v3m0 9v3m1 -111v3m0 6v6m0 30v3m0 39v3m0 9v3m1 -99v6m0 9v3m0 18v6m0 15v3m0 21v3m0 6v3m0 3v3m2 -96v3m0 15v3m0 60v3m0 15v6m1 -114v3m0 15v3m1 21v3m0 6v6m0 39v3m0 3v3m1 -63v3m0 3v3m0 48v3m0 6v6m1 -93v3m0 9v3m0 33v6m0 12v3m1 -84v3m0 45v6m0 24v3m0 15v3m1 -96v3m1 0v3m0 36v3m0 9v3m0 9v3m0 3v3m0 9v3m0 9v6m0 6v3m1 -96v3m0 6v3m0 27v3m0 21v3m0 24v3m1 -75v3m0 3v3m1 -45v3m0 15v3m0 3v3m0 15v3m0 6v3m0 36v6m1 -72v3m0 21v3m0 6v3m0 33v3m1 6v3m0 6v3m1 -90v3m0 54v3m2 -90v3m0 30v3m0 33v3m0 24v3m0 6v3m1 -105v3m0 57v3m0 18v3m0 27v3m1 -108v3m0 27v3m0 60v3m1 -90v3m0 36v3m0 3v3m0 9v6m1 -78v3m0 30v3m0 30v3m0 12v3m1 -87v3m0 24v6m0 3v3m0 30v3m1 -51v6m0 9v3m0 81v3m1 -84v3m0 78v6m1 -102v3m0 3v3m0 18v6m0 15v3m1 -72v3m0 21v3m0 6v6m0 48v3m0 15v6m0 6v3m0 6v3m1 -126v3m0 30v3m0 30v3m1 -72v6m0 12v3m0 3v3m0 3v3m1 84v6m1 -126v3m0 6v3m0 9v3m0 60v3m0 9v6m1 -102v3m0 57v3m0 6v3m0 6v3m0 3v3m0 9v3m0 3v3m0 15v6m1 -90v3m0 42v3m0 3v3m1 9v3m0 6v6m0 6v3m1 -111v3m0 72v3m0 15v6m1 -111v3m0 3v3m0 6v3m0 3v3m0 3v3m0 24v3m1 0v3m0 36v12m0 6v3m1 -111v3m0 6v3m0 21v3m0 18v3m0 27v3m1 -21v3m0 6v3m0 9v3m1 -84v3m0 3v3m0 6v6m0 6v3m0 18v3m0 3v3m0 6v3m0 9v3m0 24v6m1 -93v3m0 3v6m0 45v9m0 9v3m1 -84v6m0 36v3m0 9v3m0 33v3m1 -114v6m0 18v3m0 21v3m0 24v3m0 21v9m0 21v3m1 -126v6m0 24v3m0 3v3m0 3v3m0 6v3m0 24v3m0 6v3m0 21v3m1 -72v3m0 24v3m0 18v3m1 -87v3m0 6v3m1 -15v3m0 21v6m0 75v3m1 -105v3m0 6v3m0 27v3m0 30v3m0 24v3m0 3v3m1 -96v3m0 75v3m1 -84v3m0 9v3m0 30v6m0 33v3m1 -54v3m0 21v6m1 -15v3m0 30v3m0 3v3m1 -36v3m1 39v3m1 -45v3m0 33v3m1 -45v3m0 12v3m0 30v3m1 -57v3m0 3v3m0 9v6m1 -18v3m1 45v3m0 9v3m1 -57v3m0 24v3m1 -48v3m0 42v3m2 -33v3m0 27v3m1 -45v3m0 18v3m0 33v3m1 -66v3m0 18v3m0 6v3m0 30v3m1 -57v3m0 9v3m0 33v3m0 6v3m1 -6v3m1 -45v3m0 12v3m0 18v3m1 -60v3m0 51v3m1 -30v3m1 -24v3m0 48v3m1 -15v3m0 6v3m1 -36v3m1 6v3m0 24v9m2 -42v3m0 36v3m2 -57v3m1 6v3m0 30v6m1 -21v3m0 15v3m0 3v3m1 -57v3m0 30v3m0 6v3m0 15v3m1 -66v9m0 3v3m0 3v3m0 6v3m0 9v3m0 6v3m1 -21v3m0 6v3m0 18v3m0 9v3m0 15v3m1 -81v3m0 15v3m0 12v3m0 6v3m1 -6v3m1 -48v3m0 18v3m0 12v6m0 6v3m0 33v3m1 -48v3m0 3v3m2 -3v3m0 3v3m1 -51v3m0 12v3m0 18v3m0 9v3m1 -54v3m0 3v3m0 6v3m1 -18v3m1 -9v3m0 36v3m0 18v3m1 -57v3m1 30v3m1 -3v3m1 -36v3m0 9v3m0 12v3m0 12v3m1 -30v3m0 24v3m1 -27v3m0 6v3m0 15v3m0 9v3m0 18v3m1 -54v3m0 3v3m0 6v6m1 -27v6m0 9v3m0 6v6m1 -33v3m0 15v6m1 -18v3m0 24v3m1 -24v3m0 12v3m1 -21v3m1 15v3m1 -9v3m1 -12v6m1 -6v3m0 12v3m1 -12v3m1 -12v3m0 3v3m0 6v6m0 9v3m1 -123v3m0 93v3m1 -12v3m0 15v3m0 6v6m0 15v3m0 6v3m1 -57v6m1 -84v3m0 33v3m0 3v3m0 12v3m1 18v6m0 15v3m1 -15v3m0 3v3m0 15v3m1 -30v3m0 18v3m1 -117v6m0 54v3m0 18v3m1 12v3m2 -99v3m0 3v3m0 24v3m0 45v3m0 3v3m0 6v3m1 -66v3m0 18v3m0 27v6m0 3v3m1 3v3m0 15v3m0 3v3m1 -75v3m0 27v6m1 -69v3m0 36v3m0 18v3m1 -84v3m0 15v3m0 30v3m0 9v3m0 9v3m0 9v3m0 6v3m0 3v3m1 9v3m0 6v3m1 -93v3m1 -30v3m0 3v3m0 75v3m0 27v3m1 -108v3m0 21v3m0 48v3m0 9v3m1 -96v3m0 81v3m0 6v3m0 9v3m1 -105v6m0 93v3m0 33v3m1 -138v3m0 87v3m0 6v3m1 -99v3m0 18v3m0 51v3m0 3v6m1 -78v3m0 6v3m1 21v3m1 -36v3m0 51v3m0 21v6m1 -108v3m0 18v3m0 45v3m0 12v6m1 -90v3m0 15v3m0 78v3m0 15v3m1 -114v3m0 93v3m0 15v3m1 -117v3m0 6v3m2 -12v9m0 15v3m0 42v3m0 9v3m0 12v3m0 12v3m1 -93v3m0 51v3m1 12v3m0 6v3m1 -102v6m0 6v3m0 12v3m0 33v3m0 12v6m0 3v3m0 24v3m1 -33v3m0 24v3m1 -108v3m0 57v3m0 36v3m1 -102v3m0 6v3m0 15v3m0 45v3m0 3v6m1 0v6m0 3v3m1 -3v9m0 3v3m1 -111v3m0 93v3m0 12v3m1 -27v6m0 9v3m1 -114v9m0 6v3m0 60v3m0 12v3m1 -9v3m0 3v3m1 -3v3m1 -6v3m0 24v3m1 -27v3m0 24v3m1 -126v3m0 75v3m0 15v3m0 21v3m1 -30v3m0 24v6m1 -126v3m0 87v3m1 -3v3m1 9v3m1 6v3m1 -111v3m0 78v3m0 3v3m1 -90v3m0 84v3m0 3v3m2 -96v6m0 75v3m0 3v3m3 -90v3m0 81v3m1 -81v3m0 114v3m1 -51v6m0 6v3m0 12v3m1 -108v3m0 93v3m0 6v3m0 15v3m1 -24v3m1 -27v3m0 9v6m0 18v3m1 -9v3m0 6v3m0 12v3m1 -27v3m2 9v3m2 -27v3m0 9v6m0 3v6m0 6v3m1 -132v3m0 111v3m1 -15v3m0 12v6m1 -12v3m2 -30v3m0 12v6m0 12v6m1 -9v3m1 -9v6m0 12v3m2 -129v3m0 99v3m1 -12v3m0 6v3m1 -9v3m0 6v3m1 -108v9m0 78v3m0 21v3m1 -108v6m0 75v3m0 15v3m1 18v6m1 -126v3m1 108v3m1 -117v6m0 99v3m0 3v3m1 -30v3m0 12v3m0 6v3m1 -27v3m1 6v3m0 3v3m1 -6v3m1 -96v3m0 84v3m0 15v6m1 -24v3m0 6v3m0 3v6m2 -111v3m0 3v3m0 45v3m0 24v3m0 6v3m0 9v3m0 9v3m1 -114v3m0 84v3m1 -87v3m0 36v3m0 15v6m0 9v3m0 21v3m1 -87v3m0 21v6m0 39v3m0 12v3m1 -102v3m0 45v3m0 18v3m0 39v3m1 -102v3m0 39v3m0 18v3m0 18v3m0 9v6m0 3v3m1 -120v3m0 15v3m0 18v3m0 3v3m0 36v3m0 12v3m0 6v3m0 3v6m1 -123v3m0 33v12m0 6v3m1 -57v3m0 21v3m0 3v6m0 21v3m0 30v3m0 3v3m0 12v3m1 -111v3m0 42v3m0 3v3m0 9v3m0 3v6m1 -66v3m0 30v3m0 12v3m0 30v3m0 3v3m0 3v3"/><path stroke="#1a00ff" stroke-width="1" fill="none" d="M211.5 172v3m0 30v6m0 3v6m1 -75v3m0 3v12m0 3v3m0 33v3m0 3v3m1 -63v3m0 3v3m0 9v3m0 27v3m0 3v9m0 6v3m1 -66v3m0 9v6m1 -30v3m0 6v3m0 3v3m0 36v3m1 -45v3m0 45v3m1 -63v6m0 9v3m0 6v3m0 30v6m1 -54v3m0 45v3m0 6v6m1 -54v3m0 30v3m1 -48v3m0 6v6m0 3v6m0 27v6m1 -48v12m0 33v6m1 -60v3m0 12v3m0 42v3m1 -75v3m0 12v3m0 9v3m0 48v3m1 -63v3m0 51v3m0 3v6m1 -60v3m0 3v3m0 45v3m1 -81v3m0 9v3m0 51v3m1 -3v3m0 3v3m0 6v3m1 -60v3m0 3v3m0 36v3m1 -63v6m0 3v3m0 9v3m0 6v3m0 21v6m0 9v3m1 -69v3m0 6v3m0 3v3m0 36v3m1 9v3m1 -78v3m0 18v3m0 6v3m0 24v9m1 -45v6m0 48v3m1 -87v3m0 9v6m0 18v3m0 27v6m1 -6v3m0 3v3m0 6v3m1 -57v6m0 42v6m0 6v3m1 -147v3m0 57v6m0 9v3m0 6v3m0 6v3m0 9v3m0 9v6m0 3v3m1 -6v3m1 -57v3m0 24v3m0 27v3m0 3v6m1 -81v3m0 12v3m0 9v9m0 39v3m0 3v3m1 -6v3m1 -72v3m0 24v3m0 36v3m0 3v3m1 -60v3m0 9v3m0 6v3m0 18v3m0 3v9m1 -6v6m1 -45v3m0 24v3m0 3v6m0 3v3m1 -60v3m0 6v3m0 36v3m0 9v9m1 -75v9m0 3v3m0 39v3m1 -51v3m0 6v3m0 3v3m0 30v6m1 -57v3m0 6v12m0 24v6m1 -42v6m0 54v3m1 -63v3m0 33v3m0 21v3m1 -147v3m0 63v3m0 3v3m0 18v6m0 33v3m0 6v3m1 -72v6m0 9v3m0 6v3m0 27v3m0 3v3m1 -54v3m0 18v3m0 24v6m2 -69v3m0 18v6m0 36v3m1 -78v3m0 9v3m0 3v9m0 48v3m0 12v3m1 -60v3m0 39v6m1 -51v3m0 9v3m0 30v3m0 6v3m1 -75v3m0 15v3m0 6v3m1 -39v3m0 27v3m0 3v3m0 30v3m0 3v6m1 -48v6m0 24v3m0 9v3m0 9v3m2 -72v3m0 54v6m0 3v3m1 -72v6m0 6v3m0 6v6m0 27v3m0 6v3m1 -66v3m0 6v3m0 45v3m1 -57v6m0 6v3m0 36v3m0 9v3m1 -63v3m0 3v3m0 6v3m0 30v3m0 9v6m1 -57v3m0 39v9m0 3v3m1 -69v6m0 12v3m0 33v3m2 -48v3m0 30v3m1 -33v3m0 6v3m0 27v3m0 3v3m1 -60v3m0 6v3m0 6v6m0 39v3m1 -63v3m0 3v3m0 45v3m1 -3v3m0 3v3m1 -51v3m0 39v3m1 -57v3m0 6v6m0 30v6m0 3v3m1 -45v6m1 -18v6m0 3v3m0 48v3m0 3v3m1 -12v3m0 6v3m2 -81v3m0 9v6m0 3v3m0 3v3m0 21v3m0 21v3m1 -72v6m0 6v9m0 30v9m1 -57v3m0 51v3m0 3v3m1 -63v3m0 3v3m0 3v3m0 3v3m0 42v3m1 -57v3m0 6v3m0 24v3m0 18v3m1 -141v3m0 66v3m0 3v3m0 6v3m0 3v6m0 27v3m0 6v3m1 -54v3m0 54v6m1 -18v3m0 3v3m0 6v3m1 -60v6m0 3v6m1 -15v6m0 36v3m0 3v6m1 -69v6m0 3v3m0 3v3m0 30v3m0 9v3m1 -51v3m1 39v6m0 12v3m1 -27v3m0 6v3m0 3v3m0 3v3m1 -141v3m0 30v3m0 27v3m0 3v6m0 42v6m1 -96v3m0 12v3m0 51v6m0 21v3m0 3v6m1 -69v3m0 12v3m0 42v3m1 -129v3m0 75v6m0 9v3m0 33v3m0 9v3m1 -141v3m0 117v3m1 3v3m0 6v3m1 -141v3m0 12v3m0 12v3m0 42v3m0 33v3m0 6v3m0 3v6m0 3v3m0 3v3m1 -63v3m0 42v3m0 6v6m2 -141v3m0 66v3m0 9v3m0 33v3m1 6v6m1 -123v3m0 60v3m0 9v3m0 48v3m1 -57v3m0 9v3m0 18v3m0 6v3m1 -126v3m0 129v3m1 -9v3m0 12v3m1 -141v3m0 129v3m1 -126v3m0 36v3m0 36v3m1 -93v6m0 3v3m0 105v3m0 9v3m0 9v3m1 -144v3m0 120v6m0 3v3m1 -93v3m0 42v3m0 15v3m0 18v3m1 -132v6m0 15v3m0 21v3m0 90v3m1 -3v3m1 -141v6m0 3v3m0 3v3m0 117v3m1 -141v3m0 123v3m0 9v3m1 -129v3m0 9v3m0 87v3m0 24v9m1 -144v3m0 120v3m0 6v3m1 -117v3m0 114v3m1 -141v3m0 6v6m0 120v3m1 -141v3m0 15v3m1 117v3m0 3v6m3 -141v3m0 3v3m0 111v6m0 3v6m1 -138v3m0 129v3m1 -138v6m0 3v3m0 9v3m0 102v3m0 15v3m1 -147v6m0 126v3m1 6v3m1 -141v3m0 24v3m0 99v3m1 -114v3m0 120v3m1 -138v3m0 123v3m1 -141v3m0 3v6m0 12v3m0 9v3m0 93v3m1 -135v9m0 3v3m0 126v3m0 3v3m1 -150v3m0 3v3m0 54v3m0 60v3m0 15v3m1 -138v3m0 129v3m1 -141v3m0 33v3m0 87v3m0 6v3m0 6v3m1 -21v6m0 12v3m1 -138v3m1 3v3m1 -12v3m0 9v3m0 105v9m0 6v3m1 -141v6m0 126v3m0 3v3m1 -141v9m0 3v3m0 117v6m0 3v3m1 -150v3m0 18v3m1 -15v3m0 3v3m0 126v3m1 -144v3m0 9v3m0 123v3m0 3v3m1 -150v3m1 6v3m0 117v3m0 9v3m1 -9v3m1 -135v3m0 6v3m0 120v9m1 -141v3m0 9v6m0 105v3m0 3v9m1 -141v3m0 6v3m0 126v3m1 -138v6m0 15v3m0 108v3m1 -132v3m0 132v3m1 -144v3m0 3v3m0 129v3m1 -141v9m0 3v3m0 123v3m1 -126v3m0 126v3m1 -135v3m1 -15v3m0 6v3m0 123v3m0 6v6m1 -144v3m0 6v3m0 108v6m0 3v3m0 6v3m1 -147v3m0 135v6m1 -138v3m0 117v3m1 0v3m0 3v3m1 -126v6m0 6v3m0 111v3m1 -138v3m0 126v3m0 3v6m0 3v3m1 -150v3m0 24v3m0 27v3m0 81v3m1 -141v6m0 9v6m0 21v3m0 84v3m1 -132v3m0 18v3m0 111v3m0 6v3m1 -132v3m0 126v3m1 -141v9m0 9v3m0 111v6m1 -141v3m0 120v3m1 -126v12m0 12v3m0 21v3m0 69v15m1 -117v3m0 90v3m1 -99v3m0 117v3m2 -141v3m0 24v3m0 102v3m1 -108v3m0 96v3m1 -132v9m0 6v3m0 24v3m0 78v3m0 3v3m0 12v3m1 -126v3m0 6v3m0 18v3m0 72v3m0 12v9m2 -141v3m0 126v3m1 -12v3m0 6v3m0 3v6m1 -150v6m0 12v6m0 30v3m0 66v3m0 3v6m0 3v6m1 -135v3m0 120v3m0 6v3m1 -141v3m0 129v3m0 6v3m1 -138v3m0 3v6m1 -15v6m0 3v3m0 12v3m1 -27v3m0 126v3m1 -129v3m1 -6v6m0 3v3m0 3v3m0 3v3m0 99v6m1 -123v3m0 15v3m0 108v3m1 -144v3m0 6v3m0 117v3m1 -111v3m0 105v3m0 6v3m1 -129v3m0 114v3m1 -114v3m0 108v3m1 -132v3m0 6v3m0 3v3m0 24v3m2 -27v6m0 102v3m0 12v3m1 -144v3m0 24v3m0 99v3m0 9v3m1 -144v3m1 3v3m0 138v3m1 -150v6m0 117v3m0 9v3m1 -138v3m1 126v3m1 -132v3m0 3v3m0 60v3m0 57v3m0 3v3m1 -132v3m0 3v3m0 3v9m0 96v3m0 3v3m0 15v3m1 -135v3m0 3v3m0 105v3m0 15v3m1 -138v3m0 3v3m0 6v3m1 -30v3m0 117v6m0 3v6m1 -123v3m0 9v6m0 6v3m0 18v6m0 9v3m0 66v6m1 -93v3m0 84v3m0 3v3m1 -150v3m0 138v3m1 -123v9m0 18v3m0 6v6m0 42v3m0 9v3m1 -117v3m0 3v3m0 6v6m0 18v3m0 54v3m0 3v3m1 -87v6m0 24v6m0 57v3m0 6v3m1 -114v3m0 15v3m0 24v3m0 51v3m0 21v3m0 6v6m1 -147v3m0 111v6m0 12v3m1 -138v3m0 12v3m0 96v3m1 -99v3m0 111v3m0 6v3m1 -141v9m0 9v3m0 3v3m0 9v3m0 54v3m0 18v3m0 18v3m1 -135v3m0 3v3m0 12v3m0 12v6m0 39v3m1 -87v3m0 18v6m0 18v3m0 36v3m0 6v3m1 -96v3m0 6v3m0 6v3m0 102v3m1 -129v6m1 9v3m0 12v3m0 99v3m1 -135v3m0 27v3m0 3v3m0 87v3m1 -117v6m0 27v3m0 60v3m0 12v3m0 12v3m0 3v3m1 -147v3m0 126v3m1 0v3m0 9v6m1 -132v3m0 6v3m0 27v3m0 54v12m0 18v3m1 -144v3m0 129v3m1 -138v3m1 21v3m0 9v3m0 66v3m0 21v3m1 -6v9m0 3v3m0 6v3m1 -150v9m0 3v6m0 24v3m0 54v3m0 18v3m0 9v3m1 -96v3m0 84v6m1 -129v3m0 3v3m0 6v9m0 3v3m1 -33v6m0 6v3m0 6v3m0 27v3m0 69v3m1 -87v3m0 6v3m0 3v3m0 66v3m1 -93v3m0 87v3m0 3v6m1 -132v6m0 3v3m0 69v3m0 36v3m0 18v6m1 -39v3m0 33v3m1 -147v6m0 3v3m0 9v3m0 27v3m0 60v3m0 6v3m0 18v3m1 -135v6m0 3v3m0 9v3m0 36v3m0 42v3m0 3v9m0 3v3m0 3v6m1 -144v3m0 3v3m0 30v3m0 78v3m1 -120v6m0 6v3m0 39v3m0 57v6m2 -120v3m0 3v3m0 108v3m0 3v3m0 9v3m1 -144v6m0 27v3m0 75v6m0 3v3m0 3v3m0 3v3m0 3v3m0 3v3m1 -150v9m0 3v3m0 54v3m0 9v3m0 33v3m1 -114v3m0 6v3m0 12v6m0 15v3m0 12v3m0 30v3m0 15v3m0 6v3m0 9v3m1 -138v3m1 111v3m0 9v3m0 9v3m1 -63v3m0 45v3m1 -12v3m0 3v6m0 12v3m1 -141v3m1 -3v3m0 117v3m0 3v9m1 -141v3m0 132v3m1 -138v6m0 15v3m0 60v3m0 42v3m0 6v3m0 6v3m1 -138v3m0 3v3m0 108v3m0 3v3m0 6v3m1 -135v3m0 111v6m0 6v3m0 3v3m1 -141v3m0 132v3m1 -135v3m0 117v3m0 3v3m2 0v3m1 -132v3m0 3v3m0 18v3m0 93v3m0 3v3m1 -78v3m0 45v6m0 6v6m0 12v3m1 -141v3m0 6v3m0 15v3m0 12v6m0 3v3m0 15v3m0 42v12m1 -126v3m0 12v3m0 81v3m0 9v9m1 -114v3m0 6v3m0 105v3m0 12v3m1 -129v3m0 6v6m0 66v3m0 18v3m0 9v3m0 15v3m1 -114v3m0 3v3m0 36v3m0 45v3m0 15v3m1 -27v3m0 21v3m1 -24v3m0 15v3m1 -12v3m1 -135v3m0 90v3m0 48v3m1 -102v3m0 78v3m1 -129v3m0 3v3m0 6v3m0 24v3m0 54v3m0 6v3m0 3v3m0 6v3m0 3v3m1 -27v3m1 24v3m1 -3v3m1 3v3m1 -93v3m1 57v3m1 -102v3m0 18v3m1 69v3m0 6v3m0 9v3m1 -51v3m1 -30v3m0 24v3m1 -63v3m0 3v3m0 12v3m0 18v3m0 12v3m0 12v3m1 -75v6m0 3v3m0 15v6m0 6v9m0 6v3m0 42v3m0 15v3m1 -123v3m0 3v3m0 9v3m0 6v3m0 9v3m0 78v6m1 -138v6m0 18v3m0 18v6m0 3v3m0 3v3m0 51v3m1 -108v3m0 15v3m0 3v3m0 12v3m0 3v3m0 15v3m0 57v6m0 6v3m1 -150v9m0 9v3m0 6v9m0 3v3m0 24v3m0 69v3m1 -138v3m0 3v3m0 3v3m0 3v3m0 42v3m0 9v3m0 27v9m0 3v3m1 -114v3m0 3v3m0 6v3m0 6v3m0 6v3m0 6v3m0 9v3m0 3v3m0 57v3m1 -132v3m0 39v3m0 3v3m0 66v3m0 3v3m1 -84v3m0 3v3m0 69v3m0 9v3m1 -126v3m0 12v6m0 3v6m0 6v3m1 -48v9m0 27v3m0 18v3m0 51v3m0 3v3m1 -120v3m0 3v3m0 9v3m0 18v3m0 6v3m0 75v3m1 -93v3m0 87v3m0 18v3m1 -129v3m0 30v3m0 66v3m0 6v3m0 12v3m1 -123v3m0 90v6m0 18v3m1 -144v3m0 6v3m0 18v3m0 33v6m0 57v9m1 -135v3m0 15v3m0 114v3m1 -141v3m0 3v6m0 6v3m0 6v3m0 9v3m0 3v3m0 72v6m0 12v3m1 -144v3m0 36v3m0 18v3m0 15v3m0 36v6m0 18v3m1 -9v3m0 3v3m1 -132v3m0 75v3m0 36v3m0 3v3m1 -90v3m0 6v3m1 39v3m1 -48v3m1 -54v3m1 51v3m1 54v3m1 -24v3m1 0v3m0 27v3m1 -84v3m0 51v3m1 -24v3m0 21v3m1 -105v3m0 66v3m0 48v3m1 -39v3m0 60v3m1 -117v3m0 33v3m1 -57v3m0 3v3m0 45v3m0 69v3m1 -141v3m0 57v3m0 39v3m0 6v3m0 18v3m1 -51v3m0 24v3m0 18v3m1 -90v6m0 84v6m0 3v3m1 -24v3m1 -3v3m0 15v3m1 -147v3m0 48v3m0 66v3m0 3v3m0 15v3m1 -147v3m0 6v3m0 27v3m0 51v9m0 12v6m0 12v3m0 6v3m1 -90v3m0 39v3m1 -87v3m0 39v3m0 21v6m0 9v3m0 15v3m0 33v3m1 -150v3m0 144v3m1 -102v6m0 27v3m0 33v3m0 3v3m0 18v3m2 -144v3m0 3v3m0 27v3m0 84v3m0 9v3m1 -114v6m0 102v6m1 -111v3m0 15v3m0 3v6m0 9v3m0 27v6m0 12v3m1 -114v3m0 75v3m0 39v9m0 3v3m2 -84v3m0 72v3m1 -99v3m0 9v3m0 33v3m0 12v3m0 18v3m0 12v6m1 -123v3m0 6v3m0 3v3m0 24v3m0 27v3m0 21v12m0 6v3m0 12v3m1 -93v3m0 57v3m0 6v6m0 9v6m1 -36v3m0 3v3m1 -99v3m0 78v3m0 21v3m0 3v9m1 -135v3m0 9v3m0 111v3m1 -132v3m0 60v3m0 63v9m1 -120v3m0 6v3m0 12v3m0 51v3m0 12v3m1 -75v3m0 63v3m0 15v3m1 0v3m0 9v3m1 -117v3m0 21v3m0 81v3m1 -114v3m0 96v3m1 21v3m1 -27v3m0 9v3m1 -27v3m0 27v9m1 -27v3m1 12v3m0 3v3m1 -27v3m1 6v3m0 6v3m1 -18v6m0 15v3m1 -24v9m1 -111v3m0 18v3m0 87v3m0 12v3m1 -126v3m0 24v3m0 63v3m0 3v3m1 3v6m2 -9v3m0 9v3m0 3v3m1 -120v3m0 96v3m0 3v3m1 -87v3m0 69v3m0 3v6m0 3v3m1 -6v3m0 6v6m1 -21v9m2 -129v3m0 126v3m1 -129v3m0 117v3m0 9v3m1 -135v3m0 111v3m0 9v3m0 6v6m1 -24v6m0 12v3m1 -21v3m0 9v3m0 6v3m2 -18v3m0 9v6m1 -21v3m1 15v3m1 -27v6m0 3v3m0 12v3m1 -24v3m0 9v6m1 -117v3m0 111v3m1 3v3m1 -24v3m0 9v3m0 3v6m1 -24v3m0 15v3m1 -138v3m0 114v3m1 -114v3m1 120v3m2 -24v3m0 12v3m0 3v3m1 -108v3m0 87v3m0 6v15m1 -18v3m0 9v3m0 3v3m1 -90v3m1 -42v3m0 21v3m0 3v3m0 66v3m0 24v3m1 -24v3m0 3v3m1 -9v3m0 3v3m2 -117v3m0 96v3m0 3v3m1 -9v3m0 15v6m0 6v3m1 -27v3m1 -6v3m0 21v3m1 -147v3m0 129v3m1 -45v3m0 27v3m0 6v3m1 -129v3m0 102v3m0 6v3m0 9v3m0 6v3m1 -9v3m1 -36v3m0 15v3m0 9v6m1 6v3m1 -96v3m0 51v3m0 15v3m0 6v3m1 -132v3m0 114v3m0 12v3m0 9v3m1 -93v3m0 27v3m0 12v3m0 3v3m0 27v3m1 -120v3m0 69v3m0 24v3m1 6v3m1 -120v3m0 33v3m0 51v3m0 33v3m0 3v3m1 -12v3m1 -48v3m1 24v3m0 6v3m1 -126v3m0 6v3m0 75v3m0 9v3m0 3v3m1 -15v3m0 27v3m1 -114v3m0 48v3m0 39v3m0 3v3m0 3v3m0 3v3m1 21v3m1 -57v3m0 24v3m0 3v3m2 -114v3m0 27v3m0 9v3m0 57v3m0 3v3m1 -120v3m0 3v3m0 15v3m0 27v3m0 39v3m1 18v3m0 18v3m1 -123v3m0 27v3m0 45v3m1 -93v3m0 12v3m0 42v3m0 24v3m0 3v3m0 3v3m1 -15v3m1 -36v3m0 21v6m0 6v12m0 3v3m1 21v3m1 -33v3m0 3v3m1 -33v3m0 39v3m1 -18v6m1 -117v3m0 108v6m1 -75v3m0 63v3m1 -96v3m0 69v3m0 3v3m0 12v3m0 3v3m0 6v3m1 0v3m0 9v3m1 -60v3m0 39v3m0 6v6m1 -117v3m0 3v3m0 24v3m0 33v6m0 12v3m0 9v3m1 -75v3m0 90v3m1 -114v3m0 15v3m0 30v3m0 27v6m1 -63v3m0 42v3m0 9v6m0 3v3m0 15v3m1 -138v3m0 54v3m0 12v6m0 24v3m0 12v3m0 12v9m1 -129v3m0 84v3m0 12v3m0 3v3m0 9v3m0 3v3m1 -141v3m0 24v3m0 9v6m0 3v3m0 15v3m0 15v3m0 21v3m0 15v6m1 -66v3m1 -9v3m0 33v3m0 27v3m1 -117v6m0 9v3m0 9v3m0 3v3m0 9v3m0 18v3m0 21v3m0 6v3m0 12v3m1 -111v3m0 33v6m0 3v3m0 18v9m0 33v3m0 6v3m1 -129v3m0 3v3m0 24v6m0 9v3m0 9v3m0 3v3m0 6v6m0 3v3m0 42v3m1 -147v3m0 57v3m0 42v3m0 30v3m0 6v3m1 -51v3m0 3v3m0 12v6m0 21v3m1 -147v3m0 111v6m0 15v3m0 3v3m1 -102v6m0 39v3m0 24v6m0 9v3m1 -6v3m0 6v3m0 3v3m1 -24v3m0 6v6m1 0v3m2 -66v3m0 15v3m0 12v3m0 21v3m0 3v3m1 -63v3m0 18v3m0 30v3m1 -51v3m0 9v3m0 15v3m0 12v6m0 6v3m0 3v3m1 -27v3m0 6v3m0 3v3m0 6v3m1 -54v6m0 9v3m0 3v3m0 3v3m0 6v3m0 3v3m1 -66v3m0 3v3m0 6v3m0 3v3m0 6v3m0 21v3m1 -39v3m0 24v3m0 3v3m0 9v3m1 -36v3m0 6v3m0 9v3m0 15v3m1 -51v3m1 -18v3m0 15v3m0 9v6m0 6v3m0 3v3m0 9v3m0 3v3m1 -63v3m0 48v3m1 -75v3m0 21v3m0 9v3m0 27v6m0 3v3m1 -6v3m1 -69v9m0 30v9m0 15v6m2 -60v3m0 9v3m0 24v3m0 21v3m1 -9v3m1 -51v6m0 21v12m1 6v3m0 3v3m1 -57v3m0 39v6m1 -75v3m0 24v3m0 6v6m0 12v3m1 -33v3m0 6v3m0 9v3m0 3v6m0 9v3m1 -42v3m0 9v9m0 6v3m0 3v6m0 6v3m0 3v6m0 3v3m1 -72v3m1 -3v3m0 48v3m0 6v3m0 3v3m2 -69v3m0 30v3m0 12v3m0 3v3m0 9v6m1 -42v3m1 -45v3m0 21v6m0 33v3m0 6v3m0 3v6m1 -93v3m0 24v6m0 12v3m1 -15v3m0 27v3m0 9v3m1 -18v3m0 27v3m1 -60v3m0 30v3m0 6v3m1 -51v3m0 45v3m1 -39v3m0 24v6m0 6v3m0 3v3m1 -51v3m0 24v6m0 3v3m1 -57v3m0 12v12m0 21v3m0 15v3m0 3v3m1 -21v6m1 -63v3m0 15v3m0 3v3m0 6v3m0 30v3m1 -24v9m0 18v3m1 -36v3m0 21v6m0 6v3m1 -66v3m0 15v3m0 3v3m0 15v6m0 3v3m0 6v3m1 -48v3m0 12v3m0 6v3m0 6v6m1 -42v3m0 12v3m1 15v3m0 12v3m1 -51v3m0 30v3m0 9v3m1 -21v3m0 9v3m1 -60v3m0 21v3m0 3v3m0 12v3m0 15v3m1 -48v3m0 3v3m0 9v3m0 6v3m0 3v3m1 -54v3m0 15v3m0 9v3m0 6v3m0 3v6m1 -36v3m0 3v6m0 18v3m0 3v3m0 3v3m1 -33v3m0 3v6m0 3v3m1 -18v3m0 24v3m0 3v3m0 6v3m1 -45v3m0 9v3m0 21v3m0 3v3m1 -39v3m1 -27v3m0 12v3m0 24v3m0 12v6m1 -60v3m0 27v9m0 6v3m0 9v3m1 -39v3m0 12v3m2 -21v3m0 3v6m0 15v3m1 -12v6m0 3v3m0 6v6m2 -45v3m0 15v3m0 21v3m1 -111v3m0 63v3m0 12v6m0 15v3m1 -69v3m0 15v3m0 30v6m0 3v3m0 3v3m1 -21v3m1 -21v3m0 36v3m1 -27v3m0 3v3m1 9v3m1 -51v3m0 33v3m0 9v3m1 -24v3m0 3v9m1 -27v3m0 12v3m0 15v3m0 6v3m1 -51v3m0 9v3m0 6v3m0 18v3m1 -48v3m0 39v3m1 -141v3m0 111v3m0 30v3m1 -54v3m0 9v3m0 15v3m1 15v3m1 -21v3m1 -129v3m0 111v3m1 -3v6m0 6v3m1 -129v3m0 120v3m0 3v3m0 3v3m1 -138v3m0 105v3m0 3v3m0 9v3m1 -18v3m0 12v3m0 9v6m1 -54v3m0 6v6m0 21v3m0 18v3m1 -24v6m0 6v3m0 6v3m1 -150v3m0 18v3m0 63v3m0 18v3m0 15v3m0 12v6m1 -147v3m0 96v3m0 3v3m0 3v6m0 6v3m1 -6v3m1 -18v3m0 15v3m0 6v3m0 6v3m1 -45v3m0 18v9m1 -27v3m0 21v6m1 -27v3m0 3v9m0 9v3m0 9v6m1 -147v3m0 6v6m0 12v3m0 66v3m0 12v3m0 6v3m0 3v3m0 9v3m1 -138v3m0 102v3m0 3v3m0 6v3m0 6v6m1 -30v3m0 21v3m0 3v12m1 -21v3m0 6v3m1 -45v3m0 30v3m1 -15v3m0 6v3m1 -42v3m0 18v3m0 6v6m0 21v6m1 -135v3m0 84v6m0 3v3m0 6v6m0 18v3m1 -48v3m0 6v3m0 3v3m0 3v6m0 3v3m0 12v3m1 -144v3m0 87v3m0 9v3m0 3v3m0 3v6m0 3v3m0 3v3m0 3v3m1 -27v3m0 6v3m0 18v3m1 -147v3m0 126v3m1 -24v9m0 6v3m0 9v6m1 -45v3m0 15v3m1 -30v3m0 18v12m0 12v3m0 3v3m1 -39v3m0 15v9m0 12v6m1 -147v3m0 90v3m0 36v6m0 6v3m1 -21v3m1 -33v3m0 6v9m0 6v3m0 6v3m0 6v3m0 3v3m1 -15v3m1 -18v3m0 3v3m0 3v3m1 -21v3m0 3v3m0 3v3m0 9v3m0 9v3m1 -147v3m0 93v3m0 12v6m0 24v3m1 -45v3m0 3v6m0 3v6m0 3v3m0 12v3m1 -3v3m1 -27v3m0 9v3m0 6v3m0 3v3m1 -36v6m0 3v3m0 15v3m0 6v3m1 -42v6m0 15v3m1 -48v3m1 -81v3m0 114v3m0 3v3m0 6v6m0 3v3m1 -21v3m1 -30v3m0 6v3m0 9v3m1 -9v3m0 15v3m0 6v3m1 -33v3m0 30v3m1 -66v3m0 9v3m1 42v3m1 -135v3m0 114v3m1 6v3m0 3v3m0 3v3m1 -45v3m1 -3v3m0 3v3m0 6v3m0 3v6m1 -18v3m1 0v3m3 -12v3m0 18v6m0 3v6m1 -9v3m0 3v3m1 -45v3m0 18v3m1 -9v3m0 3v3m0 15v3m0 3v3m1 -39v3m0 3v3m0 6v6m0 12v3m1 -3v6m1 -147v3m0 87v3m0 18v3m0 9v6m1 -15v3m0 3v6m1 -9v3m1 -12v3m0 12v6m0 12v3m1 -39v3m0 24v3m0 6v3m1 -12v6m1 -33v3m0 15v3m0 15v3m1 -42v3m1 15v3m1 -123v3m0 108v3m0 6v3m0 3v3m1 -9v3m0 6v3m0 3v3m0 3v9m1 -48v3m0 3v3m0 12v3m0 3v6m1 -51v3m1 -87v3m0 96v3m0 18v3m0 3v3m1 -42v3m0 36v6m0 6v3m0 3v3m1 -27v3m0 9v3m1 -126v3m0 90v3m0 27v9m1 -120v3m0 12v3m0 54v3m0 21v3m0 6v3m0 3v6m1 -75v3m0 3v3m0 33v3m0 3v3m0 6v3m0 6v6m1 -42v3m1 27v3m0 6v3"/><path stroke="#3300ff" stroke-width="1" fill="none" d="M212.5 136v3m0 24v3m1 -15v3m0 6v6m1 -15v3m0 45v6m1 3v3m1 -69v3m0 18v3m0 27v3m0 3v3m1 -42v3m1 -3v3m0 6v3m2 -30v6m0 3v3m0 63v3m1 -87v3m0 9v3m0 60v3m1 -12v9m0 9v3m2 -57v3m1 39v3m0 9v3m1 -69v9m1 -24v3m0 12v3m0 12v3m0 45v3m1 -54v3m0 36v3m0 9v3m1 -54v3m0 39v3m0 3v3m1 -60v3m0 9v3m0 24v3m0 12v3m1 -48v3m0 39v3m1 3v3m2 -66v3m0 3v3m0 36v3m0 12v3m1 -45v3m0 30v3m1 0v3m1 -60v3m0 6v3m0 6v3m0 45v3m1 -54v9m0 33v9m1 -54v3m0 6v3m0 42v3m1 -60v3m1 -3v3m0 48v3m1 9v3m1 -81v3m0 3v3m0 9v3m0 3v3m0 51v3m1 -57v3m1 -15v3m1 9v3m0 27v3m1 -33v3m0 42v6m1 -51v3m1 39v3m0 3v3m2 -51v3m0 42v6m1 -60v12m0 33v3m1 -63v3m0 9v6m0 9v3m0 3v3m1 -18v3m0 54v3m3 -57v3m0 36v3m1 -57v3m2 12v3m1 -21v3m0 3v3m0 3v3m0 57v3m1 -66v3m0 60v3m1 -12v3m1 -63v3m0 3v9m0 3v3m1 -12v3m0 6v3m1 0v3m0 39v6m1 -69v3m0 18v3m0 39v3m0 3v6m1 -12v3m1 -45v3m4 -3v3m1 39v3m1 -66v3m0 15v3m0 36v3m1 -63v3m0 9v3m0 3v3m0 3v3m1 39v3m0 3v3m1 -69v3m0 3v3m1 42v3m0 12v3m2 -24v3m0 18v3m2 -60v3m0 3v3m0 33v3m1 -126v3m0 45v3m0 39v3m0 39v6m0 3v3m1 -60v3m1 -6v3m0 54v3m1 -69v3m0 66v3m1 -81v3m0 6v3m0 3v3m0 45v3m0 12v3m1 -9v3m3 -63v3m1 -3v3m0 36v3m0 21v3m4 -57v3m0 39v6m1 -84v3m0 15v3m0 66v3m1 -78v3m1 -60v3m0 117v6m1 -36v3m0 39v3m2 -54v3m1 -84v3m0 117v3m3 -126v3m0 42v3m0 12v3m0 15v3m0 3v3m1 -45v6m0 51v3m0 9v3m0 18v3m1 -6v3m2 -3v3m1 -111v3m0 114v3m1 -144v3m0 9v3m0 117v3m0 6v3m1 -6v3m1 -9v3m1 -138v6m0 3v3m0 3v3m0 36v3m0 72v3m0 3v3m1 -129v3m0 114v3m2 -102v3m0 117v3m2 -141v3m0 69v3m0 48v9m1 -141v3m0 138v3m1 -138v3m0 138v3m1 -48v3m1 -90v3m0 81v3m0 33v3m1 -117v3m0 117v3m1 3v3m2 -150v3m0 9v3m1 129v3m2 -147v3m1 3v6m0 24v3m0 102v3m1 3v3m3 -138v3m0 6v3m0 42v3m0 78v3m1 -21v3m1 -120v3m0 117v6m0 3v3m1 -141v3m1 135v3m1 -144v3m0 132v3m1 -9v3m0 6v3m1 -141v3m0 3v3m0 123v3m2 -123v3m0 120v3m0 3v3m0 3v3m3 -144v3m1 -3v3m0 3v3m0 117v3m3 -3v3m0 6v3m1 3v3m1 -150v3m0 21v3m0 96v3m3 -117v3m0 6v6m0 6v3m0 15v3m1 -48v3m0 18v3m0 102v3m0 15v3m1 -141v3m1 -12v6m0 129v3m1 -132v3m0 123v3m1 -129v3m1 129v3m1 -117v3m1 -12v3m0 117v3m0 6v3m1 -144v6m2 120v3m1 -126v3m0 27v3m0 81v3m0 6v3m0 3v3m0 9v3m1 -150v3m0 138v3m1 -144v3m0 132v3m1 -3v3m1 -117v3m0 102v3m0 18v3m2 -114v3m0 102v3m3 -144v3m0 135v6m3 -114v6m0 99v3m0 9v3m1 -150v6m0 129v3m1 -132v3m1 -9v3m0 27v3m0 3v3m0 90v3m1 -111v3m0 6v3m1 -27v3m1 -3v3m0 129v3m1 -120v3m2 108v3m0 9v3m1 -147v3m0 141v3m1 -33v3m2 -114v3m1 -3v6m0 15v3m0 105v3m0 3v3m0 3v3m1 -6v3m1 -141v3m0 12v3m0 12v3m0 84v3m0 9v3m0 12v3m3 -150v3m0 3v3m0 132v3m1 -141v9m0 48v3m0 66v6m0 3v3m1 3v3m1 -24v3m0 18v3m1 -6v3m2 -141v3m0 6v3m0 21v3m1 -33v3m0 129v3m1 -117v3m1 -27v3m0 24v3m0 111v3m2 -6v3m1 -78v3m0 78v3m1 -147v3m0 30v3m0 3v3m0 9v3m0 36v3m0 33v3m1 0v3m0 3v3m2 -132v3m0 6v6m0 9v3m0 66v3m0 21v6m0 3v3m0 12v3m1 -150v3m0 12v3m0 12v6m0 12v3m0 72v3m0 3v3m0 12v3m1 -147v3m0 3v3m0 6v3m0 102v3m0 3v6m0 6v3m1 -141v3m0 129v3m1 -6v3m0 15v3m2 -147v3m0 123v3m0 3v3m0 6v3m1 -147v3m0 99v3m0 18v9m1 -129v3m0 9v3m0 12v3m0 42v3m0 36v3m0 24v3m0 3v3m1 -114v3m0 6v3m0 78v3m0 6v3m1 -138v3m0 48v3m0 87v3m1 -27v3m1 -114v3m1 -6v3m1 18v6m0 3v6m1 99v3m2 -138v3m2 0v3m1 12v3m0 18v3m0 9v3m0 81v3m1 -132v3m1 15v3m1 -21v3m0 3v3m0 120v3m1 -3v3m0 6v3m1 -141v3m0 3v3m0 39v3m0 54v3m0 9v6m0 3v6m0 3v3m1 -141v3m0 120v3m1 -84v3m0 69v3m0 18v3m0 3v3m1 -87v3m0 63v3m2 -3v6m0 3v3m1 -114v3m0 87v3m0 15v3m0 3v3m1 -144v3m0 18v3m0 69v3m0 27v3m0 3v6m1 -111v3m0 72v3m0 30v3m3 -126v3m0 114v3m1 -111v3m0 123v3m1 -147v3m0 87v3m0 42v3m1 -36v3m0 12v3m0 15v3m1 -6v3m0 9v3m1 -15v3m1 -3v3m0 3v3m1 -42v3m0 36v6m0 3v3m2 -12v3m1 -99v3m3 -33v3m0 117v3m0 3v3m1 -135v3m0 3v3m1 117v3m0 9v3m1 -147v6m0 15v3m0 102v3m2 -123v3m1 6v6m0 18v3m0 45v3m0 39v3m0 6v6m1 -144v3m0 18v6m0 21v3m0 15v3m0 57v3m0 6v3m0 3v3m1 -39v3m0 30v3m1 -60v3m0 42v3m1 -105v3m0 105v3m1 -36v3m0 33v3m1 3v3m2 -12v3m1 -33v3m0 21v3m0 15v6m1 -27v3m0 18v6m2 -54v3m1 -69v3m0 30v3m1 27v3m1 -78v3m0 69v3m2 -36v3m0 24v3m1 -24v3m0 21v3m1 15v3m1 -18v3m0 21v3m1 -69v3m1 -48v3m0 27v3m0 3v3m0 81v6m0 12v6m1 -147v3m0 27v3m0 3v3m1 -24v3m0 12v6m0 90v3m0 3v3m0 9v3m2 -111v3m0 78v3m0 3v3m0 3v6m1 -123v3m0 15v9m0 6v6m0 6v3m0 3v3m0 57v3m0 15v3m1 -126v3m0 69v3m0 30v6m1 -96v3m0 21v3m0 60v3m0 12v3m0 3v3m2 -72v3m0 72v3m1 -135v3m0 24v6m0 3v3m0 27v3m0 30v3m0 6v3m0 3v3m1 -108v3m1 -18v3m0 111v3m1 12v3m1 -120v3m0 78v3m1 -27v3m0 42v3m1 0v3m0 15v3m1 -33v3m1 15v3m0 12v3m1 -144v3m1 105v3m0 27v3m1 -111v3m0 87v3m1 -96v3m0 84v3m1 -57v3m1 6v3m1 -54v3m0 18v3m1 39v3m1 -84v3m0 114v3m0 18v3m1 -138v3m1 -6v3m0 15v3m0 45v3m1 57v3m4 -60v3m0 12v3m2 -90v3m1 30v3m1 102v3m1 3v3m1 -75v3m0 9v3m0 33v3m0 9v3m1 -117v3m0 36v3m0 27v3m0 9v6m0 30v3m0 3v6m1 -126v3m0 108v3m1 -66v3m0 15v3m0 24v6m1 12v3m1 -99v6m0 87v3m1 -15v3m1 -96v3m0 30v3m0 12v3m0 24v3m0 12v3m0 9v6m0 12v3m1 -66v3m0 9v3m0 21v6m0 6v3m1 -120v3m0 24v3m0 93v6m2 -33v3m1 -39v3m0 57v3m0 3v3m1 -123v3m0 21v3m0 12v3m1 15v3m0 45v3m1 -78v3m0 84v3m0 6v3m1 -102v3m0 69v6m3 3v3m0 15v3m1 -30v3m1 -99v3m0 93v6m0 15v3m2 -12v3m1 -81v3m0 78v3m2 -111v3m0 96v3m0 9v3m1 -12v3m1 0v6m0 9v3m1 -24v3m0 3v3m1 -9v3m0 15v3m2 -18v3m2 -84v3m0 69v3m1 -75v3m0 78v6m0 12v3m2 -30v6m1 3v3m1 3v3m0 3v3m3 -6v3m2 -18v3m0 6v3m2 -9v3m2 -81v3m0 90v3m3 -123v3m1 108v3m0 3v3m1 0v3m1 -15v3m0 3v3m0 9v3m1 -135v3m0 105v9m3 6v3m1 -9v3m0 6v3m1 -18v6m0 3v3m0 9v3m1 -33v3m0 6v6m0 12v6m1 -12v3m2 -24v3m1 18v3m2 -114v3m0 93v3m3 -102v3m0 108v3m0 9v3m1 -15v3m1 -18v3m0 6v3m1 9v3m2 -36v3m0 6v3m0 9v3m1 -9v3m0 12v3m1 -18v3m0 6v3m0 6v3m1 -3v3m1 -57v3m0 33v3m0 9v3m2 -21v3m0 18v3m1 -60v3m0 42v3m1 -96v3m0 90v3m1 -114v3m0 60v3m0 3v3m0 21v3m1 18v3m1 -126v3m0 81v3m1 30v3m1 -21v3m0 15v3m1 -33v3m0 9v3m1 -90v6m0 30v3m0 51v3m0 3v3m0 3v6m2 -99v3m0 48v3m0 60v3m1 -51v3m0 9v3m1 6v3m3 -27v3m0 15v3m0 9v3m2 -9v3m0 6v3m1 -39v3m2 -78v3m0 84v3m3 -51v3m0 27v3m0 18v3m3 -18v3m0 39v3m1 -102v3m0 33v3m2 60v3m1 -129v3m0 63v3m0 12v3m2 0v3m0 3v3m0 36v3m0 12v3m1 -90v3m0 3v3m0 27v3m0 30v9m1 -54v3m0 18v3m0 18v9m0 12v3m2 -111v3m0 54v3m0 6v3m0 12v3m1 -114v3m1 111v3m2 -6v9m0 18v3m1 -150v3m0 21v6m0 12v3m0 57v3m0 12v6m0 24v3m1 -141v3m0 30v3m0 27v3m1 57v3m2 -21v3m1 -12v3m0 12v6m1 -39v3m0 48v3m1 -30v3m2 15v3m0 9v3m1 -57v3m0 18v3m0 30v3m1 -63v3m0 39v3m2 -45v3m0 45v3m1 -54v3m0 39v3m0 12v3m0 6v3m1 -45v3m0 6v3m1 -39v3m0 21v3m0 6v3m0 9v6m0 12v3m1 -9v3m0 3v3m1 -51v3m1 51v3m4 -54v3m0 6v3m0 6v3m0 12v3m0 9v3m1 -45v3m0 3v3m0 30v3m1 -33v3m0 9v3m0 12v3m1 -51v3m1 39v3m0 3v3m2 -54v3m0 57v3m1 -54v3m0 42v6m1 -51v3m0 51v3m1 -30v3m0 18v3m0 3v6m1 -24v3m1 15v3m3 -27v3m0 18v3m5 -63v3m0 18v3m1 15v3m1 9v3m1 -9v3m0 9v3m1 -69v3m0 48v3m0 15v3m1 -24v3m0 3v3m0 3v6m0 9v3m3 -78v3m0 63v3m0 6v3m1 -48v3m0 36v3m1 -57v3m0 39v3m0 6v3m0 3v3m1 -21v3m1 -39v3m0 45v3m0 3v3m2 -3v3m1 -21v3m0 6v3m0 3v3m1 -33v6m0 27v3m1 -15v3m0 3v3m1 -15v3m0 9v3m1 -6v3m1 -36v3m0 9v3m0 9v6m1 -6v3m0 15v3m2 -42v3m0 3v3m0 24v6m3 -45v3m0 9v3m0 9v3m0 18v3m3 -15v3m0 6v3m2 -48v3m2 -3v3m0 9v3m0 12v3m0 9v6m1 -42v3m0 21v3m0 15v6m2 -15v3m1 -3v3m1 -9v3m0 6v3m1 -45v3m0 30v3m0 9v3m1 -81v3m0 66v9m2 -6v9m3 -12v3m0 15v3m1 -18v3m1 -129v3m0 87v6m1 42v3m1 -30v3m1 -15v3m0 15v3m1 -24v3m1 -90v3m0 120v3m1 -57v3m0 42v3m0 6v3m1 -42v3m1 -3v3m1 0v3m0 36v6m1 -33v3m1 -9v3m0 15v3m2 -24v3m0 39v3m3 -18v3m0 12v3m1 -39v3m0 33v3m1 -21v3m0 6v6m1 -57v6m0 21v3m0 12v3m1 3v3m0 9v3m4 -33v3m0 6v3m0 3v3m1 -24v3m0 3v3m1 -21v3m0 24v6m1 -24v3m0 21v6m1 -42v3m1 -15v3m0 21v3m0 21v3m0 12v3m1 -57v3m0 51v3m1 -27v3m0 15v6m2 -54v3m0 33v6m1 -57v3m0 9v3m0 3v3m0 9v6m0 6v3m0 6v6m0 3v3m0 6v3m1 -63v3m0 6v3m0 45v3m2 -54v3m0 45v3m1 -36v3m0 15v3m0 15v3m1 -48v3m0 36v3m0 3v3m1 -48v3m0 6v9m0 3v3m0 24v3m3 -6v3m3 -45v3m0 33v3m2 -138v3m0 93v3m0 9v3m0 21v3m0 6v3m1 -21v3m0 15v3m1 -9v3m1 -9v3m1 6v3m1 -39v6m0 12v6m0 3v3m0 9v6m3 -33v3m0 3v3m1 18v3m1 -6v3m1 -15v9m1 -6v3m2 -39v3m0 15v3m0 3v3m0 9v6m1 -9v3m1 -21v3m0 15v6m0 3v3m1 -6v3m1 0v3m0 6v3m1 -27v6m0 15v3m1 0v3m1 -12v3m2 -39v3m0 12v3m0 3v3m0 3v3m0 12v3m1 -48v3m1 -3v3m0 42v3m1 -84v3m0 63v3m0 15v3m1 -33v3m0 9v3m0 3v6m1 -42v3m1 -99v3m0 81v3m2 -84v3m0 69v3m0 18v3m0 45v3m1 -9v3m1 -129v3m0 117v3m1 -84v3m0 72v3m0 6v3m0 3v3"/><path stroke="#4d00ff" stroke-width="1" fill="none" d="M212.5 193v3m0 9v3m0 6v3m4 -60v3m0 45v3m2 -42v3m2 -30v3m0 48v6m2 -3v3m4 -36v3m0 3v3m1 36v3m1 0v3m1 -72v3m0 75v3m3 -75v3m0 60v3m1 -3v3m1 0v3m1 -24v3m0 15v3m1 -48v3m0 48v3m1 -78v3m0 30v3m0 27v3m3 -66v3m0 9v3m3 6v3m1 3v3m3 33v3m2 -3v3m1 -39v3m1 -9v3m0 42v3m1 9v3m1 -63v3m0 15v3m0 12v3m0 15v3m0 6v3m1 -60v3m0 30v3m2 -42v3m1 48v3m0 3v3m2 -75v3m0 12v3m0 51v3m2 -75v6m2 66v3m5 -51v3m2 -3v3m4 39v3m2 -42v3m8 -93v3m0 114v6m0 9v3m0 6v3m4 -60v3m0 51v3m9 -78v3m0 3v3m0 6v6m0 12v3m0 45v3m3 -12v3m1 -66v3m2 6v3m0 6v6m1 -96v3m0 78v3m2 -9v3m1 33v3m0 30v3m4 -126v3m1 -9v3m0 117v3m1 -114v3m0 48v3m3 -63v3m0 117v3m1 -9v3m4 -135v6m3 126v3m0 6v3m1 -48v3m0 33v3m0 12v3m6 -129v3m2 -24v3m0 27v3m0 105v3m2 -135v3m2 117v6m0 3v3m0 6v3m1 -9v3m1 -138v3m0 15v3m3 -18v3m1 123v3m2 -129v3m1 -9v6m0 12v3m0 105v3m3 -126v3m0 15v3m1 111v6m3 -141v3m1 24v3m0 96v3m3 18v3m1 -33v3m3 -93v3m0 117v3m9 -147v3m0 33v3m0 84v3m4 -123v3m0 30v3m0 12v3m0 78v6m5 -138v3m2 132v3m2 -102v3m2 -36v3m2 21v3m1 0v3m3 -36v3m3 33v3m0 99v3m1 -24v3m1 -90v3m0 12v3m0 99v3m3 -108v3m0 102v3m1 -111v3m2 12v3m0 78v3m4 -126v3m11 36v3m0 54v6m0 6v3m1 -87v3m0 15v3m0 45v3m0 36v3m1 -102v3m0 90v3m0 3v3m1 -30v3m3 -81v3m1 27v3m1 -69v3m0 114v3m0 9v3m1 -126v3m1 102v3m0 15v3m0 15v3m3 -108v3m1 -45v3m0 111v3m3 -84v3m1 0v3m1 -9v3m2 84v3m1 -99v3m0 9v3m0 99v3m0 3v6m3 -114v3m0 33v3m0 33v3m2 27v6m1 -90v3m2 51v3m2 -105v3m0 12v3m0 57v3m0 60v9m1 -21v3m0 3v3m3 -33v3m1 -69v3m0 72v3m0 12v3m0 3v3m1 -120v3m0 48v3m1 -27v3m0 45v3m11 -93v3m0 132v6m1 -132v3m1 3v3m1 126v3m2 -129v6m0 15v3m0 24v3m0 12v3m0 6v3m0 12v6m0 21v3m1 -111v3m0 6v3m0 3v3m2 45v3m1 -36v3m0 12v3m0 63v3m1 -108v3m5 99v6m1 -96v3m1 54v3m1 -21v3m0 33v3m2 -84v6m0 60v6m1 -45v3m1 -24v3m0 3v3m0 66v3m1 -111v3m1 132v3m1 -120v3m2 -27v3m2 9v3m0 54v3m2 -6v3m1 -48v3m0 12v3m0 9v3m0 18v3m0 27v3m0 21v3m2 -87v3m0 84v3m1 -132v3m1 36v3m1 -33v3m0 3v3m0 72v3m0 24v3m0 3v3m0 15v3m1 -117v3m6 57v3m0 12v3m1 -27v3m0 51v6m1 -129v3m0 6v3m1 6v3m2 72v3m1 -102v3m0 105v3m0 21v3m2 -12v3m4 -6v3m3 3v3m3 -57v3m0 63v3m1 -111v3m1 90v3m1 12v3m2 -144v3m0 72v3m0 15v3m0 15v3m3 9v3m1 -12v3m3 -51v3m1 -39v3m0 30v3m0 3v3m0 12v3m1 -6v3m2 42v3m1 -54v3m0 27v3m2 30v3m1 -69v3m0 21v3m0 30v6m1 -129v3m0 3v3m0 18v6m0 90v15m3 -93v3m1 66v6m0 15v3m1 -18v3m0 3v6m0 3v3m9 -15v3m3 -15v3m0 18v3m1 -27v3m1 -15v3m0 33v3m1 -24v3m1 9v6m1 -6v3m1 -132v3m9 126v3m3 6v3m3 -24v3m1 -111v3m4 114v3m0 12v3m2 -33v3m4 18v3m1 -9v3m1 -6v3m3 0v3m2 9v3m3 -24v3m0 21v3m2 -12v3m4 -78v3m0 78v3m0 3v3m1 -9v3m2 -33v3m0 15v6m0 12v3m2 -126v3m0 117v3m3 -36v3m1 -87v3m2 63v6m4 -72v3m0 48v3m1 6v3m0 9v3m0 15v3m12 24v3m3 -57v3m0 33v3m0 6v3m0 9v3m1 -57v3m1 -93v3m1 57v3m2 -15v3m1 -18v3m0 30v3m0 51v3m3 -21v3m2 -96v3m0 3v3m0 9v3m0 6v3m0 36v3m0 15v3m2 -93v3m0 60v3m2 -39v3m1 78v3m1 -36v3m0 21v3m0 18v3m2 -9v3m1 -21v3m0 30v3m1 -15v3m0 18v3m1 -60v3m0 12v3m0 12v3m0 6v3m1 -24v3m1 18v3m2 -12v3m2 -12v3m1 -48v3m0 78v3m1 -30v3m3 -51v3m0 9v3m0 60v3m2 -72v6m0 27v3m0 6v3m0 6v3m0 3v3m1 -6v3m1 -3v3m0 6v3m0 3v3m3 -24v3m0 18v3m1 -18v3m2 -39v3m0 18v3m3 -3v3m2 -36v3m7 51v3m1 6v3m2 -45v3m0 18v3m2 -12v3m1 -3v3m0 6v3m6 6v3m1 -36v3m1 -21v9m0 9v3m0 33v3m0 9v3m1 -45v3m0 12v3m1 18v3m0 3v3m2 -15v6m1 -54v3m2 -6v3m0 6v3m2 39v3m1 -123v3m0 21v3m0 48v3m0 27v3m0 6v3m0 6v3m5 -9v3m2 12v3m5 -39v3m0 30v3m7 -126v3m4 -15v3m1 -6v6m0 6v3m0 99v3m3 -111v3m0 33v3m0 42v3m0 24v3m3 -123v3m0 132v6m3 -48v3m0 39v3m0 9v3m1 -51v3m0 27v3m4 9v3m4 0v6m3 -3v3m2 -27v3m0 9v3m0 6v3m1 -9v3m2 -12v3m0 9v3m2 3v3m2 -51v3m1 0v3m0 18v6m0 12v3m1 -45v3m0 27v3m1 -36v3m1 -12v3m1 -3v3m0 6v3m0 3v3m2 -105v3m0 3v3m0 117v6m0 6v6m3 -12v3m3 -36v3m0 3v9m0 18v3m2 -18v3m0 21v3m1 -30v3m1 -3v3m2 -9v3m1 -9v3m0 36v3m6 -39v3m0 9v3m1 -24v3m0 18v3m0 9v3m0 12v3m2 -30v3m1 -21v6m1 30v3m0 3v3m2 -33v3m2 -18v3m3 -3v3m0 9v3m1 -15v3m0 33v3m1 12v3m1 -39v3m1 -3v3m0 27v6m1 -42v3m0 39v3m1 -15v3m4 -12v3"/>
<defs><linearGradient id="pr0" gradientUnits="userSpaceOnUse" x1="257" y1="0" x2="785" y2="0"><stop offset="0.0000" stop-color="#00ff59"/><stop offset="0.2424" stop-color="#00ff33"/><stop offset="0.2803" stop-color="#00ff4c"/><stop offset="0.3087" stop-color="#00ff66"/><stop offset="0.3466" stop-color="#00ff80"/><stop offset="0.3845" stop-color="#00ff8c"/><stop offset="0.4924" stop-color="#00ffa6"/><stop offset="0.5057" stop-color="#00ff73"/><stop offset="0.5360" stop-color="#00ff73"/><stop offset="0.7443" stop-color="#00ff40"/><stop offset="0.8390" stop-color="#00ff26"/><stop offset="1.0000" stop-color="#00ff1a"/></linearGradient></defs><rect x="257" y="256" width="528" height="17" fill="url(#pr0)"/><defs><linearGradient id="pr1" gradientUnits="userSpaceOnUse" x1="257" y1="0" x2="785" y2="0"><stop offset="0.0000" stop-color="#00ff00"/><stop offset="0.2424" stop-color="#00ff00"/><stop offset="0.2803" stop-color="#00ff26"/><stop offset="0.3087" stop-color="#00ff4c"/><stop offset="0.3466" stop-color="#00ff80"/><stop offset="0.3845" stop-color="#00ff9f"/><stop offset="0.4924" stop-color="#00ffbf"/><stop offset="0.5057" stop-color="#00ffb2"/><stop offset="0.5360" stop-color="#00ffb2"/><stop offset="0.7443" stop-color="#00ff60"/><stop offset="0.8390" stop-color="#00ff33"/><stop offset="1.0000" stop-color="#00ff00"/></linearGradient></defs><rect x="257" y="273" width="528" height="17" fill="url(#pr1)"/><defs><linearGradient id="pr2" gradientUnits="userSpaceOnUse" x1="257" y1="0" x2="785" y2="0"><stop offset="0.0000" stop-color="#40ff00"/><stop offset="0.2424" stop-color="#40ff00"/><stop offset="0.2803" stop-color="#00ff00"/><stop offset="0.3087" stop-color="#00ff40"/><stop offset="0.3466" stop-color="#00ffa6"/><stop offset="0.3845" stop-color="#00ffe6"/><stop offset="0.4924" stop-color="#00ffe6"/><stop offset="0.5057" stop-color="#00ffd9"/><stop offset="0.5360" stop-color="#00ffd9"/><stop offset="0.7443" stop-color="#00ff8c"/><stop offset="0.8390" stop-color="#00ff59"/><stop offset="1.0000" stop-color="#00ff00"/></linearGradient></defs><rect x="257" y="290" width="528" height="18" fill="url(#pr2)"/><defs><linearGradient id="pr3" gradientUnits="userSpaceOnUse" x1="257" y1="0" x2="785" y2="0"><stop offset="0.0000" stop-color="#60ff00"/><stop offset="0.2424" stop-color="#60ff00"/><stop offset="0.2803" stop-color="#1aff00"/><stop offset="0.3087" stop-color="#00ff40"/><stop offset="0.3466" stop-color="#00ffbf"/><stop offset="0.3845" stop-color="#00ffff"/><stop offset="0.4924" stop-color="#00ffff"/><stop offset="0.5057" stop-color="#00ffff"/><stop offset="0.5360" stop-color="#00ffff"/><stop offset="0.7443" stop-color="#00ffcc"/><stop offset="0.8390" stop-color="#00ff8c"/><stop offset="1.0000" stop-color="#00ff1a"/></linearGradient></defs><rect x="257" y="308" width="528" height="18" fill="url(#pr3)"/><defs><linearGradient id="pr4" gradientUnits="userSpaceOnUse" x1="257" y1="0" x2="785" y2="0"><stop offset="0.0000" stop-color="#60ff00"/><stop offset="0.2424" stop-color="#60ff00"/><stop offset="0.2803" stop-color="#1aff00"/><stop offset="0.3087" stop-color="#00ff40"/><stop offset="0.3466" stop-color="#00ffbf"/><stop offset="0.3845" stop-color="#00ffff"/><stop offset="0.4924" stop-color="#00ffff"/><stop offset="0.5057" stop-color="#00ffff"/><stop offset="0.5360" stop-color="#00ffff"/><stop offset="0.7443" stop-color="#00ffe6"/><stop offset="0.8390" stop-color="#00ffbf"/><stop offset="1.0000" stop-color="#00ff26"/></linearGradient></defs><rect x="257" y="326" width="528" height="17" fill="url(#pr4)"/><defs><linearGradient id="pr5" gradientUnits="userSpaceOnUse" x1="257" y1="0" x2="785" y2="0"><stop offset="0.0000" stop-color="#33ff00"/><stop offset="0.2424" stop-color="#26ff00"/><stop offset="0.2803" stop-color="#00ff00"/><stop offset="0.3087" stop-color="#00ff4c"/><stop offset="0.3466" stop-color="#00ff9f"/><stop offset="0.3845" stop-color="#00ffd9"/><stop offset="0.4924" stop-color="#00ffe6"/><stop offset="0.5057" stop-color="#00ffff"/><stop offset="0.5360" stop-color="#00ffff"/><stop offset="0.7443" stop-color="#00ffff"/><stop offset="0.8390" stop-color="#00ffd9"/><stop offset="1.0000" stop-color="#00ff60"/></linearGradient></defs><rect x="257" y="343" width="528" height="18" fill="url(#pr5)"/><defs><linearGradient id="pr6" gradientUnits="userSpaceOnUse" x1="257" y1="0" x2="785" y2="0"><stop offset="0.0000" stop-color="#00ff00"/><stop offset="0.2424" stop-color="#00ff00"/><stop offset="0.2803" stop-color="#00ff26"/><stop offset="0.3087" stop-color="#00ff4c"/><stop offset="0.3466" stop-color="#00ff73"/><stop offset="0.3845" stop-color="#00ff8c"/><stop offset="0.4924" stop-color="#00ffbf"/><stop offset="0.5057" stop-color="#00ffff"/><stop offset="0.5360" stop-color="#00ffff"/><stop offset="0.7443" stop-color="#00ffff"/><stop offset="0.8390" stop-color="#00ffe6"/><stop offset="1.0000" stop-color="#00ff80"/></linearGradient></defs><rect x="257" y="361" width="528" height="17" fill="url(#pr6)"/><defs><linearGradient id="pr7" gradientUnits="userSpaceOnUse" x1="257" y1="0" x2="785" y2="0"><stop offset="0.0000" stop-color="#00ff59"/><stop offset="0.2424" stop-color="#00ff33"/><stop offset="0.2803" stop-color="#00ff4c"/><stop offset="0.3087" stop-color="#00ff66"/><stop offset="0.3466" stop-color="#00ff73"/><stop offset="0.3845" stop-color="#00ff80"/><stop offset="0.4924" stop-color="#00ff8c"/><stop offset="0.5057" stop-color="#00ffe6"/><stop offset="0.5360" stop-color="#00fff2"/><stop offset="0.7443" stop-color="#00ffff"/><stop offset="0.8390" stop-color="#00fff2"/><stop offset="1.0000" stop-color="#00ffb2"/></linearGradient></defs><rect x="257" y="378" width="528" height="18" fill="url(#pr7)"/><defs><linearGradient id="pr8" gradientUnits="userSpaceOnUse" x1="257" y1="0" x2="785" y2="0"><stop offset="0.0000" stop-color="#00ffbf"/><stop offset="0.2424" stop-color="#00ffa6"/><stop offset="0.2803" stop-color="#00ff99"/><stop offset="0.3087" stop-color="#00ff8c"/><stop offset="0.3466" stop-color="#00ff80"/><stop offset="0.3845" stop-color="#00ff73"/><stop offset="0.4924" stop-color="#00ff60"/><stop offset="0.5057" stop-color="#00ffcc"/><stop offset="0.5360" stop-color="#00ffcc"/><stop offset="0.7443" stop-color="#00ffd9"/><stop offset="0.8390" stop-color="#00ffd9"/><stop offset="1.0000" stop-color="#00ffcc"/></linearGradient></defs><rect x="257" y="396" width="528" height="18" fill="url(#pr8)"/><defs><linearGradient id="pr9" gradientUnits="userSpaceOnUse" x1="257" y1="0" x2="785" y2="0"><stop offset="0.0000" stop-color="#00ffff"/><stop offset="0.2424" stop-color="#00ffff"/><stop offset="0.2803" stop-color="#00ffd9"/><stop offset="0.3087" stop-color="#00ffb2"/><stop offset="0.3466" stop-color="#00ff73"/><stop offset="0.3845" stop-color="#00ff33"/><stop offset="0.4924" stop-color="#00ff33"/><stop offset="0.5057" stop-color="#00ffa6"/><stop offset="0.5360" stop-color="#00ffa6"/><stop offset="0.7443" stop-color="#00ffbf"/><stop offset="0.8390" stop-color="#00ffd9"/><stop offset="1.0000" stop-color="#00ffff"/></linearGradient></defs><rect x="257" y="414" width="528" height="17" fill="url(#pr9)"/><defs><linearGradient id="pr10" gradientUnits="userSpaceOnUse" x1="257" y1="0" x2="785" y2="0"><stop offset="0.0000" stop-color="#00bfff"/><stop offset="0.2424" stop-color="#00bfff"/><stop offset="0.2803" stop-color="#00ffe6"/><stop offset="0.3087" stop-color="#00ff80"/><stop offset="0.3466" stop-color="#00ff26"/><stop offset="0.3845" stop-color="#00ff0d"/><stop offset="0.4924" stop-color="#00ff00"/><stop offset="0.5057" stop-color="#00ff33"/><stop offset="0.5360" stop-color="#00ff33"/><stop offset="0.7443" stop-color="#00ffb2"/><stop offset="0.8390" stop-color="#00ffd9"/><stop offset="1.0000" stop-color="#00e5ff"/></linearGradient></defs><rect x="257" y="431" width="528" height="18" fill="url(#pr10)"/><path fill="#000" d="M263 256h1v193h-1zM279 256h1v193h-1zM294 256h1v193h-1zM310 256h1v193h-1zM325 256h1v193h-1zM341 256h1v193h-1zM356 256h1v193h-1zM372 256h1v193h-1zM387 256h1v193h-1zM403 256h1v193h-1zM418 256h1v193h-1zM434 256h1v193h-1zM450 256h1v193h-1zM465 256h1v193h-1zM481 256h1v193h-1zM496 256h1v193h-1zM512 256h1v193h-1zM527 256h1v193h-1zM543 256h1v193h-1zM558 256h1v193h-1zM574 256h1v193h-1zM589 256h1v193h-1zM605 256h1v193h-1zM621 256h1v193h-1zM636 256h1v193h-1zM652 256h1v193h-1zM667 256h1v193h-1zM683 256h1v193h-1zM698 256h1v193h-1zM714 256h1v193h-1zM729 256h1v193h-1zM745 256h1v193h-1zM760 256h1v193h-1zM776 256h1v193h-1zM257 273h528v1h-528zM257 290h528v1h-528zM257 308h528v1h-528zM257 326h528v1h-528zM257 343h528v1h-528zM257 361h528v1h-528zM257 378h528v1h-528zM257 396h528v1h-528zM257 414h528v1h-528zM257 431h528v1h-528zM518 256h6v193h-6z"/>
<defs><linearGradient id="g77" x1="0" y1="0" x2="0" y2="1"><stop offset="0.000" stop-color="#ff0000"/><stop offset="0.200" stop-color="#ffff00"/><stop offset="0.400" stop-color="#00ff00"/><stop offset="0.600" stop-color="#00ffff"/><stop offset="0.800" stop-color="#0000ff"/><stop offset="1.000" stop-color="#8000ff"/></linearGradient></defs><rect x="851" y="78" width="31" height="126" fill="url(#g77)"/><defs><linearGradient id="g275" x1="0" y1="0" x2="0" y2="1"><stop offset="0.000" stop-color="#ff0000"/><stop offset="0.200" stop-color="#ffff00"/><stop offset="0.400" stop-color="#00ff00"/><stop offset="0.600" stop-color="#00ffff"/><stop offset="0.800" stop-color="#0000ff"/><stop offset="1.000" stop-color="#8000ff"/></linearGradient></defs><rect x="851" y="276" width="31" height="153" fill="url(#g275)"/>
<path fill="#fff" d="M210 61h620v1h-620zM210 220h620v1h-620zM210 61h1v160h-1zM829 61h1v160h-1zM214 62h1v6h-1zM214 214h1v6h-1zM222 62h1v6h-1zM222 214h1v6h-1zM228 62h1v6h-1zM228 214h1v6h-1zM236 62h1v9h-1zM236 211h1v9h-1zM242 62h1v6h-1zM242 214h1v6h-1zM249 62h1v6h-1zM249 214h1v6h-1zM256 62h1v6h-1zM256 214h1v6h-1zM262 62h1v6h-1zM262 214h1v6h-1zM270 62h1v6h-1zM270 214h1v6h-1zM276 62h1v9h-1zM276 211h1v9h-1zM284 62h1v6h-1zM284 214h1v6h-1zM290 62h1v6h-1zM290 214h1v6h-1zM297 62h1v6h-1zM297 214h1v6h-1zM304 62h1v6h-1zM304 214h1v6h-1zM311 62h1v6h-1zM311 214h1v6h-1zM318 62h1v9h-1zM318 211h1v9h-1zM324 62h1v6h-1zM324 214h1v6h-1zM332 62h1v6h-1zM332 214h1v6h-1zM338 62h1v6h-1zM338 214h1v6h-1zM345 62h1v6h-1zM345 214h1v6h-1zM352 62h1v6h-1zM352 214h1v6h-1zM359 62h1v9h-1zM359 211h1v9h-1zM366 62h1v6h-1zM366 214h1v6h-1zM373 62h1v6h-1zM373 214h1v6h-1zM379 62h1v6h-1zM379 214h1v6h-1zM386 62h1v6h-1zM386 214h1v6h-1zM393 62h1v6h-1zM393 214h1v6h-1zM400 62h1v9h-1zM400 211h1v9h-1zM407 62h1v6h-1zM407 214h1v6h-1zM414 62h1v6h-1zM414 214h1v6h-1zM421 62h1v6h-1zM421 214h1v6h-1zM427 62h1v6h-1zM427 214h1v6h-1zM435 62h1v6h-1zM435 214h1v6h-1zM441 62h1v9h-1zM441 211h1v9h-1zM448 62h1v6h-1zM448 214h1v6h-1zM455 62h1v6h-1zM455 214h1v6h-1zM462 62h1v6h-1zM462 214h1v6h-1zM469 62h1v6h-1zM469 214h1v6h-1zM475 62h1v6h-1zM475 214h1v6h-1zM483 62h1v9h-1zM483 211h1v9h-1zM489 62h1v6h-1zM489 214h1v6h-1zM497 62h1v6h-1zM497 214h1v6h-1zM503 62h1v6h-1zM503 214h1v6h-1zM510 62h1v6h-1zM510 214h1v6h-1zM517 62h1v6h-1zM517 214h1v6h-1zM523 62h1v9h-1zM523 211h1v9h-1zM531 62h1v6h-1zM531 214h1v6h-1zM537 62h1v6h-1zM537 214h1v6h-1zM545 62h1v6h-1zM545 214h1v6h-1zM551 62h1v6h-1zM551 214h1v6h-1zM557 62h1v6h-1zM557 214h1v6h-1zM565 62h1v9h-1zM565 211h1v9h-1zM571 62h1v6h-1zM571 214h1v6h-1zM579 62h1v6h-1zM579 214h1v6h-1zM585 62h1v6h-1zM585 214h1v6h-1zM593 62h1v6h-1zM593 214h1v6h-1zM599 62h1v6h-1zM599 214h1v6h-1zM606 62h1v9h-1zM606 211h1v9h-1zM613 62h1v6h-1zM613 214h1v6h-1zM619 62h1v6h-1zM619 214h1v6h-1zM627 62h1v6h-1zM627 214h1v6h-1zM633 62h1v6h-1zM633 214h1v6h-1zM641 62h1v6h-1zM641 214h1v6h-1zM647 62h1v9h-1zM647 211h1v9h-1zM654 62h1v6h-1zM654 214h1v6h-1zM661 62h1v6h-1zM661 214h1v6h-1zM668 62h1v6h-1zM668 214h1v6h-1zM675 62h1v6h-1zM675 214h1v6h-1zM681 62h1v6h-1zM681 214h1v6h-1zM688 62h1v9h-1zM688 211h1v9h-1zM695 62h1v6h-1zM695 214h1v6h-1zM702 62h1v6h-1zM702 214h1v6h-1zM709 62h1v6h-1zM709 214h1v6h-1zM716 62h1v6h-1zM716 214h1v6h-1zM723 62h1v6h-1zM723 214h1v6h-1zM730 62h1v9h-1zM730 211h1v9h-1zM736 62h1v6h-1zM736 214h1v6h-1zM743 62h1v6h-1zM743 214h1v6h-1zM750 62h1v6h-1zM750 214h1v6h-1zM757 62h1v6h-1zM757 214h1v6h-1zM764 62h1v6h-1zM764 214h1v6h-1zM771 62h1v9h-1zM771 211h1v9h-1zM778 62h1v6h-1zM778 214h1v6h-1zM784 62h1v6h-1zM784 214h1v6h-1zM792 62h1v6h-1zM792 214h1v6h-1zM798 62h1v6h-1zM798 214h1v6h-1zM805 62h1v6h-1zM805 214h1v6h-1zM812 62h1v9h-1zM812 211h1v9h-1zM819 62h1v6h-1zM819 214h1v6h-1zM826 62h1v6h-1zM826 214h1v6h-1zM201 220h9v1h-9zM830 220h9v1h-9zM204 199h6v1h-6zM830 199h6v1h-6zM204 178h6v1h-6zM830 178h6v1h-6zM204 166h6v1h-6zM830 166h6v1h-6zM204 157h6v1h-6zM830 157h6v1h-6zM201 150h9v1h-9zM830 150h9v1h-9zM204 130h6v1h-6zM830 130h6v1h-6zM204 109h6v1h-6zM830 109h6v1h-6zM204 97h6v1h-6zM830 97h6v1h-6zM204 88h6v1h-6zM830 88h6v1h-6zM201 81h9v1h-9zM830 81h9v1h-9zM204 61h6v1h-6zM830 61h6v1h-6zM850 77h33v1h-33zM850 204h33v1h-33zM850 77h1v128h-1zM882 77h1v128h-1zM878 191h4v1h-4zM878 178h4v1h-4zM878 171h4v1h-4zM878 165h4v1h-4zM878 149h4v1h-4zM878 136h4v1h-4zM878 129h4v1h-4zM878 123h4v1h-4zM875 161h7v1h-7zM878 107h4v1h-4zM878 94h4v1h-4zM878 86h4v1h-4zM878 81h4v1h-4zM875 119h7v1h-7zM914 70h5v1h-5zM914 112h5v1h-5zM914 154h5v1h-5zM914 196h5v1h-5zM210 255h620v1h-620zM210 449h620v1h-620zM210 255h1v195h-1zM829 255h1v195h-1zM214 256h1v6h-1zM214 443h1v6h-1zM222 256h1v6h-1zM222 443h1v6h-1zM228 256h1v6h-1zM228 443h1v6h-1zM236 256h1v9h-1zM236 440h1v9h-1zM242 256h1v6h-1zM242 443h1v6h-1zM249 256h1v6h-1zM249 443h1v6h-1zM256 256h1v6h-1zM256 443h1v6h-1zM262 256h1v6h-1zM262 443h1v6h-1zM270 256h1v6h-1zM270 443h1v6h-1zM276 256h1v9h-1zM276 440h1v9h-1zM284 256h1v6h-1zM284 443h1v6h-1zM290 256h1v6h-1zM290 443h1v6h-1zM297 256h1v6h-1zM297 443h1v6h-1zM304 256h1v6h-1zM304 443h1v6h-1zM311 256h1v6h-1zM311 443h1v6h-1zM318 256h1v9h-1zM318 440h1v9h-1zM324 256h1v6h-1zM324 443h1v6h-1zM332 256h1v6h-1zM332 443h1v6h-1zM338 256h1v6h-1zM338 443h1v6h-1zM345 256h1v6h-1zM345 443h1v6h-1zM352 256h1v6h-1zM352 443h1v6h-1zM359 256h1v9h-1zM359 440h1v9h-1zM366 256h1v6h-1zM366 443h1v6h-1zM373 256h1v6h-1zM373 443h1v6h-1zM379 256h1v6h-1zM379 443h1v6h-1zM386 256h1v6h-1zM386 443h1v6h-1zM393 256h1v6h-1zM393 443h1v6h-1zM400 256h1v9h-1zM400 440h1v9h-1zM407 256h1v6h-1zM407 443h1v6h-1zM414 256h1v6h-1zM414 443h1v6h-1zM421 256h1v6h-1zM421 443h1v6h-1zM427 256h1v6h-1zM427 443h1v6h-1zM435 256h1v6h-1zM435 443h1v6h-1zM441 256h1v9h-1zM441 440h1v9h-1zM448 256h1v6h-1zM448 443h1v6h-1zM455 256h1v6h-1zM455 443h1v6h-1zM462 256h1v6h-1zM462 443h1v6h-1zM469 256h1v6h-1zM469 443h1v6h-1zM475 256h1v6h-1zM475 443h1v6h-1zM483 256h1v9h-1zM483 440h1v9h-1zM489 256h1v6h-1zM489 443h1v6h-1zM497 256h1v6h-1zM497 443h1v6h-1zM503 256h1v6h-1zM503 443h1v6h-1zM510 256h1v6h-1zM510 443h1v6h-1zM517 256h1v6h-1zM517 443h1v6h-1zM523 256h1v9h-1zM523 440h1v9h-1zM531 256h1v6h-1zM531 443h1v6h-1zM537 256h1v6h-1zM537 443h1v6h-1zM545 256h1v6h-1zM545 443h1v6h-1zM551 256h1v6h-1zM551 443h1v6h-1zM557 256h1v6h-1zM557 443h1v6h-1zM565 256h1v9h-1zM565 440h1v9h-1zM571 256h1v6h-1zM571 443h1v6h-1zM579 256h1v6h-1zM579 443h1v6h-1zM585 256h1v6h-1zM585 443h1v6h-1zM593 256h1v6h-1zM593 443h1v6h-1zM599 256h1v6h-1zM599 443h1v6h-1zM606 256h1v9h-1zM606 440h1v9h-1zM613 256h1v6h-1zM613 443h1v6h-1zM619 256h1v6h-1zM619 443h1v6h-1zM627 256h1v6h-1zM627 443h1v6h-1zM633 256h1v6h-1zM633 443h1v6h-1zM641 256h1v6h-1zM641 443h1v6h-1zM647 256h1v9h-1zM647 440h1v9h-1zM654 256h1v6h-1zM654 443h1v6h-1zM661 256h1v6h-1zM661 443h1v6h-1zM668 256h1v6h-1zM668 443h1v6h-1zM675 256h1v6h-1zM675 443h1v6h-1zM681 256h1v6h-1zM681 443h1v6h-1zM688 256h1v9h-1zM688 440h1v9h-1zM695 256h1v6h-1zM695 443h1v6h-1zM702 256h1v6h-1zM702 443h1v6h-1zM709 256h1v6h-1zM709 443h1v6h-1zM716 256h1v6h-1zM716 443h1v6h-1zM723 256h1v6h-1zM723 443h1v6h-1zM730 256h1v9h-1zM730 440h1v9h-1zM736 256h1v6h-1zM736 443h1v6h-1zM743 256h1v6h-1zM743 443h1v6h-1zM750 256h1v6h-1zM750 443h1v6h-1zM757 256h1v6h-1zM757 443h1v6h-1zM764 256h1v6h-1zM764 443h1v6h-1zM771 256h1v9h-1zM771 440h1v9h-1zM778 256h1v6h-1zM778 443h1v6h-1zM784 256h1v6h-1zM784 443h1v6h-1zM792 256h1v6h-1zM792 443h1v6h-1zM798 256h1v6h-1zM798 443h1v6h-1zM805 256h1v6h-1zM805 443h1v6h-1zM812 256h1v9h-1zM812 440h1v9h-1zM819 256h1v6h-1zM819 443h1v6h-1zM826 256h1v6h-1zM826 443h1v6h-1zM850 275h33v1h-33zM850 429h33v1h-33zM850 275h1v155h-1zM882 275h1v155h-1zM878 421h4v1h-4zM878 413h4v1h-4zM878 406h4v1h-4zM878 398h4v1h-4zM875 390h7v1h-7zM878 383h4v1h-4zM878 375h4v1h-4zM878 367h4v1h-4zM878 360h4v1h-4zM875 352h7v1h-7zM878 344h4v1h-4zM878 337h4v1h-4zM878 329h4v1h-4zM878 321h4v1h-4zM875 314h7v1h-7zM878 306h4v1h-4zM878 298h4v1h-4zM878 291h4v1h-4zM878 283h4v1h-4zM210 501h620v1h-620zM210 678h620v1h-620zM210 501h1v178h-1zM829 501h1v178h-1zM214 502h1v6h-1zM214 672h1v6h-1zM222 502h1v6h-1zM222 672h1v6h-1zM228 502h1v6h-1zM228 672h1v6h-1zM236 502h1v9h-1zM236 669h1v9h-1zM242 502h1v6h-1zM242 672h1v6h-1zM249 502h1v6h-1zM249 672h1v6h-1zM256 502h1v6h-1zM256 672h1v6h-1zM262 502h1v6h-1zM262 672h1v6h-1zM270 502h1v6h-1zM270 672h1v6h-1zM276 502h1v9h-1zM276 669h1v9h-1zM284 502h1v6h-1zM284 672h1v6h-1zM290 502h1v6h-1zM290 672h1v6h-1zM297 502h1v6h-1zM297 672h1v6h-1zM304 502h1v6h-1zM304 672h1v6h-1zM311 502h1v6h-1zM311 672h1v6h-1zM318 502h1v9h-1zM318 669h1v9h-1zM324 502h1v6h-1zM324 672h1v6h-1zM332 502h1v6h-1zM332 672h1v6h-1zM338 502h1v6h-1zM338 672h1v6h-1zM345 502h1v6h-1zM345 672h1v6h-1zM352 502h1v6h-1zM352 672h1v6h-1zM359 502h1v9h-1zM359 669h1v9h-1zM366 502h1v6h-1zM366 672h1v6h-1zM373 502h1v6h-1zM373 672h1v6h-1zM379 502h1v6h-1zM379 672h1v6h-1zM386 502h1v6h-1zM386 672h1v6h-1zM393 502h1v6h-1zM393 672h1v6h-1zM400 502h1v9h-1zM400 669h1v9h-1zM407 502h1v6h-1zM407 672h1v6h-1zM414 502h1v6h-1zM414 672h1v6h-1zM421 502h1v6h-1zM421 672h1v6h-1zM427 502h1v6h-1zM427 672h1v6h-1zM435 502h1v6h-1zM435 672h1v6h-1zM441 502h1v9h-1zM441 669h1v9h-1zM448 502h1v6h-1zM448 672h1v6h-1zM455 502h1v6h-1zM455 672h1v6h-1zM462 502h1v6h-1zM462 672h1v6h-1zM469 502h1v6h-1zM469 672h1v6h-1zM475 502h1v6h-1zM475 672h1v6h-1zM483 502h1v9h-1zM483 669h1v9h-1zM489 502h1v6h-1zM489 672h1v6h-1zM497 502h1v6h-1zM497 672h1v6h-1zM503 502h1v6h-1zM503 672h1v6h-1zM510 502h1v6h-1zM510 672h1v6h-1zM517 502h1v6h-1zM517 672h1v6h-1zM523 502h1v9h-1zM523 669h1v9h-1zM531 502h1v6h-1zM531 672h1v6h-1zM537 502h1v6h-1zM537 672h1v6h-1zM545 502h1v6h-1zM545 672h1v6h-1zM551 502h1v6h-1zM551 672h1v6h-1zM557 502h1v6h-1zM557 672h1v6h-1zM565 502h1v9h-1zM565 669h1v9h-1zM571 502h1v6h-1zM571 672h1v6h-1zM579 502h1v6h-1zM579 672h1v6h-1zM585 502h1v6h-1zM585 672h1v6h-1zM593 502h1v6h-1zM593 672h1v6h-1zM599 502h1v6h-1zM599 672h1v6h-1zM606 502h1v9h-1zM606 669h1v9h-1zM613 502h1v6h-1zM613 672h1v6h-1zM619 502h1v6h-1zM619 672h1v6h-1zM627 502h1v6h-1zM627 672h1v6h-1zM633 502h1v6h-1zM633 672h1v6h-1zM641 502h1v6h-1zM641 672h1v6h-1zM647 502h1v9h-1zM647 669h1v9h-1zM654 502h1v6h-1zM654 672h1v6h-1zM661 502h1v6h-1zM661 672h1v6h-1zM668 502h1v6h-1zM668 672h1v6h-1zM675 502h1v6h-1zM675 672h1v6h-1zM681 502h1v6h-1zM681 672h1v6h-1zM688 502h1v9h-1zM688 669h1v9h-1zM695 502h1v6h-1zM695 672h1v6h-1zM702 502h1v6h-1zM702 672h1v6h-1zM709 502h1v6h-1zM709 672h1v6h-1zM716 502h1v6h-1zM716 672h1v6h-1zM723 502h1v6h-1zM723 672h1v6h-1zM730 502h1v9h-1zM730 669h1v9h-1zM736 502h1v6h-1zM736 672h1v6h-1zM743 502h1v6h-1zM743 672h1v6h-1zM750 502h1v6h-1zM750 672h1v6h-1zM757 502h1v6h-1zM757 672h1v6h-1zM764 502h1v6h-1zM764 672h1v6h-1zM771 502h1v9h-1zM771 669h1v9h-1zM778 502h1v6h-1zM778 672h1v6h-1zM784 502h1v6h-1zM784 672h1v6h-1zM792 502h1v6h-1zM792 672h1v6h-1zM798 502h1v6h-1zM798 672h1v6h-1zM805 502h1v6h-1zM805 672h1v6h-1zM812 502h1v9h-1zM812 669h1v9h-1zM819 502h1v6h-1zM819 672h1v6h-1zM826 502h1v6h-1zM826 672h1v6h-1zM201 501h9v1h-9zM830 501h9v1h-9zM204 508h6v1h-6zM830 508h6v1h-6zM204 515h6v1h-6zM830 515h6v1h-6zM204 522h6v1h-6zM830 522h6v1h-6zM204 529h6v1h-6zM830 529h6v1h-6zM201 536h9v1h-9zM830 536h9v1h-9zM204 543h6v1h-6zM830 543h6v1h-6zM204 550h6v1h-6zM830 550h6v1h-6zM204 557h6v1h-6zM830 557h6v1h-6zM204 565h6v1h-6zM830 565h6v1h-6zM201 572h9v1h-9zM830 572h9v1h-9zM204 579h6v1h-6zM830 579h6v1h-6zM204 586h6v1h-6zM830 586h6v1h-6zM204 593h6v1h-6zM830 593h6v1h-6zM204 600h6v1h-6zM830 600h6v1h-6zM201 607h9v1h-9zM830 607h9v1h-9zM204 614h6v1h-6zM830 614h6v1h-6zM204 621h6v1h-6zM830 621h6v1h-6zM204 628h6v1h-6zM830 628h6v1h-6zM204 635h6v1h-6zM830 635h6v1h-6zM201 643h9v1h-9zM830 643h9v1h-9zM204 650h6v1h-6zM830 650h6v1h-6zM204 657h6v1h-6zM830 657h6v1h-6zM204 664h6v1h-6zM830 664h6v1h-6zM204 671h6v1h-6zM830 671h6v1h-6zM201 678h9v1h-9zM830 678h9v1h-9z"/>
<text x="414" y="30.8" font-size="17.04" textLength="86.8" lengthAdjust="spacingAndGlyphs" fill="#fff" stroke="#000" stroke-width="0.3">2006/076</text>
<text x="511.7" y="30.8" font-size="17.04" textLength="114.6" lengthAdjust="spacingAndGlyphs" fill="#fff" stroke="#000" stroke-width="0.3">23:22:00.000</text>
<text x="264.7" y="51.9" font-size="17.04" textLength="110.9" lengthAdjust="spacingAndGlyphs" fill="#fff" stroke="#000" stroke-width="0.3">ELSSCIL/MEx</text>
<text x="386.6" y="51.9" font-size="17.04" textLength="62.9" lengthAdjust="spacingAndGlyphs" fill="#fff" stroke="#000" stroke-width="0.3">ELS-07</text>
<text x="461.3" y="51.9" font-size="17.04" textLength="53.1" lengthAdjust="spacingAndGlyphs" fill="#fff" stroke="#000" stroke-width="0.3">LR-Bk</text>
<text x="533.9" y="51.9" font-size="17.04" textLength="241.2" lengthAdjust="spacingAndGlyphs" fill="#fff" stroke="#000" stroke-width="0.3">(ergs/(cm**2-sr-sec-eV))</text>
<text x="218.1" y="238.4" font-size="13.13" textLength="36.8" lengthAdjust="spacingAndGlyphs" fill="#fff" style="stroke:none">23:25</text>
<text x="300.1" y="238.4" font-size="13.13" textLength="36.8" lengthAdjust="spacingAndGlyphs" fill="#fff" style="stroke:none">23:35</text>
<text x="382.1" y="238.4" font-size="13.13" textLength="36.8" lengthAdjust="spacingAndGlyphs" fill="#fff" style="stroke:none">23:45</text>
<text x="465.1" y="238.4" font-size="13.13" textLength="36.8" lengthAdjust="spacingAndGlyphs" fill="#fff" style="stroke:none">23:55</text>
<text x="547.1" y="238.4" font-size="13.13" textLength="36.8" lengthAdjust="spacingAndGlyphs" fill="#fff" style="stroke:none">00:05</text>
<text x="629.1" y="238.4" font-size="13.13" textLength="36.8" lengthAdjust="spacingAndGlyphs" fill="#fff" style="stroke:none">00:15</text>
<text x="712.1" y="238.4" font-size="13.13" textLength="36.8" lengthAdjust="spacingAndGlyphs" fill="#fff" style="stroke:none">00:25</text>
<text x="794.1" y="238.4" font-size="13.13" textLength="36.8" lengthAdjust="spacingAndGlyphs" fill="#fff" style="stroke:none">00:35</text>
<text x="117.8" y="238.4" font-size="13.13" textLength="63.2" lengthAdjust="spacingAndGlyphs" fill="#fff" style="stroke:none">GMT(min)</text>
<text x="175.9" y="86.0" font-size="14.11" textLength="13.2" lengthAdjust="spacingAndGlyphs" fill="#fff">10</text>
<text x="189.9" y="79.10000000000001" font-size="8.38" textLength="4.4" lengthAdjust="spacingAndGlyphs" fill="#fff">2</text>
<text x="175.9" y="155.4" font-size="14.11" textLength="13.2" lengthAdjust="spacingAndGlyphs" fill="#fff">10</text>
<text x="189.9" y="148.5" font-size="8.38" textLength="4.4" lengthAdjust="spacingAndGlyphs" fill="#fff">1</text>
<text x="175.9" y="223.7" font-size="14.11" textLength="13.2" lengthAdjust="spacingAndGlyphs" fill="#fff">10</text>
<text x="189.9" y="216.79999999999998" font-size="8.38" textLength="4.4" lengthAdjust="spacingAndGlyphs" fill="#fff">0</text>
<text transform="translate(69.2,139.8) rotate(-90)" x="-65.5" y="0" font-size="15.08" textLength="131.0" lengthAdjust="spacingAndGlyphs" fill="#fff">Electron Energy</text>
<text transform="translate(90.5,139.8) rotate(-90)" x="-15.0" y="0" font-size="15.08" textLength="30.0" lengthAdjust="spacingAndGlyphs" fill="#fff">(eV)</text>
<text x="851.9" y="59.8" font-size="17.32" textLength="31.1" lengthAdjust="spacingAndGlyphs" fill="#fff" stroke="#000" stroke-width="0.3">DEF</text>
<text x="894.9" y="83.0" font-size="18.16" textLength="16.3" lengthAdjust="spacingAndGlyphs" fill="#fff" stroke="#000" stroke-width="0.3">10</text>
<text x="921.8" y="74.2" font-size="11.17" textLength="6.3" lengthAdjust="spacingAndGlyphs" fill="#fff">3</text>
<text x="894.9" y="124.83" font-size="18.16" textLength="16.3" lengthAdjust="spacingAndGlyphs" fill="#fff" stroke="#000" stroke-width="0.3">10</text>
<text x="921.8" y="116.03" font-size="11.17" textLength="6.3" lengthAdjust="spacingAndGlyphs" fill="#fff">4</text>
<text x="894.9" y="166.66" font-size="18.16" textLength="16.3" lengthAdjust="spacingAndGlyphs" fill="#fff" stroke="#000" stroke-width="0.3">10</text>
<text x="921.8" y="157.85999999999999" font-size="11.17" textLength="6.3" lengthAdjust="spacingAndGlyphs" fill="#fff">5</text>
<text x="894.9" y="208.49" font-size="18.16" textLength="16.3" lengthAdjust="spacingAndGlyphs" fill="#fff" stroke="#000" stroke-width="0.3">10</text>
<text x="921.8" y="199.69" font-size="11.17" textLength="6.3" lengthAdjust="spacingAndGlyphs" fill="#fff">6</text>
<text x="218.1" y="467.8" font-size="13.13" textLength="36.8" lengthAdjust="spacingAndGlyphs" fill="#fff" style="stroke:none">23:25</text>
<text x="300.1" y="467.8" font-size="13.13" textLength="36.8" lengthAdjust="spacingAndGlyphs" fill="#fff" style="stroke:none">23:35</text>
<text x="382.1" y="467.8" font-size="13.13" textLength="36.8" lengthAdjust="spacingAndGlyphs" fill="#fff" style="stroke:none">23:45</text>
<text x="465.1" y="467.8" font-size="13.13" textLength="36.8" lengthAdjust="spacingAndGlyphs" fill="#fff" style="stroke:none">23:55</text>
<text x="547.1" y="467.8" font-size="13.13" textLength="36.8" lengthAdjust="spacingAndGlyphs" fill="#fff" style="stroke:none">00:05</text>
<text x="629.1" y="467.8" font-size="13.13" textLength="36.8" lengthAdjust="spacingAndGlyphs" fill="#fff" style="stroke:none">00:15</text>
<text x="712.1" y="467.8" font-size="13.13" textLength="36.8" lengthAdjust="spacingAndGlyphs" fill="#fff" style="stroke:none">00:25</text>
<text x="794.1" y="467.8" font-size="13.13" textLength="36.8" lengthAdjust="spacingAndGlyphs" fill="#fff" style="stroke:none">00:35</text>
<text x="117.8" y="467.8" font-size="13.13" textLength="63.2" lengthAdjust="spacingAndGlyphs" fill="#fff" style="stroke:none">GMT(min)</text>
<text x="74.6" y="269.1" font-size="12.85" textLength="43.3" lengthAdjust="spacingAndGlyphs" fill="#fff">ELS-11</text>
<text x="126.6" y="269.1" font-size="12.85" textLength="76.2" lengthAdjust="spacingAndGlyphs" fill="#fff">Pitch Angle</text>
<text x="71" y="286.65000000000003" font-size="12.85" textLength="46.9" lengthAdjust="spacingAndGlyphs" fill="#fff">ELS-10</text>
<text x="126.6" y="286.65000000000003" font-size="12.85" textLength="76.2" lengthAdjust="spacingAndGlyphs" fill="#fff">Pitch Angle</text>
<text x="68" y="304.20000000000005" font-size="12.85" textLength="49.9" lengthAdjust="spacingAndGlyphs" fill="#fff">ELS-09</text>
<text x="126.6" y="304.20000000000005" font-size="12.85" textLength="76.2" lengthAdjust="spacingAndGlyphs" fill="#fff">Pitch Angle</text>
<text x="68" y="321.75" font-size="12.85" textLength="49.9" lengthAdjust="spacingAndGlyphs" fill="#fff">ELS-08</text>
<text x="126.6" y="321.75" font-size="12.85" textLength="76.2" lengthAdjust="spacingAndGlyphs" fill="#fff">Pitch Angle</text>
<text x="68" y="339.3" font-size="12.85" textLength="49.9" lengthAdjust="spacingAndGlyphs" fill="#fff">ELS-07</text>
<text x="126.6" y="339.3" font-size="12.85" textLength="76.2" lengthAdjust="spacingAndGlyphs" fill="#fff">Pitch Angle</text>
<text x="68" y="356.85" font-size="12.85" textLength="49.9" lengthAdjust="spacingAndGlyphs" fill="#fff">ELS-06</text>
<text x="126.6" y="356.85" font-size="12.85" textLength="76.2" lengthAdjust="spacingAndGlyphs" fill="#fff">Pitch Angle</text>
<text x="68" y="374.40000000000003" font-size="12.85" textLength="49.9" lengthAdjust="spacingAndGlyphs" fill="#fff">ELS-05</text>
<text x="126.6" y="374.40000000000003" font-size="12.85" textLength="76.2" lengthAdjust="spacingAndGlyphs" fill="#fff">Pitch Angle</text>
<text x="68" y="391.95000000000005" font-size="12.85" textLength="49.9" lengthAdjust="spacingAndGlyphs" fill="#fff">ELS-04</text>
<text x="126.6" y="391.95000000000005" font-size="12.85" textLength="76.2" lengthAdjust="spacingAndGlyphs" fill="#fff">Pitch Angle</text>
<text x="68" y="409.5" font-size="12.85" textLength="49.9" lengthAdjust="spacingAndGlyphs" fill="#fff">ELS-03</text>
<text x="126.6" y="409.5" font-size="12.85" textLength="76.2" lengthAdjust="spacingAndGlyphs" fill="#fff">Pitch Angle</text>
<text x="68" y="427.05000000000007" font-size="12.85" textLength="49.9" lengthAdjust="spacingAndGlyphs" fill="#fff">ELS-02</text>
<text x="126.6" y="427.05000000000007" font-size="12.85" textLength="76.2" lengthAdjust="spacingAndGlyphs" fill="#fff">Pitch Angle</text>
<text x="71" y="444.6" font-size="12.85" textLength="46.9" lengthAdjust="spacingAndGlyphs" fill="#fff">ELS-01</text>
<text x="126.6" y="444.6" font-size="12.85" textLength="76.2" lengthAdjust="spacingAndGlyphs" fill="#fff">Pitch Angle</text>
<text x="851.9" y="257.8" font-size="17.32" textLength="30.6" lengthAdjust="spacingAndGlyphs" fill="#fff" stroke="#000" stroke-width="0.3">Deg</text>
<text x="894.9" y="280.59999999999997" font-size="17.32" textLength="28.1" lengthAdjust="spacingAndGlyphs" fill="#fff" stroke="#000" stroke-width="0.3">180</text>
<text x="894.9" y="319.29999999999995" font-size="17.32" textLength="28.1" lengthAdjust="spacingAndGlyphs" fill="#fff" stroke="#000" stroke-width="0.3">135</text>
<text x="894.9" y="357.99999999999994" font-size="17.32" textLength="20.3" lengthAdjust="spacingAndGlyphs" fill="#fff" stroke="#000" stroke-width="0.3">90</text>
<text x="894.9" y="396.7" font-size="17.32" textLength="20.3" lengthAdjust="spacingAndGlyphs" fill="#fff" stroke="#000" stroke-width="0.3">45</text>
<text x="894.9" y="435.4" font-size="17.32" textLength="8.8" lengthAdjust="spacingAndGlyphs" fill="#fff" stroke="#000" stroke-width="0.3">0</text>
<text x="218.1" y="696.7" font-size="12.85" textLength="36.8" lengthAdjust="spacingAndGlyphs" fill="#fff" style="stroke:none">23:25</text>
<text x="300.1" y="696.7" font-size="12.85" textLength="36.8" lengthAdjust="spacingAndGlyphs" fill="#fff" style="stroke:none">23:35</text>
<text x="382.1" y="696.7" font-size="12.85" textLength="36.8" lengthAdjust="spacingAndGlyphs" fill="#fff" style="stroke:none">23:45</text>
<text x="465.1" y="696.7" font-size="12.85" textLength="36.8" lengthAdjust="spacingAndGlyphs" fill="#fff" style="stroke:none">23:55</text>
<text x="547.1" y="696.7" font-size="12.85" textLength="36.8" lengthAdjust="spacingAndGlyphs" fill="#fff" style="stroke:none">00:05</text>
<text x="629.1" y="696.7" font-size="12.85" textLength="36.8" lengthAdjust="spacingAndGlyphs" fill="#fff" style="stroke:none">00:15</text>
<text x="712.1" y="696.7" font-size="12.85" textLength="36.8" lengthAdjust="spacingAndGlyphs" fill="#fff" style="stroke:none">00:25</text>
<text x="794.1" y="696.7" font-size="12.85" textLength="36.8" lengthAdjust="spacingAndGlyphs" fill="#fff" style="stroke:none">00:35</text>
<text x="117.8" y="696.7" font-size="12.85" textLength="63.2" lengthAdjust="spacingAndGlyphs" fill="#fff" style="stroke:none">GMT(min)</text>
<text x="187" y="506.5" font-size="13.97" textLength="7.0" lengthAdjust="spacingAndGlyphs" fill="#fff">4</text>
<text x="187" y="541.5" font-size="13.97" textLength="7.0" lengthAdjust="spacingAndGlyphs" fill="#fff">3</text>
<text x="187" y="577.5" font-size="13.97" textLength="7.0" lengthAdjust="spacingAndGlyphs" fill="#fff">2</text>
<text x="187" y="612.5" font-size="13.97" textLength="7.0" lengthAdjust="spacingAndGlyphs" fill="#fff">1</text>
<text x="187" y="648.5" font-size="13.97" textLength="7.0" lengthAdjust="spacingAndGlyphs" fill="#fff">0</text>
<text x="180.7" y="683.5" font-size="13.97" textLength="12.9" lengthAdjust="spacingAndGlyphs" fill="#fff">-1</text>
<text x="846" y="506.3" font-size="12.85" textLength="55.0" lengthAdjust="spacingAndGlyphs" fill="#fff">1.0e+04</text>
<text x="846" y="541.3" font-size="12.85" textLength="55.0" lengthAdjust="spacingAndGlyphs" fill="#fff">6.0e+03</text>
<text x="846" y="577.3" font-size="12.85" textLength="55.0" lengthAdjust="spacingAndGlyphs" fill="#fff">2.0e+03</text>
<text x="847.6" y="612.3" font-size="12.85" textLength="66.0" lengthAdjust="spacingAndGlyphs" fill="#fff">-2.0e+03</text>
<text x="847.6" y="648.3" font-size="12.85" textLength="66.0" lengthAdjust="spacingAndGlyphs" fill="#fff">-6.0e+03</text>
<text x="847.6" y="683.3" font-size="12.85" textLength="66.0" lengthAdjust="spacingAndGlyphs" fill="#fff">-1.0e+04</text>
<text x="211.9" y="492.2" font-size="16.76" textLength="236.5" lengthAdjust="spacingAndGlyphs" fill="#fff" stroke="#000" stroke-width="0.3">SAF_BXuT/Data Quality (L)</text>
<text x="531" y="492.2" font-size="16.76" textLength="298.4" lengthAdjust="spacingAndGlyphs" fill="#00ff00" stroke="#000" stroke-width="0.3">MEXORBMC/SPF X, Spacecraft (R)</text>
<text transform="translate(70.0,589.3) rotate(-90)" x="-72.3" y="0" font-size="15.08" textLength="144.7" lengthAdjust="spacingAndGlyphs" fill="#fff">Raw Data Quality</text>
<text transform="translate(88.5,589.3) rotate(-90)" x="-23.5" y="0" font-size="15.08" textLength="47.0" lengthAdjust="spacingAndGlyphs" fill="#fff">(Raw)</text>
<text transform="translate(971,589.3) rotate(90)" x="-85.3" y="0" font-size="15.08" textLength="170.7" lengthAdjust="spacingAndGlyphs" fill="#fff">Component Distance</text>
<text transform="translate(952,589.3) rotate(90)" x="-19.4" y="0" font-size="15.08" textLength="38.7" lengthAdjust="spacingAndGlyphs" fill="#fff">(km)</text>
<rect x="257" y="607" width="6" height="1" fill="#fff"/>
<rect x="264" y="607" width="14" height="1" fill="#fff"/>
<rect x="280" y="607" width="4" height="1" fill="#fff"/>
<rect x="284" y="609" width="1" height="1" fill="#fff"/>
<rect x="285" y="643" width="14" height="1" fill="#fff"/>
<rect x="301" y="643" width="14" height="1" fill="#fff"/>
<rect x="316" y="643" width="14" height="1" fill="#fff"/>
<rect x="332" y="643" width="14" height="1" fill="#fff"/>
<rect x="347" y="643" width="14" height="1" fill="#fff"/>
<rect x="363" y="643" width="14" height="1" fill="#fff"/>
<rect x="379" y="643" width="14" height="1" fill="#fff"/>
<rect x="394" y="643" width="14" height="1" fill="#fff"/>
<rect x="410" y="643" width="14" height="1" fill="#fff"/>
<rect x="425" y="643" width="14" height="1" fill="#fff"/>
<rect x="441" y="643" width="14" height="1" fill="#fff"/>
<rect x="457" y="643" width="14" height="1" fill="#fff"/>
<rect x="472" y="643" width="14" height="1" fill="#fff"/>
<rect x="488" y="643" width="14" height="1" fill="#fff"/>
<rect x="503" y="643" width="14" height="1" fill="#fff"/>
<rect x="519" y="643" width="14" height="1" fill="#fff"/>
<rect x="535" y="643" width="14" height="1" fill="#fff"/>
<rect x="550" y="643" width="14" height="1" fill="#fff"/>
<rect x="566" y="643" width="14" height="1" fill="#fff"/>
<rect x="581" y="643" width="14" height="1" fill="#fff"/>
<rect x="597" y="643" width="14" height="1" fill="#fff"/>
<rect x="613" y="643" width="14" height="1" fill="#fff"/>
<rect x="628" y="643" width="14" height="1" fill="#fff"/>
<rect x="644" y="643" width="14" height="1" fill="#fff"/>
<rect x="659" y="643" width="14" height="1" fill="#fff"/>
<rect x="675" y="643" width="14" height="1" fill="#fff"/>
<rect x="691" y="643" width="14" height="1" fill="#fff"/>
<rect x="706" y="643" width="3" height="1" fill="#fff"/>
<rect x="709" y="616" width="1" height="1" fill="#fff"/>
<rect x="710" y="607" width="4" height="1" fill="#fff"/>
<rect x="716" y="607" width="14" height="1" fill="#fff"/>
<rect x="731" y="607" width="14" height="1" fill="#fff"/>
<rect x="747" y="607" width="14" height="1" fill="#fff"/>
<rect x="762" y="607" width="14" height="1" fill="#fff"/>
<rect x="778" y="607" width="7" height="1" fill="#fff"/>
<path fill="#00ff00" d="M211 587h1v1h-1zM212 587h1v1h-1zM213 587h1v1h-1zM214 587h1v1h-1zM215 587h1v1h-1zM219 587h1v1h-1zM220 587h1v1h-1zM221 587h1v1h-1zM222 587h1v1h-1zM223 587h1v1h-1zM227 588h1v1h-1zM228 588h1v1h-1zM229 588h1v1h-1zM230 588h1v1h-1zM231 588h1v1h-1zM235 588h1v1h-1zM236 588h1v1h-1zM237 588h1v1h-1zM238 588h1v1h-1zM239 588h1v1h-1zM242 588h1v1h-1zM245 589h1v1h-1zM246 589h1v1h-1zM247 589h1v1h-1zM248 589h1v1h-1zM249 589h1v1h-1zM253 589h1v1h-1zM254 589h1v1h-1zM255 589h1v1h-1zM256 589h1v1h-1zM257 589h1v1h-1zM261 590h1v1h-1zM262 590h1v1h-1zM263 590h1v1h-1zM264 590h1v1h-1zM265 590h1v1h-1zM269 590h1v1h-1zM270 590h1v1h-1zM271 590h1v1h-1zM272 590h1v1h-1zM273 590h1v1h-1zM276 591h1v1h-1zM279 591h1v1h-1zM280 591h1v1h-1zM281 591h1v1h-1zM282 591h1v1h-1zM283 591h1v1h-1zM287 591h1v1h-1zM288 591h1v1h-1zM289 591h1v1h-1zM290 591h1v1h-1zM291 591h1v1h-1zM295 592h1v1h-1zM296 592h1v1h-1zM297 592h1v1h-1zM298 592h1v1h-1zM299 592h1v1h-1zM303 592h1v1h-1zM304 592h1v1h-1zM305 592h1v1h-1zM306 592h1v1h-1zM307 592h1v1h-1zM310 592h1v1h-1zM313 592h1v1h-1zM314 592h1v1h-1zM315 592h1v1h-1zM316 592h1v1h-1zM317 592h1v1h-1zM321 593h1v1h-1zM322 593h1v1h-1zM323 593h1v1h-1zM324 593h1v1h-1zM325 593h1v1h-1zM329 593h1v1h-1zM330 593h1v1h-1zM331 593h1v1h-1zM332 593h1v1h-1zM333 593h1v1h-1zM337 594h1v1h-1zM338 594h1v1h-1zM339 594h1v1h-1zM340 594h1v1h-1zM341 594h1v1h-1zM344 594h1v1h-1zM347 594h1v1h-1zM348 594h1v1h-1zM349 594h1v1h-1zM350 595h1v1h-1zM351 595h1v1h-1zM355 595h1v1h-1zM356 595h1v1h-1zM357 595h1v1h-1zM358 595h1v1h-1zM359 595h1v1h-1zM363 595h1v1h-1zM364 595h1v1h-1zM365 595h1v1h-1zM366 595h1v1h-1zM367 596h1v1h-1zM371 596h1v1h-1zM372 596h1v1h-1zM373 596h1v1h-1zM374 596h1v1h-1zM375 596h1v1h-1zM378 596h1v1h-1zM381 596h1v1h-1zM382 596h1v1h-1zM383 596h1v1h-1zM384 596h1v1h-1zM385 596h1v1h-1zM389 596h1v1h-1zM390 596h1v1h-1zM391 597h1v1h-1zM392 597h1v1h-1zM393 597h1v1h-1zM397 597h1v1h-1zM398 597h1v1h-1zM399 597h1v1h-1zM400 597h1v1h-1zM401 597h1v1h-1zM405 597h1v1h-1zM406 597h1v1h-1zM407 597h1v1h-1zM408 598h1v1h-1zM409 598h1v1h-1zM412 598h1v1h-1zM415 598h1v1h-1zM416 598h1v1h-1zM417 598h1v1h-1zM418 598h1v1h-1zM419 598h1v1h-1zM423 598h1v1h-1zM424 598h1v1h-1zM425 598h1v1h-1zM426 598h1v1h-1zM427 598h1v1h-1zM431 598h1v1h-1zM432 598h1v1h-1zM433 598h1v1h-1zM434 598h1v1h-1zM435 598h1v1h-1zM439 598h1v1h-1zM440 598h1v1h-1zM441 599h1v1h-1zM442 599h1v1h-1zM443 599h1v1h-1zM446 599h1v1h-1zM449 599h1v1h-1zM450 599h1v1h-1zM451 599h1v1h-1zM452 599h1v1h-1zM453 599h1v1h-1zM457 599h1v1h-1zM458 599h1v1h-1zM459 599h1v1h-1zM460 599h1v1h-1zM461 599h1v1h-1zM465 599h1v1h-1zM466 599h1v1h-1zM467 599h1v1h-1zM468 599h1v1h-1zM469 599h1v1h-1zM473 599h1v1h-1zM474 599h1v1h-1zM475 599h1v1h-1zM476 599h1v1h-1zM477 599h1v1h-1zM480 599h1v1h-1zM483 600h1v1h-1zM484 600h1v1h-1zM485 600h1v1h-1zM486 600h1v1h-1zM487 600h1v1h-1zM491 600h1v1h-1zM492 600h1v1h-1zM493 600h1v1h-1zM494 600h1v1h-1zM495 600h1v1h-1zM499 600h1v1h-1zM500 600h1v1h-1zM501 600h1v1h-1zM502 600h1v1h-1zM503 600h1v1h-1zM507 600h1v1h-1zM508 600h1v1h-1zM509 600h1v1h-1zM510 600h1v1h-1zM511 600h1v1h-1zM514 600h1v1h-1zM517 600h1v1h-1zM518 600h1v1h-1zM519 600h1v1h-1zM520 600h1v1h-1zM521 600h1v1h-1zM525 600h1v1h-1zM526 600h1v1h-1zM527 600h1v1h-1zM528 600h1v1h-1zM529 600h1v1h-1zM533 600h1v1h-1zM534 600h1v1h-1zM535 600h1v1h-1zM536 600h1v1h-1zM537 600h1v1h-1zM541 600h1v1h-1zM542 600h1v1h-1zM543 600h1v1h-1zM544 600h1v1h-1zM545 600h1v1h-1zM548 599h1v1h-1zM551 599h1v1h-1zM552 599h1v1h-1zM553 599h1v1h-1zM554 599h1v1h-1zM555 599h1v1h-1zM559 599h1v1h-1zM560 599h1v1h-1zM561 599h1v1h-1zM562 599h1v1h-1zM563 599h1v1h-1zM567 599h1v1h-1zM568 599h1v1h-1zM569 599h1v1h-1zM570 599h1v1h-1zM571 599h1v1h-1zM575 599h1v1h-1zM576 599h1v1h-1zM577 599h1v1h-1zM578 599h1v1h-1zM579 599h1v1h-1zM582 599h1v1h-1zM585 599h1v1h-1zM586 599h1v1h-1zM587 599h1v1h-1zM588 599h1v1h-1zM589 599h1v1h-1zM593 598h1v1h-1zM594 598h1v1h-1zM595 598h1v1h-1zM596 598h1v1h-1zM597 598h1v1h-1zM601 598h1v1h-1zM602 598h1v1h-1zM603 598h1v1h-1zM604 598h1v1h-1zM605 598h1v1h-1zM609 598h1v1h-1zM610 598h1v1h-1zM611 598h1v1h-1zM612 598h1v1h-1zM613 597h1v1h-1zM616 597h1v1h-1zM619 597h1v1h-1zM620 597h1v1h-1zM621 597h1v1h-1zM622 597h1v1h-1zM623 597h1v1h-1zM627 597h1v1h-1zM628 597h1v1h-1zM629 597h1v1h-1zM630 597h1v1h-1zM631 597h1v1h-1zM635 597h1v1h-1zM636 597h1v1h-1zM637 597h1v1h-1zM638 596h1v1h-1zM639 596h1v1h-1zM643 596h1v1h-1zM644 596h1v1h-1zM645 596h1v1h-1zM646 596h1v1h-1zM647 596h1v1h-1zM650 596h1v1h-1zM653 596h1v1h-1zM654 596h1v1h-1zM655 596h1v1h-1zM656 596h1v1h-1zM657 596h1v1h-1zM661 596h1v1h-1zM662 596h1v1h-1zM663 595h1v1h-1zM664 595h1v1h-1zM665 595h1v1h-1zM669 595h1v1h-1zM670 595h1v1h-1zM671 595h1v1h-1zM672 595h1v1h-1zM673 595h1v1h-1zM677 595h1v1h-1zM678 595h1v1h-1zM679 595h1v1h-1zM680 594h1v1h-1zM681 594h1v1h-1zM684 594h1v1h-1zM687 594h1v1h-1zM688 594h1v1h-1zM689 594h1v1h-1zM690 594h1v1h-1zM691 594h1v1h-1zM695 594h1v1h-1zM696 594h1v1h-1zM697 594h1v1h-1zM698 594h1v1h-1zM699 594h1v1h-1zM703 594h1v1h-1zM704 594h1v1h-1zM705 593h1v1h-1zM706 593h1v1h-1zM707 593h1v1h-1zM711 593h1v1h-1zM712 593h1v1h-1zM713 593h1v1h-1zM714 593h1v1h-1zM715 593h1v1h-1zM718 593h1v1h-1zM721 592h1v1h-1zM722 592h1v1h-1zM723 592h1v1h-1zM724 592h1v1h-1zM725 592h1v1h-1zM729 592h1v1h-1zM730 592h1v1h-1zM731 592h1v1h-1zM732 592h1v1h-1zM733 592h1v1h-1zM737 592h1v1h-1zM738 591h1v1h-1zM739 591h1v1h-1zM740 591h1v1h-1zM741 591h1v1h-1zM745 591h1v1h-1zM746 591h1v1h-1zM747 591h1v1h-1zM748 591h1v1h-1zM749 591h1v1h-1zM752 591h1v1h-1zM755 591h1v1h-1zM756 591h1v1h-1zM757 591h1v1h-1zM758 591h1v1h-1zM759 591h1v1h-1zM763 590h1v1h-1zM764 590h1v1h-1zM765 590h1v1h-1zM766 590h1v1h-1zM767 590h1v1h-1zM771 590h1v1h-1zM772 590h1v1h-1zM773 590h1v1h-1zM774 590h1v1h-1zM775 590h1v1h-1zM779 589h1v1h-1zM780 589h1v1h-1zM781 589h1v1h-1zM782 589h1v1h-1zM783 589h1v1h-1zM786 589h1v1h-1zM789 589h1v1h-1zM790 589h1v1h-1zM791 589h1v1h-1zM792 589h1v1h-1zM793 589h1v1h-1zM797 588h1v1h-1zM798 588h1v1h-1zM799 588h1v1h-1zM800 588h1v1h-1zM801 588h1v1h-1zM805 588h1v1h-1zM806 588h1v1h-1zM807 588h1v1h-1zM808 588h1v1h-1zM809 588h1v1h-1zM813 587h1v1h-1zM814 587h1v1h-1zM815 587h1v1h-1zM816 587h1v1h-1zM817 587h1v1h-1zM820 587h1v1h-1zM823 587h1v1h-1zM824 587h1v1h-1zM825 587h1v1h-1zM826 587h1v1h-1zM827 587h1v1h-1z"/>
</svg></body></html>
